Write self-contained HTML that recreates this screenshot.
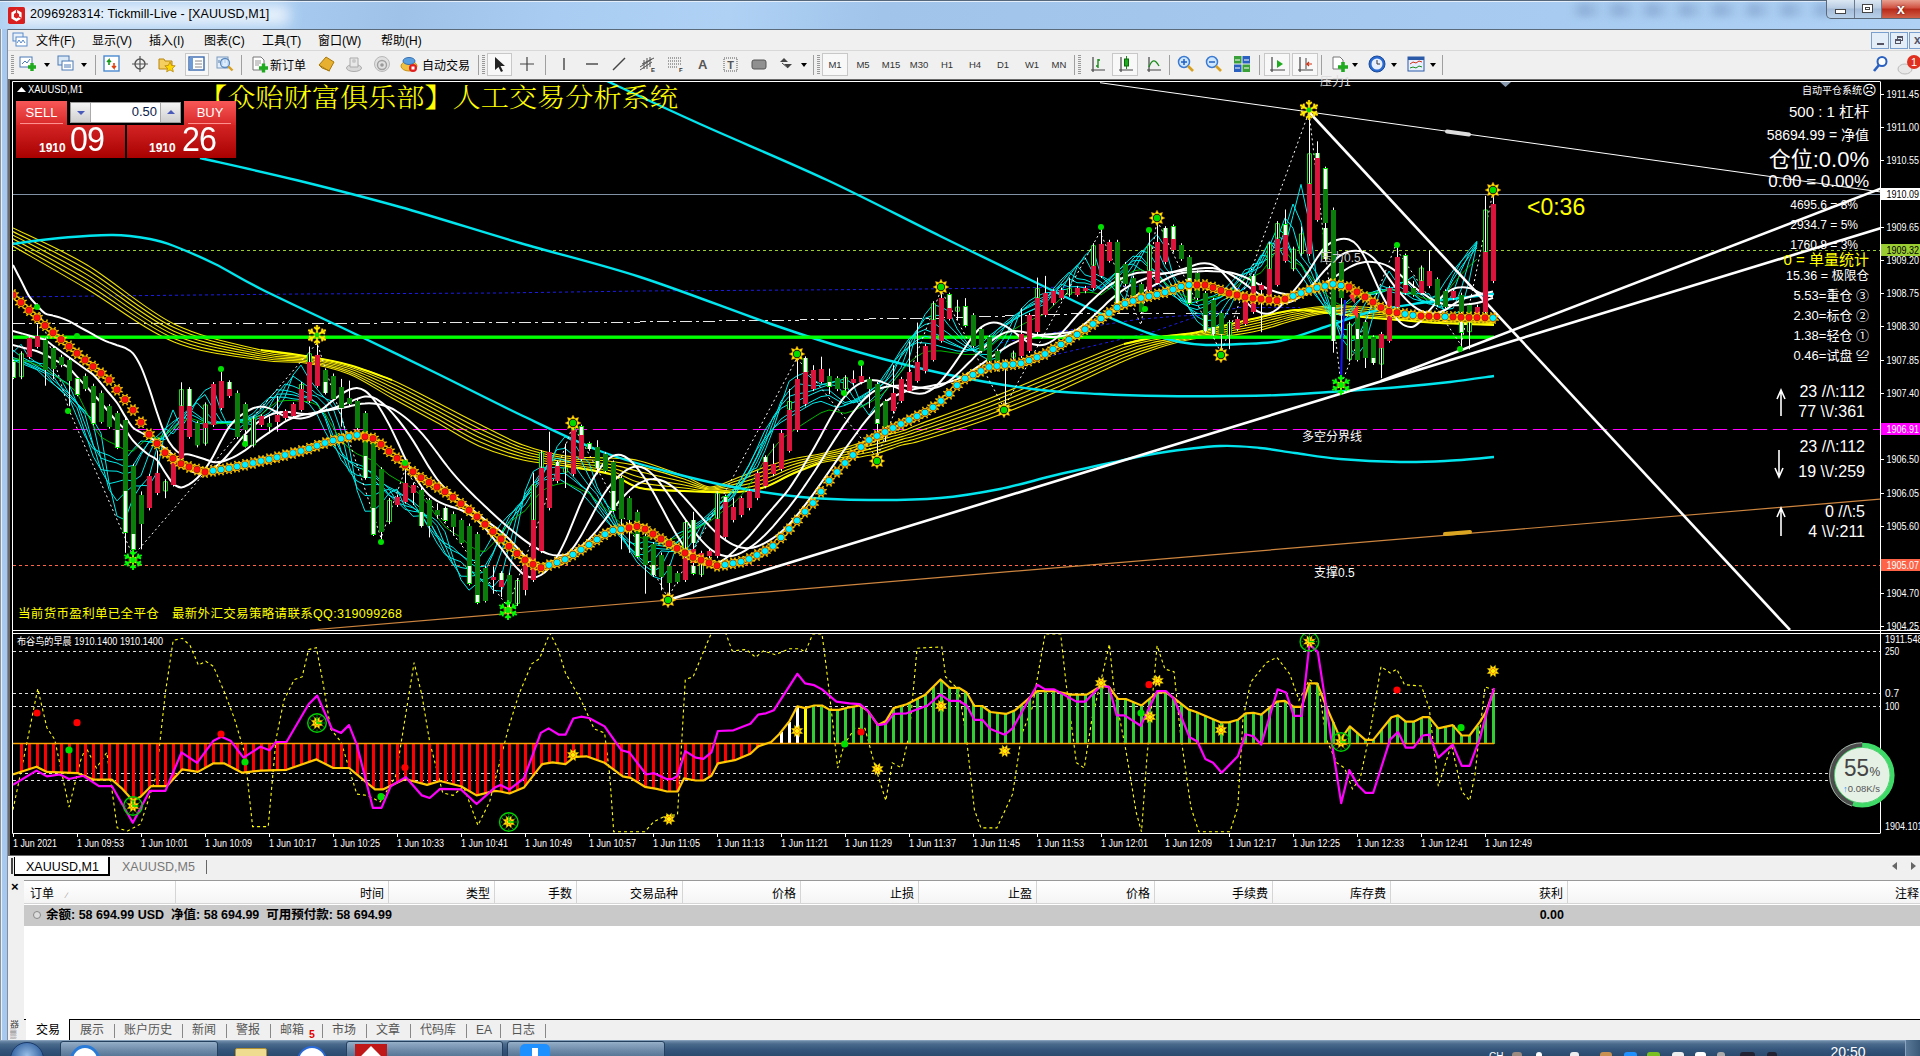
<!DOCTYPE html><html><head><meta charset="utf-8"><title>XAUUSD,M1</title><style>
*{box-sizing:border-box}
html,body{margin:0;padding:0}
body{width:1920px;height:1056px;overflow:hidden;position:relative;background:#f0f0f0;font-family:"Liberation Sans","Noto Sans CJK SC",sans-serif;font-size:12px;color:#000}
.abs{position:absolute}
#title{left:0;top:0;width:1920px;height:29px;background:linear-gradient(180deg,#56687c 0,#56687c 1px,#e4eefa 1px,#e4eefa 2px,rgba(255,255,255,0) 2px),linear-gradient(100deg,#b4d3f3 0%,#a8ccf1 14%,#9ec2e8 21%,#a9cdf2 29%,#aed1f4 38%,#a0c4ea 46%,#a3c7ec 60%,#a6caf0 75%,#aed1f4 100%)}
#title .t{left:30px;top:7px;font-size:12.5px;color:#000;white-space:nowrap;letter-spacing:0.1px}
#lb{left:0;top:29px;width:8px;height:1011px;background:linear-gradient(90deg,#5a6878 0,#e8f0f8 1.5px,#a9c9ee 2.5px,#a6c8ef 6.5px,#7f8fa0 7.5px)}
#menu{left:8px;top:29px;width:1912px;height:21px;background:#f0f0f0;border-top:1px solid #5c6b7c}
#menu span{position:absolute;top:1px;font-size:12px;white-space:nowrap}
#tb{left:8px;top:50px;width:1912px;height:29px;background:#f0f0f0;border-top:1px solid #d8d8d8}
.tf{position:absolute;top:8px;font-size:9.5px;color:#333;width:28px;text-align:center}
.sep{position:absolute;top:4px;width:1px;height:20px;background:#a0a0a0}
.grip{position:absolute;top:4px;width:3px;height:20px;background:repeating-linear-gradient(180deg,#999 0,#999 1px,#f0f0f0 1px,#f0f0f0 2px)}
.ic{position:absolute;top:4px;width:18px;height:18px}
#tabs{left:8px;top:856px;width:1912px;height:22px;background:#f0f0f0;border-top:1px solid #fff}
#term{left:8px;top:878px;width:1912px;height:162px;background:#f0f0f0}
#taskbar{left:0;top:1040px;width:1920px;height:16px;background:linear-gradient(180deg,#9db4cc 0,#6d8aa8 1px,#4a6a8c 4px,#34557a 10px,#2a4a6e 16px)}
.hd{position:absolute;top:0;height:23px;border-right:1px solid #d5d5d5;font-size:12px;text-align:right;padding:3px 4px 0 0;white-space:nowrap}
.bt{position:absolute;top:2px;line-height:17px;font-size:12px;color:#555;white-space:nowrap}
.bs{position:absolute;top:4px;width:1px;height:14px;background:#888}
</style></head><body><div id="title" class="abs"><div class="abs" style="left:14px;top:5px;width:275px;height:20px;background:rgba(255,255,255,.75);filter:blur(7px)"></div><svg class="abs" style="left:8px;top:7px" width="17" height="17" viewBox="0 0 20 20"><rect width="20" height="20" rx="2" fill="#d81e1e"/><path d="M10 3l6 3.500v7L10 17l-6-3.500v-7z" fill="#fff"/><path d="M10 6.500l3 1.800v3.500L10 13.500l-3-1.700V8.300z" fill="#d81e1e"/><path d="M10 3v4M16 13.500l-3.500-2" stroke="#d81e1e" stroke-width="1.500"/></svg><div class="abs t">2096928314: Tickmill-Live - [XAUUSD,M1]</div><div class="abs" style="left:1570px;top:3px;width:270px;height:14px;background:repeating-linear-gradient(90deg,rgba(120,150,190,.0) 0,rgba(110,140,185,.45) 14px,rgba(120,150,190,0) 34px);filter:blur(3px)"></div><div class="abs" style="left:1826px;top:0;width:94px;height:19px;border:1px solid #5a6878;border-top:0;border-radius:0 0 0 5px;background:linear-gradient(#dce8f4,#b8cce2 45%,#a4bcd8 50%,#b8d0e8)"></div><div class="abs" style="left:1882px;top:0;width:38px;height:18px;background:linear-gradient(#e8a090,#d05040 45%,#b82818 50%,#d06048)"></div><div class="abs" style="left:1854px;top:0;width:1px;height:18px;background:#6a7a8c"></div><div class="abs" style="left:1881px;top:0;width:1px;height:18px;background:#6a7a8c"></div><div class="abs" style="left:1835px;top:9px;width:11px;height:5px;border:1px solid #444;background:#fff"></div><div class="abs" style="left:1862px;top:4px;width:11px;height:9px;border:1px solid #444;background:#fff"><div class="abs" style="left:2px;top:2px;width:5px;height:3px;border:1px solid #444"></div></div><div class="abs" style="left:1897px;top:1px;font-size:14px;font-weight:bold;color:#fff;text-shadow:0 0 2px #400">x</div></div><div id="lb" class="abs"></div><div id="menu" class="abs"><svg class="abs" style="left:4px;top:2px" width="16" height="16" viewBox="0 0 16 16"><rect x="1" y="1" width="10" height="8" fill="#e8f0fa" stroke="#5a8ac8"/><rect x="4" y="5" width="11" height="9" fill="#fff" stroke="#5a8ac8"/><path d="M5 11l2-3 2 3 2-3 2 3" stroke="#5a8ac8" fill="none"/></svg><span style="left:28px">文件(F)</span><span style="left:84px">显示(V)</span><span style="left:141px">插入(I)</span><span style="left:196px">图表(C)</span><span style="left:254px">工具(T)</span><span style="left:310px">窗口(W)</span><span style="left:373px">帮助(H)</span><div class="abs" style="left:1863px;top:2px;width:18px;height:17px;border:1px solid #7aa0d0;background:#e4eef8"><div class="abs" style="left:5px;top:10px;width:7px;height:2px;background:#556"></div></div><div class="abs" style="left:1882px;top:2px;width:18px;height:17px;border:1px solid #7aa0d0;background:#e4eef8"><div class="abs" style="left:6px;top:3px;width:6px;height:5px;border:1px solid #556;border-top-width:2px"></div><div class="abs" style="left:4px;top:6px;width:6px;height:5px;border:1px solid #556;border-top-width:2px;background:#e4eef8"></div></div><div class="abs" style="left:1901px;top:2px;width:18px;height:17px;border:1px solid #7aa0d0;background:#e4eef8"><div class="abs" style="left:4px;top:0px;font-size:12px;font-weight:bold;color:#556">x</div></div></div><div id="tb" class="abs"><div class="grip" style="left:3px"></div><svg class="ic" style="left:11px" viewBox="0 0 18 18"><rect x="1" y="2" width="12" height="10" fill="#fff" stroke="#4a7ab5"/><path d="M3 9l3-3 2 2 3-4" stroke="#4a7ab5" fill="none"/><path d="M9 12h8M13 8v8" stroke="#1faa1f" stroke-width="3.4"/></svg><div class="abs" style="left:36px;top:12px;border:3px solid transparent;border-top:4px solid #000"></div><svg class="ic" style="left:49px" viewBox="0 0 18 18"><rect x="1" y="1" width="11" height="9" fill="#dbe8f5" stroke="#4a7ab5"/><rect x="5" y="6" width="11" height="9" fill="#fff" stroke="#4a7ab5"/><path d="M7 10h7M7 12h7" stroke="#4a7ab5"/></svg><div class="abs" style="left:73px;top:12px;border:3px solid transparent;border-top:4px solid #000"></div><div class="sep" style="left:87px"></div><svg class="ic" style="left:95px" viewBox="0 0 18 18"><rect x="1" y="1" width="15" height="15" fill="#fff" stroke="#4a8ad0" stroke-width="1.4"/><path d="M6 10V5l-2 2M6 5l2 2" stroke="#1a9a1a" stroke-width="1.6" fill="none"/><path d="M11 8v5l-2-2M11 13l2-2" stroke="#e04010" stroke-width="1.6" fill="none"/></svg><svg class="ic" style="left:123px" viewBox="0 0 18 18"><circle cx="9" cy="9" r="5" fill="none" stroke="#555" stroke-width="1.4"/><path d="M9 1v16M1 9h16" stroke="#555" stroke-width="1.2"/></svg><svg class="ic" style="left:150px" viewBox="0 0 18 18"><path d="M1 4h5l1 2h7v8H1z" fill="#f5d060" stroke="#b8860b"/><path d="M12 7l1.6 3.4 3.6.4-2.7 2.4.8 3.6-3.3-1.9-3.3 1.9.8-3.6L6.800 10.800l3.600-.4z" fill="#ffd700" stroke="#b8860b" stroke-width=".8"/></svg><div class="abs" style="left:177px;top:2px;width:24px;height:23px;border:1px solid #c8c8c8;background:#f8f8f8"></div><svg class="ic" style="left:180px" viewBox="0 0 18 18"><rect x="1" y="2" width="15" height="13" fill="#fff" stroke="#3a6ab0" stroke-width="1.4"/><rect x="2" y="3" width="3" height="11" fill="#6a9ad8"/><path d="M7 6h7M7 9h7M7 12h7" stroke="#888"/></svg><svg class="ic" style="left:208px" viewBox="0 0 18 18"><rect x="1" y="2" width="11" height="11" fill="#e4eef8" stroke="#7a9ac0"/><path d="M3 8V5M6 10V4M9 8V5" stroke="#5a7aa0"/><circle cx="9" cy="8" r="4.5" fill="#d8ecff" fill-opacity=".7" stroke="#5a8ac0" stroke-width="1.3"/><path d="M12.500 11.500l4 4" stroke="#d8a020" stroke-width="2.4"/></svg><div class="sep" style="left:233px"></div><svg class="ic" style="left:243px" viewBox="0 0 18 18"><path d="M2 2h8l3 3v10H2z" fill="#fff" stroke="#777"/><path d="M4 6h6M4 8h6M4 10h4" stroke="#999"/><path d="M8 13h9M12.500 8.500v9" stroke="#1faa1f" stroke-width="3.4"/></svg><span class="abs" style="left:262px;top:5px;font-size:12px">新订单</span><svg class="ic" style="left:309px" viewBox="0 0 18 18"><path d="M2 10l7-8 8 5-5 9z" fill="#e8b030" stroke="#a87808"/><path d="M2 10l3 3 8 3" fill="none" stroke="#a87808"/></svg><svg class="ic" style="left:337px" viewBox="0 0 18 18"><ellipse cx="9" cy="13" rx="7.500" ry="3.500" fill="#d8d8d8" stroke="#aaa"/><path d="M5 3h8v9H5z" fill="#e8e8e8" stroke="#aaa"/><circle cx="9" cy="6" r="2" fill="#c8c8c8"/></svg><svg class="ic" style="left:365px" viewBox="0 0 18 18"><circle cx="9" cy="9" r="7.500" fill="#e0e0e0" stroke="#b8b8b8"/><circle cx="9" cy="10" r="4.500" fill="none" stroke="#a0a0a0" stroke-width="1.4"/><circle cx="9" cy="10" r="1.800" fill="#999"/></svg><svg class="ic" style="left:392px" viewBox="0 0 18 18"><ellipse cx="9" cy="11" rx="8" ry="5" fill="#f0c040" stroke="#c89010"/><ellipse cx="9" cy="6" rx="6" ry="3.500" fill="#5aa0e0" stroke="#3a70b0"/><circle cx="13" cy="13" r="4" fill="#e02020"/><rect x="11.500" y="11.500" width="3" height="3" fill="#fff"/></svg><span class="abs" style="left:414px;top:5px;font-size:12px">自动交易</span><div class="sep" style="left:470px"></div><div class="grip" style="left:474px"></div><div class="abs" style="left:479px;top:2px;width:25px;height:23px;border:1px solid #c8c8c8;background:#f8f8f8"></div><svg class="ic" style="left:482px" viewBox="0 0 18 18"><path d="M5 2v13l3.500-3 2.500 5 2-1-2.500-5H15z" fill="#222"/></svg><svg class="ic" style="left:510px" viewBox="0 0 18 18"><path d="M9 2v14M2 9h14" stroke="#444" stroke-width="1.2"/></svg><div class="sep" style="left:537px"></div><svg class="ic" style="left:547px" viewBox="0 0 18 18"><path d="M9 3v12" stroke="#444" stroke-width="1.4"/></svg><svg class="ic" style="left:575px" viewBox="0 0 18 18"><path d="M3 9h12" stroke="#444" stroke-width="1.4"/></svg><svg class="ic" style="left:602px" viewBox="0 0 18 18"><path d="M3 15L15 3" stroke="#444" stroke-width="1.4"/></svg><svg class="ic" style="left:630px" viewBox="0 0 18 18"><path d="M2 12l12-8M2 15l12-8M4 9l12-6M6 5v9M9 3v11M12 2v10" stroke="#555" stroke-width="1"/><text x="13" y="17" font-size="6" font-weight="bold" fill="#333">E</text></svg><svg class="ic" style="left:658px" viewBox="0 0 18 18"><path d="M2 3h13M2 6h13M2 9h13M2 12h9" stroke="#555" stroke-width="1" stroke-dasharray="1 1"/><text x="13" y="17" font-size="6" font-weight="bold" fill="#333">F</text></svg><span class="abs" style="left:690px;top:6px;font-size:13px;font-weight:bold;color:#555">A</span><svg class="ic" style="left:714px" viewBox="0 0 18 18"><rect x="2" y="3" width="13" height="13" fill="none" stroke="#555" stroke-dasharray="1 1"/><text x="8.500" y="14" font-size="11" font-weight="bold" fill="#555" text-anchor="middle">T</text></svg><svg class="ic" style="left:742px" viewBox="0 0 18 18"><rect x="2" y="5" width="14" height="9" rx="2" fill="#909090" stroke="#555"/></svg><svg class="ic" style="left:769px" viewBox="0 0 18 18"><path d="M3 7l4-4 4 4-4 0zM7 9l4 4 4-4z" fill="#444"/><path d="M5 8l6 5" stroke="#444"/></svg><div class="abs" style="left:793px;top:12px;border:3px solid transparent;border-top:4px solid #000"></div><div class="sep" style="left:805px"></div><div class="grip" style="left:809px"></div><div class="abs" style="left:814px;top:2px;width:26px;height:23px;border:1px solid #c8c8c8;background:#f8f8f8"></div><span class="tf" style="left:813px">M1</span><span class="tf" style="left:841px">M5</span><span class="tf" style="left:869px">M15</span><span class="tf" style="left:897px">M30</span><span class="tf" style="left:925px">H1</span><span class="tf" style="left:953px">H4</span><span class="tf" style="left:981px">D1</span><span class="tf" style="left:1010px">W1</span><span class="tf" style="left:1037px">MN</span><div class="sep" style="left:1066px"></div><div class="grip" style="left:1070px"></div><svg class="ic" style="left:1080px" viewBox="0 0 18 18"><path d="M3 15h14M5 2v15" stroke="#444" stroke-width="1.2"/><path d="M10 4v9M10 11h-2M10 5h2" stroke="#1a8a1a" stroke-width="1.4"/></svg><div class="abs" style="left:1104px;top:2px;width:26px;height:23px;border:1px solid #c8c8c8;background:#f8f8f8"></div><svg class="ic" style="left:1108px" viewBox="0 0 18 18"><path d="M3 15h14M5 2v15" stroke="#444" stroke-width="1.2"/><path d="M10.500 1v13" stroke="#1a8a1a"/><rect x="8.500" y="4" width="4" height="7" fill="#1faa1f" stroke="#0a6a0a"/></svg><svg class="ic" style="left:1136px" viewBox="0 0 18 18"><path d="M3 15h14M5 2v15" stroke="#444" stroke-width="1.2"/><path d="M5 12c3-8 6-8 10-1" stroke="#1a8a1a" stroke-width="1.3" fill="none"/></svg><div class="sep" style="left:1161px"></div><svg class="ic" style="left:1169px" viewBox="0 0 18 18"><circle cx="7" cy="7" r="5.500" fill="#cfe6ff" stroke="#3a7ad0" stroke-width="1.5"/><path d="M4 7h6M7 4v6" stroke="#2060c0" stroke-width="1.5"/><path d="M11 11l5 5" stroke="#d8a020" stroke-width="2.600"/></svg><svg class="ic" style="left:1197px" viewBox="0 0 18 18"><circle cx="7" cy="7" r="5.500" fill="#cfe6ff" stroke="#3a7ad0" stroke-width="1.5"/><path d="M4 7h6" stroke="#2060c0" stroke-width="1.5"/><path d="M11 11l5 5" stroke="#d8a020" stroke-width="2.600"/></svg><svg class="ic" style="left:1225px" viewBox="0 0 18 18"><rect x="1" y="1" width="7.500" height="7.500" fill="#3aa03a"/><rect x="9.500" y="1" width="7.500" height="7.500" fill="#2a60c0"/><rect x="1" y="9.500" width="7.500" height="7.500" fill="#2a60c0"/><rect x="9.500" y="9.500" width="7.500" height="7.500" fill="#3aa03a"/><path d="M2 5h5M11 5h5M2 13h5M11 13h5" stroke="#fff"/></svg><div class="sep" style="left:1251px"></div><div class="abs" style="left:1256px;top:2px;width:26px;height:23px;border:1px solid #c8c8c8;background:#f8f8f8"></div><svg class="ic" style="left:1260px" viewBox="0 0 18 18"><path d="M2 15h15M4 2v15" stroke="#444" stroke-width="1.2"/><path d="M9 5l6 4-6 4z" fill="#1faa1f"/></svg><div class="abs" style="left:1284px;top:2px;width:26px;height:23px;border:1px solid #c8c8c8;background:#f8f8f8"></div><svg class="ic" style="left:1288px" viewBox="0 0 18 18"><path d="M2 15h15M4 2v15" stroke="#444" stroke-width="1.2"/><path d="M10 3v11" stroke="#444"/><path d="M16 9h-5l2-2M11 9l2 2" stroke="#d03010" stroke-width="1.2" fill="none"/></svg><div class="sep" style="left:1313px"></div><svg class="ic" style="left:1323px" viewBox="0 0 18 18"><path d="M2 2h7l3 3v9H2z" fill="#fff" stroke="#777"/><path d="M7 12h10M12 7v10" stroke="#1faa1f" stroke-width="3.600"/></svg><div class="abs" style="left:1344px;top:12px;border:3px solid transparent;border-top:4px solid #000"></div><svg class="ic" style="left:1360px" viewBox="0 0 18 18"><circle cx="9" cy="9" r="8" fill="#2a6ad0" stroke="#1a4a9a"/><circle cx="9" cy="9" r="5.500" fill="#e8f0ff"/><path d="M9 5v4h3" stroke="#333" fill="none"/></svg><div class="abs" style="left:1383px;top:12px;border:3px solid transparent;border-top:4px solid #000"></div><svg class="ic" style="left:1399px" viewBox="0 0 18 18"><rect x="1" y="2" width="16" height="14" fill="#e8f0ff" stroke="#2a5aa8"/><rect x="1" y="2" width="16" height="3" fill="#2a5aa8"/><path d="M3 9l3-2 3 1 3-2 3 1" stroke="#d03010" fill="none"/><path d="M3 13l3-1 3 1 3-2 3 1" stroke="#1a8a1a" fill="none"/></svg><div class="abs" style="left:1422px;top:12px;border:3px solid transparent;border-top:4px solid #000"></div><div class="sep" style="left:1434px"></div><svg class="ic" style="left:1863px" viewBox="0 0 18 18"><circle cx="11" cy="6.500" r="4.500" fill="#fff" stroke="#2a60c0" stroke-width="2"/><path d="M8 10l-5 6" stroke="#2a60c0" stroke-width="2.600"/></svg><svg class="abs" style="left:1888px;top:2px;width:24px;height:24px" viewBox="0 0 24 24"><ellipse cx="9" cy="16" rx="7" ry="5" fill="#e8e8e8" stroke="#bbb"/><circle cx="18" cy="9" r="7" fill="#e03020"/><text x="18" y="13" font-size="11" fill="#fff" text-anchor="middle" font-family='"Liberation Sans",sans-serif'>1</text></svg></div><svg width="1920" height="1056" viewBox="0 0 1920 1056" style="position:absolute;left:0;top:0" font-family='"Liberation Sans","Noto Sans CJK SC",sans-serif'><defs><clipPath id="cm"><rect x="13" y="82" width="1867" height="548"/></clipPath><clipPath id="cs"><rect x="13" y="634" width="1867" height="199"/></clipPath></defs><rect x="8" y="79" width="1912" height="778" fill="#6a6a6a"/><rect x="10" y="80" width="1910" height="775" fill="#000"/><g clip-path="url(#cm)"><line x1="13" y1="194.5" x2="1881" y2="194.5" stroke="#8091a5" stroke-width="1"/>
<line x1="13" y1="250.5" x2="1881" y2="250.5" stroke="#9acd32" stroke-width="1" stroke-dasharray="3 3"/>
<polyline points="13,297 100,296 300,294 500,293 640,291 800,290 920,289 1000,288 1159,286 1200,287 1250,289" fill="none" stroke="#1c1ce8" stroke-width="1" stroke-dasharray="3 3"/>
<polyline points="1000,343 1060,331.5 1137,319.5 1179,316 1230,314" fill="none" stroke="#1c1ce8" stroke-width="1" stroke-dasharray="3 3"/>
<polyline points="1000,368 1060,353.6 1154,331.5 1201,315 1239,307.6 1300,307.6" fill="none" stroke="#1c1ce8" stroke-width="1" stroke-dasharray="3 3"/>
<polyline points="13,324 300,323.5 460,322.5 640,322 800,320 940,318 1070,314 1180,313 1240,313" fill="none" stroke="#e8e8e8" stroke-width="1" stroke-dasharray="12 4 3 4" shape-rendering="crispEdges"/>
<line x1="13" y1="429.5" x2="1881" y2="429.5" stroke="#ff00ff" stroke-width="1" stroke-dasharray="14 6"/>
<line x1="13" y1="565.5" x2="1881" y2="565.5" stroke="#ff6347" stroke-width="1" stroke-dasharray="3 3"/>
<line x1="310" y1="630" x2="1881" y2="499" stroke="#cd853f" stroke-width="1.2"/>
<line x1="1445" y1="534" x2="1470" y2="532" stroke="#daa520" stroke-width="4" stroke-linecap="round"/>
<line x1="1100" y1="82.7" x2="1881" y2="192" stroke="#fff" stroke-width="1"/>
<line x1="1447" y1="131.5" x2="1469" y2="134.5" stroke="#ddd" stroke-width="4" stroke-linecap="round"/>
<path d="M13 228C25.3 234.2 60.2 249 87 265C113.8 281 145 309.8 174 324C203 338.2 239.2 344.7 261 350C282.8 355.3 290.3 353.5 305 356C319.7 358.5 334.5 361 349 365C363.5 369 377.5 373.8 392 380C406.5 386.2 421.5 394.7 436 402C450.5 409.3 464.5 416.8 479 424C493.5 431.2 508.5 439.7 523 445C537.5 450.3 551.5 453.8 566 456C580.5 458.2 597.7 457.2 610 458C622.3 458.8 627.7 458 640 461C652.3 464 672.3 471.7 684 476C695.7 480.3 701.2 486.7 710 487C718.8 487.3 727.8 481.3 737 478C746.2 474.7 755.8 470.2 765 467C774.2 463.8 782.8 461.2 792 459C801.2 456.8 810.8 456 820 454C829.2 452 837.8 449.7 847 447C856.2 444.3 865.8 440.7 875 438C884.2 435.3 894.5 433.3 902 431C909.5 428.7 905.7 429.3 920 424C934.3 418.7 965.3 407.8 988 399C1010.7 390.2 1033.3 380.2 1056 371C1078.7 361.8 1107 349.7 1124 344C1141 338.3 1146.5 338.8 1158 337C1169.5 335.2 1181.5 335 1193 333C1204.5 331 1215.7 327.7 1227 325C1238.3 322.3 1249.7 319.5 1261 317C1272.3 314.5 1283.7 311.8 1295 310C1306.3 308.2 1317.7 306.5 1329 306C1340.3 305.5 1351.2 306.2 1363 307C1374.8 307.8 1387.2 309.8 1400 311C1412.8 312.2 1424.3 312.7 1440 314C1455.7 315.3 1485 318.2 1494 319" fill="none" stroke="#f2e400" stroke-width="1.1"/>
<path d="M13 231.6C25.3 238 60.2 253.8 87 269.8C113.8 285.8 145 313.9 174 327.6C203 341.3 239.2 347 261 352C282.8 357 290.3 354.9 305 357.4C319.7 359.9 334.5 362.4 349 366.8C363.5 371.2 377.5 377.1 392 383.6C406.5 390.1 421.5 398.5 436 406C450.5 413.5 464.5 421.4 479 428.4C493.5 435.4 508.5 443.1 523 448C537.5 452.9 551.5 455.8 566 458C580.5 460.2 597.7 459.8 610 461.2C622.3 462.6 627.7 463.4 640 466.4C652.3 469.4 672.3 475.4 684 479C695.7 482.6 701.2 487.7 710 488C718.8 488.3 727.8 483.6 737 480.8C746.2 478 755.8 474.1 765 471C774.2 467.9 782.8 464.5 792 462C801.2 459.5 810.8 457.9 820 455.8C829.2 453.7 837.8 451.8 847 449.4C856.2 447 865.8 443.8 875 441.2C884.2 438.6 894.5 436.1 902 433.8C909.5 431.5 905.7 432.5 920 427.4C934.3 422.3 965.3 411.7 988 403C1010.7 394.3 1033.3 384.5 1056 375.2C1078.7 365.9 1107 353.4 1124 347.4C1141 341.4 1146.5 341.4 1158 339.2C1169.5 337 1181.5 336.2 1193 334.2C1204.5 332.2 1215.7 329.6 1227 327.2C1238.3 324.8 1249.7 322.1 1261 319.6C1272.3 317.1 1283.7 314 1295 312C1306.3 310 1317.7 307.9 1329 307.4C1340.3 306.9 1351.2 308.1 1363 309C1374.8 309.9 1387.2 311.7 1400 312.8C1412.8 313.9 1424.3 314.6 1440 315.8C1455.7 317 1485 319.5 1494 320.2" fill="none" stroke="#f2e400" stroke-width="1.1"/>
<path d="M13 235.2C25.3 241.8 60.2 258.6 87 274.6C113.8 290.6 145 318 174 331.2C203 344.4 239.2 349.4 261 354C282.8 358.6 290.3 356.4 305 358.8C319.7 361.2 334.5 363.9 349 368.6C363.5 373.3 377.5 380.3 392 387.2C406.5 394.1 421.5 402.4 436 410C450.5 417.6 464.5 426 479 432.8C493.5 439.6 508.5 446.5 523 451C537.5 455.5 551.5 457.8 566 460C580.5 462.2 597.7 462.4 610 464.4C622.3 466.4 627.7 468.9 640 471.8C652.3 474.7 672.3 479.1 684 482C695.7 484.9 701.2 488.7 710 489C718.8 489.3 727.8 485.9 737 483.6C746.2 481.3 755.8 478.1 765 475C774.2 471.9 782.8 467.9 792 465C801.2 462.1 810.8 459.8 820 457.6C829.2 455.4 837.8 454 847 451.8C856.2 449.6 865.8 446.9 875 444.4C884.2 441.9 894.5 438.9 902 436.6C909.5 434.3 905.7 435.7 920 430.8C934.3 425.9 965.3 415.6 988 407C1010.7 398.4 1033.3 388.8 1056 379.4C1078.7 370 1107 357.1 1124 350.8C1141 344.5 1146.5 344 1158 341.4C1169.5 338.8 1181.5 337.4 1193 335.4C1204.5 333.4 1215.7 331.6 1227 329.4C1238.3 327.2 1249.7 324.8 1261 322.2C1272.3 319.6 1283.7 316.2 1295 314C1306.3 311.8 1317.7 309.3 1329 308.8C1340.3 308.3 1351.2 310 1363 311C1374.8 312 1387.2 313.5 1400 314.6C1412.8 315.7 1424.3 316.5 1440 317.6C1455.7 318.7 1485 320.8 1494 321.4" fill="none" stroke="#f2e400" stroke-width="1.1"/>
<path d="M13 238.8C25.3 245.6 60.2 263.4 87 279.4C113.8 295.4 145 322 174 334.8C203 347.6 239.2 351.8 261 356C282.8 360.2 290.3 357.8 305 360.2C319.7 362.6 334.5 365.3 349 370.4C363.5 375.5 377.5 383.5 392 390.8C406.5 398.1 421.5 406.3 436 414C450.5 421.7 464.5 430.5 479 437.2C493.5 443.9 508.5 449.9 523 454C537.5 458.1 551.5 459.7 566 462C580.5 464.3 597.7 465.1 610 467.6C622.3 470.1 627.7 474.3 640 477.2C652.3 480.1 672.3 482.9 684 485C695.7 487.1 701.2 489.8 710 490C718.8 490.2 727.8 488.2 737 486.4C746.2 484.6 755.8 482.1 765 479C774.2 475.9 782.8 471.3 792 468C801.2 464.7 810.8 461.7 820 459.4C829.2 457.1 837.8 456.2 847 454.2C856.2 452.2 865.8 450.1 875 447.6C884.2 445.1 894.5 441.6 902 439.4C909.5 437.2 905.7 438.9 920 434.2C934.3 429.5 965.3 419.4 988 411C1010.7 402.6 1033.3 393.1 1056 383.6C1078.7 374.1 1107 360.9 1124 354.2C1141 347.5 1146.5 346.5 1158 343.6C1169.5 340.7 1181.5 338.6 1193 336.6C1204.5 334.6 1215.7 333.6 1227 331.6C1238.3 329.6 1249.7 327.4 1261 324.8C1272.3 322.2 1283.7 318.4 1295 316C1306.3 313.6 1317.7 310.7 1329 310.2C1340.3 309.7 1351.2 312 1363 313C1374.8 314 1387.2 315.3 1400 316.4C1412.8 317.5 1424.3 318.4 1440 319.4C1455.7 320.4 1485 322.1 1494 322.6" fill="none" stroke="#f2e400" stroke-width="1.1"/>
<path d="M13 242.4C25.3 249.4 60.2 268.2 87 284.2C113.8 300.2 145 326.1 174 338.4C203 350.7 239.2 354.1 261 358C282.8 361.9 290.3 359.2 305 361.6C319.7 364 334.5 366.7 349 372.2C363.5 377.7 377.5 386.8 392 394.4C406.5 402 421.5 410.1 436 418C450.5 425.9 464.5 435.1 479 441.6C493.5 448.1 508.5 453.3 523 457C537.5 460.7 551.5 461.7 566 464C580.5 466.3 597.7 467.7 610 470.8C622.3 473.9 627.7 479.7 640 482.6C652.3 485.5 672.3 486.6 684 488C695.7 489.4 701.2 490.8 710 491C718.8 491.2 727.8 490.5 737 489.2C746.2 487.9 755.8 486 765 483C774.2 480 782.8 474.6 792 471C801.2 467.4 810.8 463.6 820 461.2C829.2 458.8 837.8 458.3 847 456.6C856.2 454.9 865.8 453.2 875 450.8C884.2 448.4 894.5 444.4 902 442.2C909.5 440 905.7 442.1 920 437.6C934.3 433.1 965.3 423.3 988 415C1010.7 406.7 1033.3 397.4 1056 387.8C1078.7 378.2 1107 364.6 1124 357.6C1141 350.6 1146.5 349.1 1158 345.8C1169.5 342.5 1181.5 339.8 1193 337.8C1204.5 335.8 1215.7 335.5 1227 333.8C1238.3 332.1 1249.7 330 1261 327.4C1272.3 324.8 1283.7 320.6 1295 318C1306.3 315.4 1317.7 312.1 1329 311.6C1340.3 311.1 1351.2 313.9 1363 315C1374.8 316.1 1387.2 317.2 1400 318.2C1412.8 319.2 1424.3 320.3 1440 321.2C1455.7 322.1 1485 323.4 1494 323.8" fill="none" stroke="#f2e400" stroke-width="1.1"/>
<path d="M13 246C25.3 253.2 60.2 273 87 289C113.8 305 145 330.2 174 342C203 353.8 239.2 356.5 261 360C282.8 363.5 290.3 360.7 305 363C319.7 365.3 334.5 368.2 349 374C363.5 379.8 377.5 390 392 398C406.5 406 421.5 414 436 422C450.5 430 464.5 439.7 479 446C493.5 452.3 508.5 456.7 523 460C537.5 463.3 551.5 463.7 566 466C580.5 468.3 597.7 470.3 610 474C622.3 477.7 627.7 485.2 640 488C652.3 490.8 672.3 490.3 684 491C695.7 491.7 701.2 491.8 710 492C718.8 492.2 727.8 492.8 737 492C746.2 491.2 755.8 490 765 487C774.2 484 782.8 478 792 474C801.2 470 810.8 465.5 820 463C829.2 460.5 837.8 460.5 847 459C856.2 457.5 865.8 456.3 875 454C884.2 451.7 894.5 447.2 902 445C909.5 442.8 905.7 445.3 920 441C934.3 436.7 965.3 427.2 988 419C1010.7 410.8 1033.3 401.7 1056 392C1078.7 382.3 1107 368.3 1124 361C1141 353.7 1146.5 351.7 1158 348C1169.5 344.3 1181.5 341 1193 339C1204.5 337 1215.7 337.5 1227 336C1238.3 334.5 1249.7 332.7 1261 330C1272.3 327.3 1283.7 322.8 1295 320C1306.3 317.2 1317.7 313.5 1329 313C1340.3 312.5 1351.2 315.8 1363 317C1374.8 318.2 1387.2 319 1400 320C1412.8 321 1424.3 322.2 1440 323C1455.7 323.8 1485 324.7 1494 325" fill="none" stroke="#f2e400" stroke-width="1.1"/>
<path d="M566 466C573.3 467.3 597.7 470.3 610 474C622.3 477.7 627.7 485.2 640 488C652.3 490.8 672.3 490.3 684 491C695.7 491.7 701.2 491.8 710 492C718.8 492.2 727.8 492.8 737 492C746.2 491.2 755.8 490 765 487C774.2 484 782.8 478 792 474C801.2 470 815.3 464.8 820 463" fill="none" stroke="#ffff00" stroke-width="2.2"/>
<path d="M1124 344C1129.7 342.8 1146.5 338.8 1158 337C1169.5 335.2 1181.5 335 1193 333C1204.5 331 1215.7 327.7 1227 325C1238.3 322.3 1249.7 319.5 1261 317C1272.3 314.5 1283.7 310.7 1295 310C1306.3 309.3 1317.7 311.8 1329 313C1340.3 314.2 1351.2 315.8 1363 317C1374.8 318.2 1387.2 319 1400 320C1412.8 321 1424.3 322.2 1440 323C1455.7 323.8 1485 324.7 1494 325" fill="none" stroke="#ffff00" stroke-width="2"/>
<path d="M261 350C268.3 351 290.3 353.5 305 356C319.7 358.5 334.5 361 349 365C363.5 369 384.8 377.5 392 380" fill="none" stroke="#ffff00" stroke-width="2"/>
<path d="M607 81C622.5 88.2 663.3 107.5 700 124C736.7 140.5 787 161.3 827 180C867 198.7 904.3 218.5 940 236C975.7 253.5 1018.3 274 1041 285C1063.7 296 1062.8 295.8 1076 302C1089.2 308.2 1107 316.5 1120 322C1133 327.5 1144 331.7 1154 335C1164 338.3 1171.3 340.3 1180 342C1188.7 343.7 1196 344.7 1206 345C1216 345.3 1227.7 344.7 1240 344C1252.3 343.3 1265.8 343.8 1280 341C1294.2 338.2 1310 331.8 1325 327C1340 322.2 1354.2 316 1370 312C1385.8 308 1405 305.3 1420 303C1435 300.7 1447.7 299.5 1460 298C1472.3 296.5 1488.3 294.7 1494 294" fill="none" stroke="#00e5ee" stroke-width="2.4"/>
<path d="M200 158C216 161.7 262.7 171.8 296 180C329.3 188.2 362.7 196.5 400 207C437.3 217.5 480 231.3 520 243C560 254.7 598.2 263.5 640 277C681.8 290.5 734.7 311.5 771 324C807.3 336.5 829 343.7 858 352C887 360.3 916 367.8 945 374C974 380.2 1006.2 385.7 1032 389C1057.8 392.3 1078.2 392.8 1100 394C1121.8 395.2 1141.3 395.7 1163 396C1184.7 396.3 1210.5 396.2 1230 396C1249.5 395.8 1263.5 395.7 1280 395C1296.5 394.3 1309 393.3 1329 392C1349 390.7 1379.8 388.7 1400 387C1420.2 385.3 1434.3 383.8 1450 382C1465.7 380.2 1486.7 377 1494 376" fill="none" stroke="#00e5ee" stroke-width="2.4"/>
<path d="M12 244C20 243 43.2 239.5 60 238C76.8 236.5 98 234.8 113 235C128 235.2 139.8 237.2 150 239C160.2 240.8 163.2 241.8 174 246C184.8 250.2 200.5 256.8 215 264C229.5 271.2 238.7 277.8 261 289C283.3 300.2 319.8 317 349 331C378.2 345 407 358.8 436 373C465 387.2 495.7 403 523 416C550.3 429 576.3 441.8 600 451C623.7 460.2 642.8 465 665 471C687.2 477 710.3 482.7 733 487C755.7 491.3 778.3 494.8 801 497C823.7 499.2 845.8 499.8 869 500C892.2 500.2 918.2 499.8 940 498C961.8 496.2 980.7 492.8 1000 489C1019.3 485.2 1037.7 479.3 1056 475C1074.3 470.7 1092.8 466.7 1110 463C1127.2 459.3 1140.7 455.8 1159 453C1177.3 450.2 1203.2 446.8 1220 446C1236.8 445.2 1247.5 446.8 1260 448C1272.5 449.2 1281.7 451.2 1295 453C1308.3 454.8 1322.5 457.5 1340 459C1357.5 460.5 1382.5 461.7 1400 462C1417.5 462.3 1429.3 461.8 1445 461C1460.7 460.2 1485.8 457.7 1494 457" fill="none" stroke="#00e5ee" stroke-width="2.4"/>
<rect x="13" y="335.5" width="1481" height="3.4" fill="#00ff00"/>
<polyline points="13,352.4 21,344.3 29,357.3 37,363 45,364.1 53,372.3 61,379.4 69,384.3 77,403.7 85,412.6 93,419.6 101,433.3 109,482.8 117,516.1 125,519.9 133,498 141,485.3 149,485.8 157,472.4 165,430.7 173,409.9 181,427.6 189,416 197,400 205,390.3 213,386.3 221,411.6 229,428.5 237,430.1 245,423.2 253,424.9 261,419.8 269,415.5 277,410 285,397 293,375.1 301,365.1 309,378.8 317,389.1 325,398.5 333,401.5 341,414.9 349,446.3 357,490.2 365,511.2 373,511.1 381,503.8 389,493.3 397,489 405,507.2 413,516.3 421,515.8 429,515.1 437,521.1 445,531.8 453,557.6 461,579.9 469,590.2 477,583.4 485,578.3 493,590.3 501,591.1 509,575.3 517,530 525,491.1 533,471.6 541,467 549,468.5 557,446.7 565,436.7 573,441.4 581,454.5 589,462.7 597,486.4 605,502.5 613,511.5 621,533.8 629,549.3 637,562.1 645,569.4 653,576.4 661,579.1 669,568.5 677,544.4 685,548.6 693,549.8 701,534.2 709,515.4 717,511.1 725,504.6 733,498 741,485.3 749,471.3 757,467.7 765,450.6 773,430.1 781,404.5 789,381.4 797,375.9 805,372.6 813,379.5 821,384.3 829,383.7 837,381.3 845,378.7 853,383.9 861,403.6 869,415.1 877,403.8 885,391.3 893,381.7 901,371.8 909,358.8 917,331 925,314.5 933,304.6 941,306.9 949,311.4 957,328.6 965,339.8 973,350.5 981,355.8 989,360.2 997,357.7 1005,345.8 1013,330.5 1021,309.2 1029,301.1 1037,296.2 1045,292.9 1053,292.1 1061,290 1069,288.9 1077,267.1 1085,255.3 1093,248.6 1101,275.9 1109,280.2 1117,288.3 1125,300 1133,272.6 1141,257.2 1149,242.7 1157,234.6 1165,246.7 1173,275 1181,286.5 1189,308.5 1197,321.2 1205,327.5 1213,328.2 1221,323.3 1229,309 1237,292.5 1245,288.5 1253,278.8 1261,258.7 1269,241.8 1277,250.3 1285,247 1293,215.5 1301,184.4 1309,221.7 1317,281.2 1325,289.7 1333,315.6 1341,337.6 1349,347.7 1357,355.3 1365,344.6 1373,316.3 1381,286.7 1389,271.1 1397,282.9 1405,282 1413,276.4 1421,290.7 1429,298.7 1437,295 1445,313.6 1453,314.4 1461,310.5 1469,281.3 1477,242.9" fill="none" stroke="#00ecec" stroke-width="1"/>
<polyline points="13,350.1 21,356.8 29,360.8 37,362.3 45,368.4 53,374.4 61,379.3 69,393.9 77,403.1 85,411 93,423 101,459.4 109,489.4 117,500.9 125,492.6 133,485.9 141,486 149,477 157,447.7 165,428.2 173,433.9 181,424.1 189,410.7 197,400.7 205,394.5 213,408.6 221,420.9 229,424.5 237,421.8 245,423.4 253,420.5 261,417.4 269,413.1 277,403.4 285,386.7 293,376.1 301,381.6 309,387.5 317,394.3 325,397.7 333,407.9 341,431.2 349,465.5 357,487.7 365,495.5 373,495.8 381,491.5 389,489.2 397,501.3 405,509.4 413,511.3 421,512.3 429,517.3 437,525.7 445,545 453,564 461,576.2 469,576.3 477,575.3 485,584.3 493,586.8 501,577.7 509,546.7 517,515.2 525,494.2 533,483.6 541,479.1 549,461 557,449.6 565,448.4 573,454.8 581,460.2 589,476.8 597,490.8 605,500.6 613,519.1 621,534.3 629,547.9 637,557.4 645,566.1 653,571.3 661,566.8 669,551.3 677,551.8 685,551.6 693,540.6 701,525.9 709,519.5 717,512.4 725,505.4 733,494.5 741,482.1 749,476.1 757,461.9 765,444.4 773,422.6 781,401.2 789,390.9 797,383.7 805,384.6 813,386.1 821,385.1 829,383 837,380.7 845,383.5 853,396.8 861,406.7 869,402 877,394.3 885,386.9 893,378.5 901,367.6 909,346.1 917,330.1 925,318.3 933,315.3 941,315.5 949,325.6 957,334 965,343.1 973,349.1 981,354.3 989,354.6 997,347.7 1005,336.8 1013,320.5 1021,311.3 1029,304.6 1037,299.6 1045,296.8 1053,293.8 1061,291.8 1069,276.3 1077,265.4 1085,257.5 1093,272.8 1101,276.7 1109,283.2 1117,292.7 1125,276.9 1133,265.2 1141,252.9 1149,244.1 1157,249 1165,267.1 1173,277.4 1181,295.1 1189,308 1197,316.6 1205,320.7 1213,320 1221,311.6 1229,299.7 1237,294.6 1245,286.1 1253,270.3 1261,255.1 1269,256.4 1277,252.1 1285,229.4 1293,204 1301,222.3 1309,261.8 1317,273.9 1325,296.5 1333,317.5 1341,330.9 1349,341.6 1357,339 1365,322 1373,300.4 1381,285.4 1389,288.5 1397,286.1 1405,281 1413,289 1421,294.9 1429,293.7 1437,306.5 1445,309.4 1453,308.5 1461,289.7 1469,261.3 1477,242.3" fill="none" stroke="#00ecec" stroke-width="1"/>
<polyline points="13,357.5 21,360.3 29,361.5 37,366.3 45,371.3 53,375.8 61,387.6 69,396.1 77,403.7 85,414.6 93,444 101,470.3 109,483.7 117,481.8 125,479.5 133,481.2 141,475.6 149,454 157,437.8 165,439.7 173,430.9 181,419.1 189,409.5 197,402.7 205,411.2 213,419.8 221,422.8 229,421.2 237,422.5 245,420.6 253,418.2 261,414.8 269,407.1 277,393.6 285,384 293,386.1 301,389.4 309,394 317,396.6 325,404.6 333,422.9 341,450.6 349,471.1 357,481 365,484.9 373,484.4 381,484.4 389,494.7 397,502.4 405,505.6 413,507.8 421,512.7 429,520.1 437,536 445,552.5 453,564.5 461,567.5 469,569 477,577.3 485,580.9 493,575.6 501,552.8 509,527.7 517,508.8 525,497.2 533,490.4 541,474 549,462.2 557,458.2 565,460.5 573,463.1 581,474.9 589,485.8 597,494.5 605,509.9 613,523.6 621,536.4 629,546.5 637,555.7 645,562.2 653,561.1 661,550.9 669,551.4 677,551.3 685,543.1 693,531.5 701,525.3 709,518.5 717,511.7 725,502 733,490.8 741,484.1 749,471.5 757,456 765,436.7 773,417.1 781,405.4 789,396.4 797,393.9 805,392.7 813,390.3 821,387.5 829,384.6 837,385.7 845,395.1 853,403 861,400.4 869,395 877,389.3 885,382.4 893,373.3 901,355.7 909,341.3 917,329.7 925,324.5 933,322.4 941,328.3 949,333.9 957,340.7 965,345.8 973,350.5 981,351.7 989,347.2 997,339.2 1005,326.4 1013,318 1021,311.3 1029,305.9 1037,302.2 1045,298.6 1053,295.9 1061,283.3 1069,273.3 1077,265.5 1085,274.9 1093,277.3 1101,282.1 1109,289.5 1117,278.4 1125,269.3 1133,259 1141,250.9 1149,252.9 1157,265.5 1165,273.6 1173,287.8 1181,299.3 1189,308 1197,313.2 1205,314.5 1213,309.6 1221,301.2 1229,297 1237,290 1245,277.2 1253,264.1 1261,262.8 1269,258 1277,239.5 1285,217.9 1293,228.2 1301,256.3 1309,266.8 1317,285.5 1325,304 1333,317.4 1341,328.8 1349,330.1 1357,319.5 1365,304 1373,291.9 1381,292.6 1389,289.7 1397,285 1405,290 1413,294.1 1421,293.4 1429,303.1 1437,306.1 1445,306.3 1453,292.7 1461,270.7 1469,254.1 1477,241.7" fill="none" stroke="#00ecec" stroke-width="1"/>
<polyline points="13,360.1 21,361.1 29,365 37,369.3 45,373.3 53,383.2 61,390.9 69,398 77,407.8 85,432.7 93,456.1 101,469.6 109,470.9 117,471.2 125,474.2 133,471.2 141,454.8 149,441.6 157,442.4 165,434.8 173,424.6 181,415.8 189,409.1 197,414.7 205,420.8 213,423 221,421.7 229,422.7 237,421.1 245,419.1 253,416.2 261,409.7 269,398.4 277,389.8 285,390.3 293,392.1 301,395.3 309,397.1 317,403.3 325,418.2 333,441.4 341,459.6 349,469.8 357,475.2 365,476.7 373,478.3 381,487.7 389,495.3 397,499.3 405,502.3 413,507.3 421,514.3 429,528.2 437,543 445,554.5 453,558.9 461,561.8 469,569.8 477,574.3 485,571.3 493,554 501,533.6 509,517.3 517,506.3 525,499.1 533,484.3 541,472.7 549,467.4 557,467.4 565,468.1 573,476.5 581,485 589,492 597,504.9 605,516.8 613,528.5 621,538.1 629,547.2 637,554.1 645,554.8 653,547.9 661,548.9 669,549.3 677,543.2 685,533.9 693,528.4 701,522.4 709,516.2 717,507.5 725,497.4 733,490.8 741,479.3 749,465.4 757,448.1 765,430.1 773,418.2 781,408.4 789,404 797,401 805,397.4 813,393.7 821,390.2 829,390 837,396.6 845,402.6 853,400.6 861,396.3 869,391.4 877,385.5 885,377.6 893,362.7 901,349.8 909,338.8 917,332.8 925,329.5 933,332.7 941,336.4 949,341.3 957,345.3 965,349.2 973,350.4 981,347.1 989,340.7 997,330.1 1005,322.7 1013,316.4 1021,311 1029,307.1 1037,303.2 1045,300.2 1053,289.2 1061,280 1069,272.4 1077,278.6 1085,279.7 1093,283.1 1101,288.8 1109,280.1 1117,272.4 1125,263.6 1133,256.2 1141,256.7 1149,266 1157,272.4 1165,284 1173,294 1181,302 1189,307.3 1197,309.6 1205,306.6 1213,300.5 1221,297.3 1229,291.7 1237,281 1245,269.8 1253,267.6 1261,262.8 1269,247 1277,228.3 1285,234.4 1293,255.7 1301,264.2 1309,279.7 1317,295.6 1325,308.1 1333,319 1341,322 1349,315.2 1357,303.6 1365,294 1373,294.1 1381,291.5 1389,287.4 1397,290.9 1405,294.1 1413,293.5 1421,301.2 1429,304 1437,304.6 1445,294.1 1453,276.1 1461,261.8 1469,250.3 1477,241.1" fill="none" stroke="#00ecec" stroke-width="1"/>
<polyline points="13,359.8 21,360.7 29,364 37,367.8 45,371.3 53,380 61,386.9 69,393.5 77,402.4 85,424.1 93,445 101,458.1 109,461.1 117,463 125,466.9 133,465.6 141,452.8 149,442.2 157,442.7 165,436.4 173,427.6 181,419.8 189,413.5 197,417.4 205,422.1 213,423.7 221,422.5 229,423.2 237,421.7 245,420 253,417.4 261,411.8 269,402.1 277,394.2 285,393.9 293,394.8 301,397 309,398.3 317,403.3 325,415.7 333,435.4 341,451.5 349,461.5 357,467.3 365,469.9 373,472.3 381,481.2 389,488.6 397,493 405,496.6 413,501.7 421,508.5 429,521 437,534.5 445,545.5 453,550.7 461,554.5 469,562.4 477,567.3 485,566 493,552.5 501,535.7 509,521.8 517,511.9 525,504.9 533,491.6 541,480.8 549,475 557,473.8 565,473.3 573,479.4 581,486 589,491.7 597,502.4 605,512.8 613,523.2 621,532.1 629,540.6 637,547.5 645,549.2 653,544.4 661,545.8 669,546.7 677,542 685,534.4 693,529.8 701,524.5 709,519 717,511.3 725,502.3 733,495.9 741,485.5 749,472.9 757,457.2 765,440.7 773,429 781,419.1 789,413.6 797,409.5 805,405.1 813,400.7 821,396.6 829,395.4 837,400 845,404.5 853,402.5 861,398.5 869,394.1 877,388.7 885,381.6 893,368.5 901,356.8 909,346.4 917,340.2 925,336.2 933,337.8 941,340 949,343.5 957,346.4 965,349.5 973,350.4 981,347.7 989,342.2 997,333.2 1005,326.5 1013,320.6 1021,315.4 1029,311.4 1037,307.5 1045,304.2 1053,294.4 1061,285.9 1069,278.6 1077,282.7 1085,283 1093,285.2 1101,289.6 1109,282.2 1117,275.5 1125,267.6 1133,260.8 1141,260.4 1149,267.6 1157,272.7 1165,282.3 1173,290.9 1181,298.1 1189,303.2 1197,305.7 1205,303.9 1213,299.2 1221,296.8 1229,292.2 1237,283.2 1245,273.5 1253,271.1 1261,266.5 1269,252.7 1277,236.2 1285,240 1293,256.8 1301,263.7 1309,276.6 1317,290.4 1325,301.7 1333,311.9 1341,315.5 1349,310.9 1357,302 1365,294.2 1373,294.3 1381,292.1 1389,288.6 1397,291.3 1405,293.9 1413,293.4 1421,299.9 1429,302.4 1437,303.1 1445,294.6 1453,279.6 1461,267.1 1469,256.6 1477,247.9" fill="none" stroke="#00ecec" stroke-width="1"/>
<polyline points="13,360.3 21,363.2 29,366.5 37,369.8 45,377.4 53,383.7 61,389.8 69,398 77,417.2 85,436.1 93,448.6 101,452.5 109,455.4 117,459.8 125,459.7 133,449.6 141,441 149,441.6 157,436.3 165,428.8 173,421.9 181,416.3 189,419.2 197,422.9 205,424.2 213,423.1 221,423.6 229,422.3 237,420.7 245,418.4 253,413.5 261,404.9 269,397.8 277,397 285,397.3 293,398.8 301,399.6 309,403.7 317,414.3 325,431.4 333,445.8 341,455.1 349,461 357,464.2 365,467.1 373,475.4 381,482.6 389,487.2 397,491.1 405,496.3 413,502.9 421,514.4 429,526.9 437,537.4 445,543 453,547.4 461,555.2 469,560.4 477,560.3 485,549.5 493,535.6 501,523.7 509,514.9 517,508.5 525,496.6 533,486.6 541,480.8 549,478.9 557,477.8 565,482.4 573,487.6 581,492.3 589,501.4 597,510.4 605,519.6 613,527.8 621,535.7 629,542.3 637,544.5 645,541.1 653,542.7 661,543.9 669,540.3 677,534.1 685,530.2 693,525.6 701,520.7 709,513.8 717,505.8 725,499.8 733,490.3 741,478.8 749,464.5 757,449.4 765,438.1 773,428.3 781,422.3 789,417.5 797,412.6 805,407.8 813,403.3 821,401.3 829,404.4 837,407.6 845,405.4 853,401.6 861,397.4 869,392.3 877,385.7 885,373.9 893,363.1 901,353.3 909,347 917,342.6 925,343 933,344.2 941,346.6 949,348.7 957,350.9 965,351.5 973,349 981,344.2 989,336.1 997,330 1005,324.4 1013,319.5 1021,315.4 1029,311.5 1037,308.1 1045,299.1 1053,291.2 1061,284.1 1069,286.9 1077,286.5 1085,287.9 1093,291.3 1101,284.7 1109,278.6 1117,271.4 1125,265 1133,264.1 1141,269.7 1149,273.8 1157,281.9 1165,289.3 1173,295.7 1181,300.4 1189,303 1197,301.8 1205,298.1 1213,296.2 1221,292.3 1229,284.6 1237,276.1 1245,273.6 1253,269.3 1261,257.1 1269,242.3 1277,244.7 1285,258.4 1293,264.1 1301,275.2 1309,287.2 1317,297.3 1325,306.7 1333,310.5 1341,307.3 1349,300.2 1357,293.8 1365,293.9 1373,292.1 1381,289.1 1389,291.3 1397,293.5 1405,293.2 1413,298.8 1421,301.1 1429,301.9 1437,294.8 1445,281.9 1453,270.8 1461,261.3 1469,253.2 1477,246.2" fill="none" stroke="#00ecec" stroke-width="1"/>
<polyline points="13,358.8 21,359.5 29,362 37,364.9 45,367.7 53,374.3 61,379.8 69,385.3 77,392.6 85,409 93,425.5 101,437.1 109,441.7 117,445.3 125,450.1 133,451.2 141,443.9 149,437.4 157,438.4 165,434.4 173,428.4 181,422.8 189,418 197,420.3 205,423.2 213,424.2 221,423.3 229,423.7 237,422.6 245,421.3 253,419.3 261,415.1 269,407.9 277,401.7 285,400.6 293,400.4 301,401.3 309,401.7 317,404.8 325,413.4 333,427.6 341,439.9 349,448.3 357,453.9 365,457.3 373,460.5 381,468.2 389,474.9 397,479.7 405,483.8 413,488.9 421,495.2 429,505.6 437,516.9 445,526.8 453,532.6 461,537.4 469,545 477,550.5 485,551.6 493,543.7 501,533 509,523.5 517,516.3 525,510.8 533,500.7 541,492 549,486.6 557,484.4 565,482.8 573,486 581,489.8 589,493.4 597,500.8 605,508.3 613,516.2 621,523.3 629,530.4 637,536.4 645,538.9 653,536.7 661,538.6 669,540.1 677,537.6 685,532.7 693,529.7 701,526 709,521.9 717,516.1 725,509.2 733,503.9 741,495.6 749,485.5 757,472.9 765,459.5 773,449 781,439.6 789,433.3 797,428.1 805,422.8 813,417.7 821,412.8 829,410 837,411.6 845,413.3 853,410.9 861,407.1 869,403 877,398.1 885,392 893,381.5 901,371.7 909,362.7 917,356.4 925,351.6 933,350.9 941,350.9 949,352.1 957,353.2 965,354.5 973,354.6 981,352.2 989,347.8 997,340.8 1005,335.1 1013,330 1021,325.2 1029,321.2 1037,317.3 1045,313.8 1053,305.8 1061,298.4 1069,291.8 1077,293.1 1085,292.1 1093,292.6 1101,294.9 1109,289 1117,283.5 1125,277 1133,271 1141,269.6 1149,273.5 1157,276.4 1165,282.8 1173,288.8 1181,294.1 1189,298.2 1197,300.6 1205,299.9 1213,297.1 1221,295.6 1229,292.5 1237,286.1 1245,278.9 1253,276.6 1261,272.7 1269,262.3 1277,249.4 1285,250.6 1293,261.2 1301,265.5 1309,274.5 1317,284.5 1325,293.1 1333,301.3 1341,305.1 1349,303.1 1357,297.7 1365,292.8 1373,293 1381,291.6 1389,289.1 1397,291 1405,292.8 1413,292.7 1421,297.3 1429,299.4 1437,300.3 1445,294.6 1453,284 1461,274.6 1469,266.4 1477,259.1" fill="none" stroke="#00c800" stroke-width="0.9"/>
<polyline points="37,303 69,410 133,556 317,343 381,538 405,470 508,607 573,425 668,598 797,358 877,458 941,290 1004,408 1100,232 1141,325 1157,220 1221,353 1309,112 1341,385 1395,247 1461,345 1493,192" fill="none" stroke="#fff" stroke-width="1" stroke-dasharray="2 3"/>
<path d="M13 345C14.3 345.3 18.3 346.4 21 347.1C23.7 347.8 26.3 348.5 29 349.1C31.7 349.8 34.3 350.3 37 351.2C39.7 352.1 42.3 353.4 45 354.7C47.7 356 50.3 357.5 53 359C55.7 360.4 58.3 361.7 61 363.2C63.7 364.8 66.3 365.8 69 368.1C71.7 370.3 74.3 373.8 77 376.6C79.7 379.4 82.3 382.3 85 385.1C87.7 388 90.3 390.8 93 393.7C95.7 396.6 98.3 399.5 101 402.6C103.7 405.7 106.3 409 109 412.2C111.7 415.4 114.3 418.9 117 421.8C119.7 424.7 122.3 426.4 125 429.5C127.7 432.7 130.3 437.4 133 440.6C135.7 443.7 138.3 446.1 141 448.5C143.7 450.9 146.3 453.1 149 455C151.7 456.9 154.3 457.1 157 460C159.7 462.9 162.3 468.3 165 472.2C167.7 476.1 170.3 480.9 173 483.4C175.7 486 178.3 487.3 181 487.4C183.7 487.6 186.3 485.9 189 484.4C191.7 482.8 194.3 480.7 197 478.2C199.7 475.7 202.3 472.7 205 469.1C207.7 465.5 210.3 461.2 213 456.5C215.7 451.8 218.3 445.9 221 441.1C223.7 436.2 226.3 431 229 427.2C231.7 423.4 234.3 420.8 237 418.3C239.7 415.9 242.3 414.3 245 412.6C247.7 411 250.3 409.4 253 408.3C255.7 407.3 258.3 406.5 261 406.4C263.7 406.4 266.3 407.1 269 408.1C271.7 409 274.3 411 277 412.3C279.7 413.7 282.3 415.2 285 416.1C287.7 417.1 290.3 417.5 293 417.8C295.7 418.2 298.3 418.6 301 418.4C303.7 418.2 306.3 417.8 309 416.8C311.7 415.9 314.3 414.4 317 412.8C319.7 411.1 322.3 409.2 325 407.1C327.7 405 330.3 402.5 333 400.3C335.7 398.2 338.3 396.1 341 394.3C343.7 392.5 346.3 390.8 349 389.7C351.7 388.7 354.3 387.9 357 388C359.7 388.2 362.3 389 365 390.8C367.7 392.6 370.3 395.4 373 398.6C375.7 401.9 378.3 405.9 381 410.2C383.7 414.5 386.3 419.3 389 424.4C391.7 429.5 394.3 435.2 397 440.8C399.7 446.4 402.3 452.5 405 458C407.7 463.5 410.3 468.9 413 473.6C415.7 478.2 418.3 482.5 421 486C423.7 489.6 426.3 492.5 429 494.9C431.7 497.4 434.3 499.2 437 500.8C439.7 502.4 442.3 503.5 445 504.6C447.7 505.7 450.3 506.4 453 507.3C455.7 508.2 458.3 508.9 461 510C463.7 511.1 466.3 512.3 469 514C471.7 515.7 474.3 517.6 477 520C479.7 522.4 482.3 525.2 485 528.2C487.7 531.2 490.3 534.5 493 537.8C495.7 541.1 498.3 544.6 501 548C503.7 551.5 506.3 555.3 509 558.6C511.7 562 514.3 565.3 517 568.1C519.7 570.8 522.3 573.5 525 575.1C527.7 576.7 530.3 577.6 533 577.6C535.7 577.6 538.3 576.6 541 575C543.7 573.5 546.3 571.2 549 568.1C551.7 565.1 554.3 561.3 557 556.8C559.7 552.3 562.3 547 565 541.2C567.7 535.4 570.3 528.5 573 522.1C575.7 515.7 578.3 508.7 581 502.7C583.7 496.7 586.3 490.9 589 485.9C591.7 480.8 594.3 476.4 597 472.4C599.7 468.4 602.3 464.8 605 462C607.7 459.3 610.3 457.1 613 455.9C615.7 454.7 618.3 454.4 621 454.9C623.7 455.5 626.3 457.2 629 459.4C631.7 461.6 634.3 464.6 637 467.9C639.7 471.1 642.3 474.8 645 478.8C647.7 482.8 650.3 487.2 653 491.8C655.7 496.4 658.3 501.3 661 506.2C663.7 511.1 666.3 516.3 669 521.2C671.7 526.1 674.3 531.1 677 535.4C679.7 539.8 682.3 544.1 685 547.5C687.7 550.9 690.3 553.5 693 555.8C695.7 558.2 698.3 560 701 561.4C703.7 562.7 706.3 563.5 709 563.8C711.7 564.1 714.3 563.9 717 563.1C719.7 562.3 722.3 560.7 725 558.8C727.7 557 730.3 554.3 733 551.9C735.7 549.5 738.3 547 741 544.4C743.7 541.8 746.3 539.3 749 536.5C751.7 533.6 754.3 530.5 757 527.2C759.7 524 762.3 520.4 765 517.1C767.7 513.9 770.3 510.9 773 507.8C775.7 504.7 778.3 501.9 781 498.7C783.7 495.6 786.3 492.5 789 488.8C791.7 485.1 794.3 480.9 797 476.7C799.7 472.5 802.3 467.8 805 463.3C807.7 458.9 810.3 454.4 813 449.8C815.7 445.1 818.3 440.3 821 435.4C823.7 430.6 826.3 425.4 829 420.7C831.7 416 834.3 411.4 837 407.3C839.7 403.2 842.3 399.3 845 396.1C847.7 392.8 850.3 390.2 853 388C855.7 385.8 858.3 384.1 861 382.8C863.7 381.5 866.3 380.5 869 380.1C871.7 379.8 874.3 380.1 877 380.6C879.7 381.1 882.3 382.1 885 383.1C887.7 384 890.3 385.2 893 386.3C895.7 387.3 898.3 388.4 901 389.3C903.7 390.3 906.3 391.1 909 391.8C911.7 392.6 914.3 393.4 917 393.6C919.7 393.8 922.3 393.8 925 393C927.7 392.1 930.3 390.6 933 388.6C935.7 386.6 938.3 383.9 941 381C943.7 378.1 946.3 374.7 949 371.2C951.7 367.7 954.3 363.9 957 359.9C959.7 356 962.3 351.7 965 347.7C967.7 343.7 970.3 339.4 973 336.1C975.7 332.7 978.3 329.5 981 327.4C983.7 325.3 986.3 324 989 323.2C991.7 322.4 994.3 322.4 997 322.8C999.7 323.3 1002.3 324.4 1005 325.8C1007.7 327.2 1010.3 329.2 1013 331.2C1015.7 333.1 1018.3 335.4 1021 337.4C1023.7 339.3 1026.3 341.4 1029 342.7C1031.7 344 1034.3 344.8 1037 345.1C1039.7 345.4 1042.3 345.3 1045 344.5C1047.7 343.7 1050.3 342.3 1053 340.5C1055.7 338.7 1058.3 336.2 1061 333.6C1063.7 331 1066.3 327.8 1069 324.8C1071.7 321.8 1074.3 318.5 1077 315.6C1079.7 312.7 1082.3 309.9 1085 307.2C1087.7 304.6 1090.3 302 1093 299.5C1095.7 297 1098.3 294.6 1101 292.3C1103.7 289.9 1106.3 287.5 1109 285.6C1111.7 283.7 1114.3 282.3 1117 280.8C1119.7 279.4 1122.3 278.1 1125 277C1127.7 275.8 1130.3 274.7 1133 274C1135.7 273.2 1138.3 272.8 1141 272.6C1143.7 272.3 1146.3 272.2 1149 272.3C1151.7 272.4 1154.3 273 1157 273.2C1159.7 273.4 1162.3 273.6 1165 273.4C1167.7 273.3 1170.3 272.6 1173 272C1175.7 271.4 1178.3 270.6 1181 269.8C1183.7 269 1186.3 268.1 1189 267.2C1191.7 266.2 1194.3 264.8 1197 264.2C1199.7 263.5 1202.3 263.2 1205 263.3C1207.7 263.4 1210.3 263.7 1213 264.9C1215.7 266.2 1218.3 268.4 1221 270.9C1223.7 273.4 1226.3 276.7 1229 279.9C1231.7 283.1 1234.3 286.7 1237 290.2C1239.7 293.6 1242.3 297.5 1245 300.6C1247.7 303.6 1250.3 306.3 1253 308.4C1255.7 310.5 1258.3 312.1 1261 312.9C1263.7 313.8 1266.3 314.1 1269 313.4C1271.7 312.8 1274.3 311.3 1277 309.2C1279.7 307.2 1282.3 304 1285 301.1C1287.7 298.2 1290.3 295 1293 291.8C1295.7 288.6 1298.3 285.3 1301 281.8C1303.7 278.2 1306.3 274.6 1309 270.7C1311.7 266.7 1314.3 261.9 1317 258C1319.7 254.1 1322.3 250 1325 247.3C1327.7 244.6 1330.3 242.9 1333 241.5C1335.7 240.1 1338.3 239.3 1341 238.9C1343.7 238.6 1346.3 238.5 1349 239.5C1351.7 240.5 1354.3 242 1357 245.1C1359.7 248.1 1362.3 252.7 1365 257.9C1367.7 263 1370.3 270 1373 275.9C1375.7 281.8 1378.3 288 1381 293.3C1383.7 298.6 1386.3 303.4 1389 307.7C1391.7 312 1394.3 316.1 1397 319.1C1399.7 322.1 1402.3 324.5 1405 325.7C1407.7 327 1410.3 327.5 1413 326.7C1415.7 325.9 1418.3 323.5 1421 320.8C1423.7 318.2 1426.3 314.2 1429 311C1431.7 307.8 1434.3 304.6 1437 301.7C1439.7 298.9 1442.3 296 1445 293.9C1447.7 291.7 1450.3 290 1453 288.9C1455.7 287.8 1458.3 287.4 1461 287.3C1463.7 287.1 1466.3 287.3 1469 287.9C1471.7 288.6 1474.3 290.2 1477 291.4C1479.7 292.6 1482.3 294.4 1485 295.2C1487.7 295.9 1491.7 295.9 1493 296.1" fill="none" stroke="#fff" stroke-width="2"/>
<path d="M13 331C14.3 331.4 18.3 332.5 21 333.2C23.7 334 26.3 334.8 29 335.5C31.7 336.2 34.3 337 37 337.8C39.7 338.5 42.3 338.7 45 340C47.7 341.3 50.3 343.8 53 345.8C55.7 347.7 58.3 349.6 61 351.5C63.7 353.4 66.3 355.4 69 357.3C71.7 359.2 74.3 361.1 77 363C79.7 365 82.3 366.9 85 368.8C87.7 370.7 90.3 372.1 93 374.6C95.7 377 98.3 380.2 101 383.3C103.7 386.4 106.3 389.8 109 393C111.7 396.3 114.3 398.9 117 402.8C119.7 406.6 122.3 411.9 125 416.1C127.7 420.2 130.3 424.8 133 427.6C135.7 430.3 138.3 431 141 432.5C143.7 434.1 146.3 435.2 149 436.9C151.7 438.5 154.3 440.6 157 442.5C159.7 444.4 162.3 446 165 448C167.7 450.1 170.3 452.4 173 454.9C175.7 457.4 178.3 460.4 181 463C183.7 465.5 186.3 468.3 189 470C191.7 471.7 194.3 472.8 197 473.2C199.7 473.7 202.3 473.3 205 472.5C207.7 471.7 210.3 470.3 213 468.6C215.7 466.8 218.3 464.6 221 462.1C223.7 459.7 226.3 456.6 229 453.6C231.7 450.5 234.3 447 237 443.8C239.7 440.6 242.3 437.3 245 434.4C247.7 431.5 250.3 428.8 253 426.4C255.7 424 258.3 421.8 261 420C263.7 418.1 266.3 416.5 269 415.3C271.7 414.1 274.3 413.2 277 412.7C279.7 412.1 282.3 411.8 285 411.8C287.7 411.7 290.3 412.1 293 412.4C295.7 412.8 298.3 413.5 301 413.8C303.7 414.1 306.3 414.4 309 414.3C311.7 414.1 314.3 413.5 317 412.9C319.7 412.2 322.3 411.3 325 410.5C327.7 409.7 330.3 409 333 408.2C335.7 407.3 338.3 406.5 341 405.5C343.7 404.5 346.3 403.3 349 402.2C351.7 401.1 354.3 399.8 357 398.9C359.7 397.9 362.3 396.8 365 396.5C367.7 396.3 370.3 396.5 373 397.4C375.7 398.4 378.3 400.1 381 402.1C383.7 404.1 386.3 406.7 389 409.4C391.7 412.2 394.3 415.2 397 418.5C399.7 421.7 402.3 425.2 405 428.9C407.7 432.6 410.3 436.4 413 440.6C415.7 444.7 418.3 449.3 421 453.7C423.7 458.1 426.3 462.9 429 467.1C431.7 471.3 434.3 475.5 437 479C439.7 482.5 442.3 485.4 445 488.1C447.7 490.8 450.3 492.9 453 495C455.7 497.1 458.3 498.9 461 500.9C463.7 502.8 466.3 504.7 469 506.8C471.7 508.8 474.3 511.1 477 513.3C479.7 515.4 482.3 517.7 485 519.7C487.7 521.8 490.3 523.6 493 525.5C495.7 527.5 498.3 529.2 501 531.5C503.7 533.7 506.3 536.2 509 538.9C511.7 541.6 514.3 544.6 517 547.5C519.7 550.3 522.3 553.5 525 556C527.7 558.6 530.3 561 533 562.6C535.7 564.2 538.3 565.3 541 565.7C543.7 566.1 546.3 565.7 549 565.1C551.7 564.5 554.3 563.3 557 561.9C559.7 560.4 562.3 558.8 565 556.5C567.7 554.2 570.3 551.3 573 547.9C575.7 544.4 578.3 540.2 581 535.7C583.7 531.2 586.3 526 589 521.1C591.7 516.1 594.3 510.7 597 506C599.7 501.2 602.3 496.5 605 492.5C607.7 488.5 610.3 485 613 481.9C615.7 478.9 618.3 476.4 621 474.2C623.7 472 626.3 470 629 468.7C631.7 467.4 634.3 466.5 637 466.5C639.7 466.5 642.3 467.3 645 468.7C647.7 470.1 650.3 472.3 653 474.9C655.7 477.5 658.3 480.9 661 484.3C663.7 487.7 666.3 491.6 669 495.4C671.7 499.3 674.3 503.4 677 507.3C679.7 511.3 682.3 515.2 685 519C687.7 522.7 690.3 526.3 693 529.8C695.7 533.3 698.3 536.9 701 539.9C703.7 542.9 706.3 545.7 709 548C711.7 550.2 714.3 552.1 717 553.4C719.7 554.7 722.3 555.5 725 555.9C727.7 556.3 730.3 556.3 733 555.8C735.7 555.3 738.3 554.2 741 552.9C743.7 551.7 746.3 550 749 548.2C751.7 546.4 754.3 544.5 757 542.3C759.7 540.1 762.3 537.6 765 535C767.7 532.4 770.3 529.5 773 526.6C775.7 523.6 778.3 520.4 781 517.1C783.7 513.9 786.3 510.7 789 507.3C791.7 503.9 794.3 500.4 797 496.8C799.7 493.1 802.3 489.3 805 485.4C807.7 481.5 810.3 477.5 813 473.5C815.7 469.4 818.3 465.3 821 461.1C823.7 456.9 826.3 452.5 829 448.3C831.7 444.1 834.3 439.9 837 435.9C839.7 431.8 842.3 427.8 845 423.9C847.7 420.1 850.3 416.3 853 412.7C855.7 409.2 858.3 405.7 861 402.7C863.7 399.7 866.3 397 869 394.9C871.7 392.7 874.3 391 877 389.7C879.7 388.4 882.3 387.7 885 387.1C887.7 386.4 890.3 386.2 893 385.9C895.7 385.7 898.3 385.6 901 385.6C903.7 385.7 906.3 385.9 909 386.2C911.7 386.5 914.3 386.9 917 387.2C919.7 387.6 922.3 388.1 925 388.3C927.7 388.4 930.3 388.6 933 388.2C935.7 387.8 938.3 387.1 941 385.9C943.7 384.7 946.3 383 949 381.1C951.7 379.1 954.3 376.7 957 374.3C959.7 371.9 962.3 369.2 965 366.5C967.7 363.9 970.3 361.2 973 358.6C975.7 355.9 978.3 353.2 981 350.6C983.7 348 986.3 345.4 989 343.1C991.7 340.8 994.3 338.5 997 336.8C999.7 335 1002.3 333.6 1005 332.6C1007.7 331.7 1010.3 331.2 1013 331C1015.7 330.8 1018.3 331.2 1021 331.6C1023.7 332 1026.3 332.7 1029 333.3C1031.7 333.9 1034.3 334.6 1037 335.1C1039.7 335.6 1042.3 336.2 1045 336.5C1047.7 336.8 1050.3 337 1053 337C1055.7 337 1058.3 336.9 1061 336.3C1063.7 335.8 1066.3 335 1069 333.8C1071.7 332.7 1074.3 331.2 1077 329.5C1079.7 327.8 1082.3 325.8 1085 323.6C1087.7 321.5 1090.3 319 1093 316.5C1095.7 314 1098.3 311.3 1101 308.7C1103.7 306.2 1106.3 303.5 1109 301.1C1111.7 298.7 1114.3 296.5 1117 294.4C1119.7 292.3 1122.3 290.3 1125 288.6C1127.7 286.8 1130.3 285.2 1133 283.9C1135.7 282.5 1138.3 281.6 1141 280.5C1143.7 279.4 1146.3 278.4 1149 277.5C1151.7 276.5 1154.3 275.7 1157 275C1159.7 274.3 1162.3 273.8 1165 273.3C1167.7 272.8 1170.3 272.5 1173 272.1C1175.7 271.7 1178.3 271.3 1181 270.9C1183.7 270.5 1186.3 270.1 1189 269.8C1191.7 269.4 1194.3 269.1 1197 268.8C1199.7 268.5 1202.3 268.1 1205 268C1207.7 267.9 1210.3 267.7 1213 268.1C1215.7 268.4 1218.3 269.2 1221 270.1C1223.7 270.9 1226.3 272.1 1229 273.5C1231.7 274.8 1234.3 276.6 1237 278.4C1239.7 280.1 1242.3 282.1 1245 284C1247.7 285.9 1250.3 287.9 1253 289.8C1255.7 291.7 1258.3 293.6 1261 295.2C1263.7 296.9 1266.3 298.5 1269 299.7C1271.7 301 1274.3 302.2 1277 302.7C1279.7 303.2 1282.3 303.2 1285 302.9C1287.7 302.6 1290.3 301.9 1293 300.8C1295.7 299.7 1298.3 298.3 1301 296.3C1303.7 294.4 1306.3 291.8 1309 289C1311.7 286.2 1314.3 282.7 1317 279.5C1319.7 276.4 1322.3 273 1325 270C1327.7 267.1 1330.3 264.2 1333 261.7C1335.7 259.2 1338.3 256.8 1341 255.1C1343.7 253.4 1346.3 252.2 1349 251.4C1351.7 250.7 1354.3 250.5 1357 250.7C1359.7 250.8 1362.3 251.3 1365 252.4C1367.7 253.6 1370.3 255.3 1373 257.8C1375.7 260.2 1378.3 263.6 1381 267.1C1383.7 270.6 1386.3 274.9 1389 278.6C1391.7 282.3 1394.3 286 1397 289.2C1399.7 292.5 1402.3 295.5 1405 298.3C1407.7 301.1 1410.3 303.8 1413 305.9C1415.7 308 1418.3 309.6 1421 310.8C1423.7 312 1426.3 312.7 1429 313.1C1431.7 313.5 1434.3 313.5 1437 313C1439.7 312.5 1442.3 311.4 1445 310C1447.7 308.6 1450.3 306.3 1453 304.6C1455.7 302.9 1458.3 301.1 1461 299.8C1463.7 298.5 1466.3 297.8 1469 297C1471.7 296.2 1474.3 295.6 1477 294.9C1479.7 294.3 1482.3 293.7 1485 293.1C1487.7 292.6 1491.7 291.8 1493 291.5" fill="none" stroke="#fff" stroke-width="2"/>
<path d="M13 265C14.3 267.6 18.3 275.4 21 280.5C23.7 285.7 26.3 291.9 29 296.1C31.7 300.2 34.3 302.6 37 305.5C39.7 308.4 42.3 311.6 45 313.3C47.7 315 50.3 314.8 53 315.6C55.7 316.3 58.3 316.9 61 317.9C63.7 318.8 66.3 319.9 69 321.2C71.7 322.5 74.3 324.1 77 325.6C79.7 327.1 82.3 328.5 85 330C87.7 331.5 90.3 332.9 93 334.4C95.7 335.9 98.3 337.5 101 338.8C103.7 340.1 106.3 341.3 109 342.4C111.7 343.4 114.3 344.2 117 345.2C119.7 346.1 122.3 346.6 125 347.9C127.7 349.3 130.3 350.2 133 353.4C135.7 356.6 138.3 361.2 141 366.9C143.7 372.7 146.3 380.3 149 387.9C151.7 395.5 154.3 404.7 157 412.5C159.7 420.2 162.3 428.4 165 434.3C167.7 440.1 170.3 444.2 173 447.4C175.7 450.7 178.3 452.7 181 453.9C183.7 455 186.3 453.9 189 454.4C191.7 454.9 194.3 456 197 456.8C199.7 457.6 202.3 458.4 205 459.2C207.7 460.1 210.3 461.5 213 461.9C215.7 462.3 218.3 462.2 221 461.7C223.7 461.3 226.3 460.2 229 459.1C231.7 458.1 234.3 456.8 237 455.3C239.7 453.9 242.3 452.2 245 450.4C247.7 448.5 250.3 446.3 253 444.3C255.7 442.2 258.3 440.1 261 438.1C263.7 436.2 266.3 434.4 269 432.6C271.7 430.7 274.3 428.9 277 427.1C279.7 425.3 282.3 423.3 285 421.7C287.7 420.1 290.3 418.8 293 417.7C295.7 416.6 298.3 415.8 301 415.2C303.7 414.5 306.3 414.2 309 413.7C311.7 413.2 314.3 412.8 317 412.3C319.7 411.8 322.3 411.3 325 410.8C327.7 410.3 330.3 409.8 333 409.4C335.7 408.9 338.3 408.6 341 408.1C343.7 407.6 346.3 407 349 406.4C351.7 405.8 354.3 404.9 357 404.4C359.7 403.9 362.3 403.5 365 403.4C367.7 403.2 370.3 403.2 373 403.4C375.7 403.7 378.3 404 381 404.7C383.7 405.3 386.3 406.2 389 407.3C391.7 408.4 394.3 409.8 397 411.5C399.7 413.1 402.3 415.1 405 417.2C407.7 419.3 410.3 421.6 413 424.2C415.7 426.8 418.3 429.6 421 432.6C423.7 435.5 426.3 438.8 429 442.1C431.7 445.5 434.3 449.1 437 452.6C439.7 456.2 442.3 459.9 445 463.4C447.7 466.8 450.3 470.3 453 473.4C455.7 476.6 458.3 479.6 461 482.4C463.7 485.3 466.3 488 469 490.7C471.7 493.4 474.3 496 477 498.6C479.7 501.1 482.3 503.6 485 506.2C487.7 508.7 490.3 511.3 493 513.8C495.7 516.3 498.3 518.7 501 521.1C503.7 523.4 506.3 525.8 509 528C511.7 530.2 514.3 532.4 517 534.5C519.7 536.6 522.3 538.7 525 540.6C527.7 542.6 530.3 544.4 533 546C535.7 547.7 538.3 549.4 541 550.7C543.7 552 546.3 553.3 549 554.1C551.7 554.9 554.3 555.4 557 555.5C559.7 555.6 562.3 555.4 565 554.8C567.7 554.1 570.3 553 573 551.6C575.7 550.2 578.3 548.4 581 546.3C583.7 544.2 586.3 541.8 589 539.1C591.7 536.4 594.3 533.3 597 530.1C599.7 526.8 602.3 523.1 605 519.6C607.7 516 610.3 512.3 613 508.9C615.7 505.5 618.3 502.2 621 499.2C623.7 496.2 626.3 493.3 629 490.9C631.7 488.5 634.3 486.4 637 484.7C639.7 483 642.3 481.6 645 480.6C647.7 479.7 650.3 479.1 653 479.1C655.7 479 658.3 479.5 661 480.3C663.7 481.1 666.3 482.4 669 484.1C671.7 485.8 674.3 487.9 677 490.3C679.7 492.7 682.3 495.6 685 498.5C687.7 501.4 690.3 504.5 693 507.6C695.7 510.6 698.3 513.7 701 516.7C703.7 519.7 706.3 522.7 709 525.5C711.7 528.3 714.3 531 717 533.4C719.7 535.8 722.3 537.9 725 539.8C727.7 541.6 730.3 543.4 733 544.7C735.7 546 738.3 546.9 741 547.5C743.7 548.1 746.3 548.3 749 548.1C751.7 548 754.3 547.4 757 546.5C759.7 545.7 762.3 544.4 765 542.9C767.7 541.5 770.3 539.9 773 538.1C775.7 536.3 778.3 534.3 781 532C783.7 529.8 786.3 527.2 789 524.4C791.7 521.6 794.3 518.4 797 515.2C799.7 512 802.3 508.6 805 505.1C807.7 501.6 810.3 498 813 494.4C815.7 490.7 818.3 486.9 821 483.1C823.7 479.3 826.3 475.4 829 471.6C831.7 467.8 834.3 463.9 837 460.1C839.7 456.4 842.3 452.7 845 449C847.7 445.3 850.3 441.7 853 438C855.7 434.4 858.3 430.6 861 427C863.7 423.5 866.3 420 869 417C871.7 413.9 874.3 411 877 408.5C879.7 406.1 882.3 404 885 402C887.7 400.1 890.3 398.4 893 397C895.7 395.5 898.3 394.3 901 393.2C903.7 392.2 906.3 391.3 909 390.6C911.7 389.8 914.3 389.2 917 388.6C919.7 388 922.3 387.5 925 387C927.7 386.5 930.3 386 933 385.4C935.7 384.9 938.3 384.5 941 383.9C943.7 383.4 946.3 382.8 949 382.1C951.7 381.3 954.3 380.5 957 379.4C959.7 378.2 962.3 376.8 965 375.3C967.7 373.7 970.3 371.9 973 370.1C975.7 368.3 978.3 366.4 981 364.5C983.7 362.6 986.3 360.6 989 358.7C991.7 356.8 994.3 354.9 997 353.1C999.7 351.2 1002.3 349.4 1005 347.8C1007.7 346.2 1010.3 344.7 1013 343.4C1015.7 342 1018.3 340.9 1021 339.9C1023.7 338.9 1026.3 338.1 1029 337.4C1031.7 336.7 1034.3 336 1037 335.5C1039.7 335.1 1042.3 334.8 1045 334.5C1047.7 334.2 1050.3 334.2 1053 334C1055.7 333.8 1058.3 333.6 1061 333.3C1063.7 333 1066.3 332.7 1069 332.3C1071.7 331.8 1074.3 331.3 1077 330.7C1079.7 330 1082.3 329.3 1085 328.4C1087.7 327.4 1090.3 326.3 1093 324.9C1095.7 323.5 1098.3 321.9 1101 320.1C1103.7 318.4 1106.3 316.3 1109 314.4C1111.7 312.4 1114.3 310.5 1117 308.6C1119.7 306.6 1122.3 304.7 1125 302.9C1127.7 301 1130.3 299.1 1133 297.4C1135.7 295.7 1138.3 294.3 1141 292.7C1143.7 291.2 1146.3 289.6 1149 288.1C1151.7 286.6 1154.3 285.2 1157 283.7C1159.7 282.3 1162.3 280.8 1165 279.5C1167.7 278.1 1170.3 276.8 1173 275.8C1175.7 274.7 1178.3 273.8 1181 273.2C1183.7 272.5 1186.3 272.3 1189 272C1191.7 271.7 1194.3 271.5 1197 271.4C1199.7 271.2 1202.3 271.1 1205 271.1C1207.7 271 1210.3 271.1 1213 271.2C1215.7 271.2 1218.3 271.2 1221 271.4C1223.7 271.6 1226.3 271.8 1229 272.2C1231.7 272.7 1234.3 273.4 1237 274.2C1239.7 275 1242.3 276 1245 277.1C1247.7 278.3 1250.3 279.7 1253 281.1C1255.7 282.5 1258.3 284.1 1261 285.5C1263.7 286.8 1266.3 288.2 1269 289.4C1271.7 290.5 1274.3 291.4 1277 292.2C1279.7 293 1282.3 293.6 1285 294.1C1287.7 294.5 1290.3 294.8 1293 294.9C1295.7 294.9 1298.3 294.9 1301 294.5C1303.7 294.1 1306.3 293.6 1309 292.6C1311.7 291.6 1314.3 290 1317 288.5C1319.7 286.9 1322.3 285 1325 283.3C1327.7 281.6 1330.3 279.9 1333 278.1C1335.7 276.3 1338.3 274.4 1341 272.6C1343.7 270.8 1346.3 269 1349 267.5C1351.7 266 1354.3 264.8 1357 263.8C1359.7 262.9 1362.3 262.2 1365 261.9C1367.7 261.6 1370.3 261.6 1373 261.9C1375.7 262.1 1378.3 262.6 1381 263.4C1383.7 264.1 1386.3 265.1 1389 266.6C1391.7 268.1 1394.3 270 1397 272.1C1399.7 274.2 1402.3 276.8 1405 279.1C1407.7 281.4 1410.3 283.8 1413 286C1415.7 288.2 1418.3 290.2 1421 292.1C1423.7 294 1426.3 295.9 1429 297.5C1431.7 299.1 1434.3 300.6 1437 301.7C1439.7 302.9 1442.3 303.8 1445 304.4C1447.7 305 1450.3 305.1 1453 305.2C1455.7 305.3 1458.3 305.2 1461 305C1463.7 304.9 1466.3 304.6 1469 304.3C1471.7 303.9 1474.3 303.6 1477 303C1479.7 302.5 1482.3 301.7 1485 300.8C1487.7 300 1491.7 298.3 1493 297.8" fill="none" stroke="#fff" stroke-width="2"/>
<line x1="668" y1="600" x2="1881" y2="228" stroke="#fff" stroke-width="2.6"/>
<line x1="1381" y1="381" x2="1881" y2="188.5" stroke="#fff" stroke-width="2.6"/>
<line x1="1309" y1="112" x2="1790" y2="630" stroke="#fff" stroke-width="2.6"/>
<path d="M163.5 481.7h4V490.9h-4zM251.5 418.6h4V444.9h-4zM387.5 500.4h4V521.6h-4zM515.5 580.5h4V603.4h-4zM683.5 522.6h4V548.8h-4zM699.5 563.5h4V574.4h-4zM715.5 493.6h4V518.2h-4zM787.5 401.5h4V409.1h-4zM843.5 377.7h4V388.6h-4zM1011.5 353.1h4V357.2h-4zM1227.5 322.5h4V335.1h-4zM1267.5 244.1h4V268.7h-4zM1275.5 223.6h4V238h-4zM1291.5 249.2h4V268.7h-4zM1299.5 233.9h4V253.3h-4zM1307.5 153.8h4V183.5h-4zM1419.5 268h4V280.6h-4zM1483.5 210h4V251.6h-4zM19.5 353.8h4V376.7h-4zM179.5 389.6h4V405.7h-4zM195.5 432.2h4V444.9h-4zM203.5 404.9h4V443.2h-4zM299.5 384.5h4V390.3h-4zM307.5 353.8h4V371.6h-4zM531.5 485.1h4V519.9h-4zM539.5 452.7h4V467h-4zM563.5 468h4V472.1h-4zM571.5 425.4h4V429.5h-4zM931.5 303.7h4V319.7h-4zM955.5 307.1h4V311.2h-4zM1035.5 288.4h4V297.6h-4zM1067.5 288.4h4V294.2h-4zM1091.5 245.7h4V265.2h-4zM1139.5 303.7h4V311.2h-4zM1147.5 245.7h4V270.3h-4zM1347.5 324.2h4V359h-4zM1379.5 348.1h4V364.1h-4zM1467.5 322.5h4V331.7h-4z" fill="#000" stroke="#10e010" stroke-width="1"/>
<path d="M13.5 359.8V379.2M21.5 351.3V379.2M29.5 336V358.7M37.5 324.3V348.5M45.5 337.7V385.7M53.5 346.2V378.9M61.5 354.7V367.2M69.5 358.1V406.2M77.5 376.9V396.2M85.5 373.5V391.1M93.5 383.7V425.2M101.5 390.5V423.5M109.5 404.2V428.6M117.5 411V449.1M125.5 417.8V552.8M133.5 463.8V557.9M141.5 491.4V549.3M149.5 474V510.4M157.5 450.5V495.1M165.5 479.2V498.2M173.5 457V486.6M181.5 382.3V461M189.5 387.1V438.8M197.5 421.2V447.4M205.5 402.4V445.7M213.5 382V426.9M221.5 372.1V409.9M229.5 380.3V397.9M237.5 390.5V438.8M245.5 402.4V447.4M253.5 416.1V447.4M261.5 414.4V426.9M269.5 416.4V433.4M277.5 395.9V431.7M285.5 409.3V420.1M293.5 402.4V418.4M301.5 382V411.6M309.5 346.5V403M317.5 344.8V387.7M325.5 368.4V394.5M333.5 373.5V401.3M341.5 378.9V426.6M349.5 380.6V406.4M357.5 399V430.3M365.5 411V479.7M373.5 438.2V536M381.5 467.2V539.1M389.5 497.9V524.1M397.5 494.5V507M405.5 465.8V503.6M413.5 482.6V505M421.5 487.7V527.5M429.5 497.9V537.4M437.5 503.3V518.7M445.5 506.4V522.4M453.5 511.5V535.7M461.5 518.4V544.5M469.5 523.5V585.4M477.5 532V604.2M485.5 566.1V602.5M493.5 566.4V593.7M501.5 571.2V597.1M509.5 572.9V609M517.5 578V605.9M525.5 557.6V595.4M533.5 472.6V582M541.5 450.2V553.1M549.5 431.7V510.4M557.5 460.4V483.2M565.5 443.7V488M573.5 422.9V476.3M581.5 424.6V461M589.5 441.7V450.8M597.5 440.2V474.3M605.5 451.9V472.9M613.5 460.4V512.1M621.5 475.7V549.3M629.5 496.2V552.8M637.5 509.8V558.2M645.5 533.7V593.7M653.5 542.2V576.9M661.5 552.5V590.3M669.5 564.4V597.1M677.5 571.2V583.7M685.5 520.1V582M693.5 511.8V575.2M701.5 550.8V576.9M709.5 549.1V558.2M717.5 491.1V558.2M725.5 494.5V539.4M733.5 498.2V522.4M741.5 496.2V517.3M749.5 489.4V510.4M757.5 470.6V500.2M765.5 455.3V488.3M773.5 443.7V476.3M781.5 430V471.2M789.5 389.1V452.5M797.5 358.4V432M805.5 356.4V406.4M813.5 365.2V391.1M821.5 356.7V383.6M829.5 368.6V394.2M837.5 376.2V391.1M845.5 375.2V391.1M853.5 370.4V385.3M861.5 365.2V384.3M869.5 376.9V407.9M877.5 382V457.3M885.5 399V442M893.5 365.2V413.3M901.5 376.9V403M909.5 341.4V392.8M917.5 322.6V382.6M925.5 343.8V373.4M933.5 301.2V361.5M941.5 291.3V342.7M949.5 292.7V320.5M957.5 299.8V320.2M965.5 298.1V327.4M973.5 313.1V347.8M981.5 326.8V352.9M989.5 335.3V363.2M997.5 348.9V371.4M1005.5 359.2V410.6M1013.5 350.6V359.7M1021.5 308.3V358M1029.5 313.1V352.9M1037.5 277.6V334.2M1045.5 275.9V317.1M1053.5 289.3V305.2M1061.5 287.6V300.1M1069.5 277.6V296.7M1077.5 285.9V296.7M1085.5 285.9V293.3M1093.5 243.2V289.9M1101.5 228.2V277.9M1109.5 239.8V262.6M1117.5 239.8V305.2M1125.5 262V286.4M1133.5 275.6V298.4M1141.5 282.4V313.7M1149.5 231.6V291.6M1157.5 219.7V284.7M1165.5 226.2V264.3M1173.5 224.5V252.4M1181.5 243.2V260.9M1189.5 255.2V305.2M1197.5 270.5V300.1M1205.5 291V332.5M1213.5 297.8V335.9M1221.5 311.4V352.6M1229.5 320V349.2M1237.5 316.5V330.8M1245.5 292.7V325.7M1253.5 274V313.8M1261.5 282.5V332.2M1269.5 241.6V300.1M1277.5 221.1V286.5M1285.5 209.5V262.6M1293.5 246.7V271.2M1301.5 226.6V255.8M1309.5 114.1V255.8M1317.5 141.3V221.7M1325.5 166.6V260.9M1333.5 207.5V352.7M1341.5 260.3V379.9M1349.5 321.7V361.5M1357.5 311.5V361.5M1365.5 320V368M1373.5 335.3V364.9M1381.5 331.9V378.2M1389.5 285.9V342.7M1397.5 243.6V308.7M1405.5 253.5V295M1413.5 281.1V296.7M1421.5 265.5V295M1429.5 250.4V288.2M1437.5 277.4V306.9M1445.5 289.3V308.7M1453.5 289.3V300.1M1461.5 292.7V349.3M1469.5 302.9V349.3M1477.5 304.7V317.2M1485.5 195.9V313.8M1493.5 192.5V283.1" stroke="#fff" stroke-width="1" fill="none"/>
<path d="M11 361.3h5V377.7h-5zM75 378.4h5V394.7h-5zM91 402.2h5V423.7h-5zM115 429.5h5V447.6h-5zM123 490.9h5V532.8h-5zM131 533.5h5V549.8h-5zM187 388.6h5V406.7h-5zM227 381.8h5V389.6h-5zM243 434.6h5V445.9h-5zM323 381.8h5V393h-5zM363 455.1h5V478.2h-5zM371 507.9h5V534.5h-5zM419 511.3h5V526h-5zM443 507.9h5V520.9h-5zM467 565.9h5V583.9h-5zM475 594.9h5V602.7h-5zM499 572.7h5V580.5h-5zM555 461.9h5V468h-5zM579 426.1h5V435.6h-5zM587 443.2h5V449.3h-5zM595 460.2h5V468h-5zM611 490.9h5V510.6h-5zM635 533.5h5V556.7h-5zM651 564.2h5V575.4h-5zM691 519.9h5V543h-5zM691 565.9h5V573.7h-5zM723 496h5V503.8h-5zM763 456.8h5V464.6h-5zM803 357.9h5V372.6h-5zM827 381.1h5V386.9h-5zM875 418.6h5V423.7h-5zM947 294.2h5V308.8h-5zM963 306.1h5V325.9h-5zM1003 360.7h5V368.5h-5zM1115 272h5V303.7h-5zM1163 227.7h5V238.9h-5zM1171 226h5V239.6h-5zM1187 277.1h5V303.7h-5zM1203 314.6h5V331h-5zM1211 326.6h5V334.4h-5zM1251 275.5h5V286.7h-5zM1283 224.4h5V235.6h-5zM1315 152.8h5V159.6h-5zM1323 168.1h5V189.6h-5zM1323 227.8h5V259.4h-5zM1331 306.2h5V341.2h-5zM1355 328.3h5V339.5h-5zM1371 357.3h5V363.4h-5zM1403 255h5V285h-5zM1459 321.5h5V332.7h-5z" fill="#00e000" shape-rendering="crispEdges"/>
<path d="M43 339.7h5V370.4h-5zM51 348.2h5V368.6h-5zM59 356.7h5V365.2h-5zM67 360.1h5V380.6h-5zM83 375.5h5V389.1h-5zM91 385.7h5V402.7h-5zM99 392.5h5V421.5h-5zM107 406.2h5V426.6h-5zM115 413h5V430h-5zM123 419.8h5V491.4h-5zM131 465.8h5V534h-5zM139 494.8h5V523.8h-5zM195 423.2h5V445.4h-5zM235 392.5h5V436.8h-5zM243 404.4h5V430h-5zM267 423.2h5V426.6h-5zM323 370.4h5V382.3h-5zM331 375.5h5V399.3h-5zM339 387.4h5V407.9h-5zM347 397.6h5V404.4h-5zM355 401h5V428.3h-5zM363 413h5V455.6h-5zM371 440.2h5V508.4h-5zM379 469.2h5V532.3h-5zM419 489.7h5V511.8h-5zM427 499.9h5V525.5h-5zM435 510.1h5V515.3h-5zM451 513.5h5V527.2h-5zM459 520.4h5V542.5h-5zM467 525.5h5V566.4h-5zM475 534h5V595.4h-5zM483 568.1h5V600.5h-5zM507 574.9h5V602.2h-5zM595 447.1h5V460.7h-5zM603 453.9h5V470.9h-5zM611 462.4h5V491.4h-5zM619 477.7h5V518.7h-5zM627 498.2h5V520.4h-5zM635 511.8h5V534h-5zM643 535.7h5V564.7h-5zM651 544.2h5V564.7h-5zM659 554.5h5V576.6h-5zM667 566.4h5V583.4h-5zM675 573.2h5V581.7h-5zM827 375.5h5V382.3h-5zM835 378.2h5V389.1h-5zM867 378.9h5V389.1h-5zM875 384h5V419.8h-5zM883 401h5V426.6h-5zM971 315.1h5V345.8h-5zM979 328.8h5V350.9h-5zM987 337.3h5V361.2h-5zM995 350.9h5V361.2h-5zM1115 241.8h5V272.5h-5zM1123 264h5V284.4h-5zM1131 277.6h5V296.4h-5zM1139 284.4h5V311.7h-5zM1179 245.2h5V258.9h-5zM1187 257.2h5V277.6h-5zM1195 272.5h5V298.1h-5zM1203 293h5V315.1h-5zM1211 299.8h5V327.1h-5zM1219 313.4h5V333.9h-5zM1323 189.1h5V223.1h-5zM1331 209.5h5V306.7h-5zM1339 262.3h5V298.1h-5zM1355 313.5h5V359.5h-5zM1363 322h5V357.8h-5zM1371 337.3h5V357.8h-5zM1411 287.9h5V294.7h-5zM1435 279.4h5V304.9h-5zM1443 291.3h5V306.7h-5zM1459 294.7h5V311.8h-5zM1467 304.9h5V315.2h-5z" fill="#0a7d0a" shape-rendering="crispEdges"/>
<path d="M12 361.8h3V377.2h-3zM76 378.9h3V394.2h-3zM92 402.7h3V423.2h-3zM116 430h3V447.1h-3zM124 491.4h3V532.3h-3zM132 534h3V549.3h-3zM188 389.1h3V406.2h-3zM228 382.3h3V389.1h-3zM244 435.1h3V445.4h-3zM324 382.3h3V392.5h-3zM364 455.6h3V477.7h-3zM372 508.4h3V534h-3zM420 511.8h3V525.5h-3zM444 508.4h3V520.4h-3zM468 566.4h3V583.4h-3zM476 595.4h3V602.2h-3zM500 573.2h3V580h-3zM556 462.4h3V467.5h-3zM580 426.6h3V435.1h-3zM588 443.7h3V448.8h-3zM596 460.7h3V467.5h-3zM612 491.4h3V510.1h-3zM636 534h3V556.2h-3zM652 564.7h3V574.9h-3zM692 520.4h3V542.5h-3zM692 566.4h3V573.2h-3zM724 496.5h3V503.3h-3zM764 457.3h3V464.1h-3zM804 358.4h3V372.1h-3zM828 381.6h3V386.4h-3zM876 419.1h3V423.2h-3zM948 294.7h3V308.3h-3zM964 306.6h3V325.4h-3zM1004 361.2h3V368h-3zM1116 272.5h3V303.2h-3zM1164 228.2h3V238.4h-3zM1172 226.5h3V239.1h-3zM1188 277.6h3V303.2h-3zM1204 315.1h3V330.5h-3zM1212 327.1h3V333.9h-3zM1252 276h3V286.2h-3zM1284 224.9h3V235.1h-3zM1316 153.3h3V159.1h-3zM1324 168.6h3V189.1h-3zM1324 228.3h3V258.9h-3zM1332 306.7h3V340.7h-3zM1356 328.8h3V339h-3zM1372 357.8h3V362.9h-3zM1404 255.5h3V284.5h-3zM1460 322h3V332.2h-3z" fill="#ffffff" shape-rendering="crispEdges"/>
<path d="M27 338h5V356.7h-5zM35 336.3h5V346.5h-5zM147 476h5V508.4h-5zM155 472.6h5V493.1h-5zM171 459h5V484.6h-5zM179 406.2h5V459h-5zM187 406.2h5V436.8h-5zM203 423.2h5V428.3h-5zM211 384h5V424.9h-5zM219 380.6h5V407.9h-5zM227 389.1h5V395.9h-5zM259 416.4h5V424.9h-5zM275 414.7h5V421.5h-5zM283 411.3h5V418.1h-5zM291 404.4h5V416.4h-5zM299 389.1h5V409.6h-5zM307 361.8h5V401h-5zM315 355h5V385.7h-5zM395 496.5h5V505h-5zM403 482.9h5V501.6h-5zM411 484.6h5V493.1h-5zM491 576.6h5V580h-5zM499 580h5V586.9h-5zM523 559.6h5V590.3h-5zM531 520.4h5V580h-5zM539 467.5h5V551.1h-5zM547 452.2h5V508.4h-5zM555 465.8h5V481.2h-5zM571 430h5V474.3h-5zM579 435.1h5V459h-5zM683 557.9h5V580h-5zM691 549.3h5V563h-5zM699 552.8h5V557.9h-5zM707 551.1h5V556.2h-5zM715 518.7h5V556.2h-5zM723 501.6h5V537.4h-5zM731 506.7h5V520.4h-5zM739 498.2h5V515.3h-5zM747 491.4h5V508.4h-5zM755 472.6h5V498.2h-5zM763 462.4h5V486.3h-5zM771 464.1h5V474.3h-5zM779 433.4h5V469.2h-5zM787 409.6h5V450.5h-5zM795 378.9h5V430h-5zM803 372.1h5V404.4h-5zM811 370.4h5V389.1h-5zM819 369.3h5V381.6h-5zM851 378.9h5V383.3h-5zM859 376.1h5V382.3h-5zM891 392.5h5V411.3h-5zM899 378.9h5V401h-5zM907 372.1h5V390.8h-5zM915 361.8h5V380.6h-5zM923 345.8h5V371.4h-5zM931 320.2h5V359.5h-5zM939 298.1h5V340.7h-5zM947 308.3h5V318.5h-5zM1019 333.9h5V356h-5zM1027 315.1h5V350.9h-5zM1035 298.1h5V332.2h-5zM1043 293h5V315.1h-5zM1051 291.3h5V303.2h-5zM1059 289.6h5V298.1h-5zM1075 287.9h5V294.7h-5zM1083 287.9h5V291.3h-5zM1091 265.7h5V287.9h-5zM1099 243.5h5V275.9h-5zM1107 241.8h5V260.6h-5zM1147 270.8h5V289.6h-5zM1155 241.8h5V282.7h-5zM1163 238.4h5V262.3h-5zM1171 239.1h5V250.4h-5zM1235 318.5h5V328.8h-5zM1243 294.7h5V323.7h-5zM1251 286.2h5V311.8h-5zM1259 284.5h5V289.6h-5zM1267 269.2h5V298.1h-5zM1275 238.5h5V284.5h-5zM1283 235.1h5V260.6h-5zM1307 184h5V253.8h-5zM1315 158.4h5V219.7h-5zM1379 333.9h5V347.6h-5zM1387 287.9h5V340.7h-5zM1395 257.2h5V306.7h-5zM1403 284.5h5V293h-5zM1419 281.1h5V293h-5zM1427 270.9h5V286.2h-5zM1451 291.3h5V298.1h-5zM1475 306.7h5V315.2h-5zM1483 252.1h5V311.8h-5zM1491 204.4h5V281.1h-5z" fill="#dc143c" shape-rendering="crispEdges"/>
<polyline points="1345,300 1342,340 1341,384" fill="none" stroke="#1414ff" stroke-width="2"/>
<path d="M1349 296l6 -8v16z M1352 312l6 -7v14z" fill="#ff3030"/>
<path d="M13 295h0M21 302.6h0M29 310.2h0M37 317.8h0M45 325.4h0M53 332.8h0M61 339.6h0M69 346.4h0M77 353.2h0M85 359.9h0M93 366.6h0M101 373.3h0M109 380h0M117 389.8h0M125 399.6h0M133 410.1h0M141 422.3h0M149 434.2h0M157 443.5h0M165 452.8h0M173 458.5h0M181 463.7h0M189 466.9h0M197 469.5h0M205 472h0M213 470.8h0M221 469.5h0M229 468.3h0M237 466.6h0M245 464.8h0M253 462.9h0M261 461.1h0M269 459.2h0M277 457.2h0M285 455.1h0M293 453.1h0M301 451h0M309 448.6h0M317 445.8h0M325 443.1h0M333 440.5h0M341 438.7h0M349 436.8h0M357 435h0M365 436.8h0M373 438.6h0M381 444.3h0M389 451.4h0M397 458.2h0M405 465h0M413 471.8h0M421 477.7h0M429 482.4h0M437 487h0M445 491.7h0M453 497.2h0M461 503.7h0M469 510.2h0M477 516.8h0M485 524.2h0M493 531.6h0M501 539h0M509 546.3h0M517 553.5h0M525 560.1h0M533 564.3h0M541 567.7h0M549 565.1h0M557 562.6h0M565 559.2h0M573 554.5h0M581 549.8h0M589 544.7h0M597 539.5h0M605 534.3h0M613 530.5h0M621 529.2h0M629 527.8h0M637 526.5h0M645 529.1h0M653 534h0M661 538.9h0M669 543.7h0M677 548.3h0M685 553h0M693 557.3h0M701 560.1h0M709 562.9h0M717 565.7h0M725 564.7h0M733 563.2h0M741 561.7h0M749 559h0M757 555h0M765 551h0M773 545.9h0M781 537.5h0M789 529.1h0M797 520.5h0M805 511.8h0M813 503.1h0M821 491.8h0M829 480.8h0M837 471.9h0M845 463h0M853 455h0M861 447h0M869 440h0M877 436h0M885 432h0M893 428h0M901 424h0M909 420.1h0M917 416.3h0M925 412.4h0M933 407.2h0M941 401.1h0M949 393.8h0M957 385.3h0M965 378.6h0M973 374.7h0M981 370.9h0M989 367h0M997 366.1h0M1005 365.1h0M1013 364.2h0M1021 363.2h0M1029 360.5h0M1037 357.3h0M1045 354h0M1053 349.3h0M1061 344.5h0M1069 339.7h0M1077 334.5h0M1085 329.2h0M1093 324h0M1101 318.5h0M1109 312.9h0M1117 307.4h0M1125 303.8h0M1133 300.9h0M1141 298h0M1149 296.2h0M1157 294.4h0M1165 292.3h0M1173 289.4h0M1181 286.5h0M1189 285h0M1197 285h0M1205 285h0M1213 287.5h0M1221 290.5h0M1229 293.2h0M1237 295h0M1245 296.9h0M1253 298.3h0M1261 299.1h0M1269 299.9h0M1277 300.7h0M1285 299.1h0M1293 296.1h0M1301 293.1h0M1309 290.1h0M1317 287.8h0M1325 285.9h0M1333 284h0M1341 285.5h0M1349 287h0M1357 292h0M1365 296.9h0M1373 302.1h0M1381 307.6h0M1389 311.5h0M1397 312.7h0M1405 314h0M1413 315.2h0M1421 316.1h0M1429 316.3h0M1437 316.5h0M1445 316.7h0M1453 316.9h0M1461 317.2h0M1469 317.4h0M1477 317.6h0M1485 317.8h0M1493 318h0" fill="none" stroke="#ffa500" stroke-width="9" stroke-linecap="round"/>
<path d="M16.9 296.6L18.7 297.3M14.6 298.9L15.4 300.7M11.4 298.9L10.7 300.7M9.1 296.6L7.3 297.4M9.1 293.4L7.3 292.7M11.4 291.1L10.6 289.3M14.6 291.1L15.3 289.3M16.9 293.4L18.7 292.6M24.9 304.2L26.7 304.9M22.6 306.5L23.4 308.3M19.4 306.5L18.7 308.3M17.1 304.2L15.3 305M17.1 301L15.3 300.3M19.4 298.7L18.6 296.9M22.6 298.7L23.3 296.8M24.9 300.9L26.7 300.2M32.9 311.8L34.7 312.5M30.6 314L31.4 315.9M27.4 314.1L26.7 315.9M25.1 311.8L23.3 312.6M25.1 308.6L23.3 307.9M27.4 306.3L26.6 304.5M30.6 306.3L31.3 304.4M32.9 308.5L34.7 307.8M40.9 319.3L42.7 320.1M38.6 321.6L39.4 323.5M35.4 321.7L34.7 323.5M33.1 319.4L31.3 320.2M33.1 316.2L31.3 315.4M35.4 313.9L34.6 312.1M38.6 313.9L39.3 312M40.9 316.1L42.7 315.3M48.9 326.9L50.7 327.7M46.6 329.2L47.4 331.1M43.4 329.3L42.7 331.1M41.1 327L39.3 327.8M41.1 323.8L39.3 323M43.4 321.5L42.6 319.7M46.6 321.5L47.3 319.6M48.9 323.7L50.7 322.9M56.9 334.4L58.7 335.2M54.6 336.7L55.4 338.6M51.4 336.7L50.7 338.6M49.1 334.5L47.3 335.3M49.1 331.3L47.3 330.5M51.4 329L50.6 327.1M54.6 329L55.3 327.1M56.9 331.2L58.7 330.4M64.9 341.2L66.7 341.9M62.6 343.5L63.4 345.3M59.4 343.5L58.7 345.4M57.1 341.3L55.3 342M57.1 338L55.3 337.3M59.4 335.7L58.6 333.9M62.6 335.7L63.3 333.9M64.9 338L66.7 337.2M72.9 348L74.7 348.7M70.6 350.3L71.4 352.1M67.4 350.3L66.7 352.1M65.1 348L63.3 348.8M65.1 344.8L63.3 344.1M67.4 342.5L66.6 340.7M70.6 342.5L71.3 340.6M72.9 344.7L74.7 344M80.9 354.7L82.7 355.5M78.6 357L79.4 358.9M75.4 357L74.7 358.9M73.1 354.8L71.3 355.6M73.1 351.6L71.3 350.8M75.4 349.3L74.6 347.4M78.6 349.3L79.3 347.4M80.9 351.5L82.7 350.7M88.9 361.4L90.7 362.2M86.6 363.7L87.4 365.6M83.4 363.8L82.7 365.6M81.1 361.5L79.3 362.3M81.1 358.3L79.3 357.5M83.4 356L82.6 354.2M86.6 356L87.3 354.1M88.9 358.2L90.7 357.4M96.9 368.2L98.7 368.9M94.6 370.4L95.4 372.3M91.4 370.5L90.7 372.3M89.1 368.2L87.3 369M89.1 365L87.3 364.3M91.4 362.7L90.6 360.9M94.6 362.7L95.3 360.8M96.9 364.9L98.7 364.2M104.9 374.9L106.7 375.6M102.6 377.2L103.4 379M99.4 377.2L98.7 379M97.1 374.9L95.3 375.7M97.1 371.7L95.3 371M99.4 369.4L98.6 367.6M102.6 369.4L103.3 367.5M104.9 371.6L106.7 370.9M112.9 381.6L114.7 382.3M110.6 383.9L111.4 385.7M107.4 383.9L106.7 385.7M105.1 381.6L103.3 382.4M105.1 378.4L103.3 377.7M107.4 376.1L106.6 374.3M110.6 376.1L111.3 374.3M112.9 378.4L114.7 377.6M120.9 391.4L122.7 392.1M118.6 393.7L119.4 395.5M115.4 393.7L114.7 395.6M113.1 391.5L111.3 392.2M113.1 388.2L111.3 387.5M115.4 386L114.6 384.1M118.6 385.9L119.3 384.1M120.9 388.2L122.7 387.4M128.9 401.2L130.7 402M126.6 403.5L127.4 405.3M123.4 403.5L122.7 405.4M121.1 401.3L119.3 402.1M121.1 398.1L119.3 397.3M123.4 395.8L122.6 393.9M126.6 395.7L127.3 393.9M128.9 398L130.7 397.2M136.9 411.6L138.7 412.4M134.6 413.9L135.4 415.8M131.4 414L130.7 415.8M129.1 411.7L127.3 412.5M129.1 408.5L127.3 407.7M131.4 406.2L130.6 404.4M134.6 406.2L135.3 404.3M136.9 408.4L138.7 407.6M144.9 423.9L146.7 424.6M142.6 426.2L143.4 428M139.4 426.2L138.7 428M137.1 423.9L135.3 424.7M137.1 420.7L135.3 420M139.4 418.4L138.6 416.6M142.6 418.4L143.3 416.5M144.9 420.7L146.7 419.9M152.9 435.7L154.7 436.5M150.6 438L151.4 439.9M147.4 438.1L146.7 439.9M145.1 435.8L143.3 436.6M145.1 432.6L143.3 431.8M147.4 430.3L146.6 428.5M150.6 430.3L151.3 428.4M152.9 432.5L154.7 431.7M160.9 445.1L162.7 445.8M158.6 447.4L159.4 449.2M155.4 447.4L154.7 449.2M153.1 445.1L151.3 445.9M153.1 441.9L151.3 441.2M155.4 439.6L154.6 437.8M158.6 439.6L159.3 437.8M160.9 441.9L162.7 441.1M168.9 454.4L170.7 455.2M166.6 456.7L167.4 458.5M163.4 456.7L162.7 458.6M161.1 454.5L159.3 455.3M161.1 451.3L159.3 450.5M163.4 449L162.6 447.1M166.6 448.9L167.3 447.1M168.9 451.2L170.7 450.4M176.9 460.1L178.7 460.9M174.6 462.4L175.4 464.2M171.4 462.4L170.7 464.3M169.1 460.2L167.3 461M169.1 457L167.3 456.2M171.4 454.7L170.6 452.8M174.6 454.6L175.3 452.8M176.9 456.9L178.7 456.1M184.9 465.3L186.7 466M182.6 467.6L183.4 469.4M179.4 467.6L178.7 469.5M177.1 465.3L175.3 466.1M177.1 462.1L175.3 461.4M179.4 459.8L178.6 458M182.6 459.8L183.3 458M184.9 462.1L186.7 461.3M192.9 468.5L194.7 469.2M190.6 470.8L191.4 472.6M187.4 470.8L186.7 472.7M185.1 468.6L183.3 469.3M185.1 465.3L183.3 464.6M187.4 463L186.6 461.2M190.6 463L191.3 461.2M192.9 465.3L194.7 464.5M200.9 471L202.7 471.8M198.6 473.3L199.4 475.2M195.4 473.3L194.7 475.2M193.1 471.1L191.3 471.9M193.1 467.9L191.3 467.1M195.4 465.6L194.6 463.7M198.6 465.6L199.3 463.7M200.9 467.8L202.7 467M208.9 473.6L210.7 474.3M206.6 475.9L207.4 477.7M203.4 475.9L202.7 477.7M201.1 473.6L199.3 474.4M201.1 470.4L199.3 469.7M203.4 468.1L202.6 466.3M206.6 468.1L207.3 466.3M208.9 470.4L210.7 469.6M216.9 472.3L218.7 473.1M214.6 474.6L215.4 476.5M211.4 474.7L210.7 476.5M209.1 472.4L207.3 473.2M209.1 469.2L207.3 468.4M211.4 466.9L210.6 465.1M214.6 466.9L215.3 465M216.9 469.1L218.7 468.3M224.9 471.1L226.7 471.9M222.6 473.4L223.4 475.2M219.4 473.4L218.7 475.3M217.1 471.2L215.3 472M217.1 468L215.3 467.2M219.4 465.7L218.6 463.8M222.6 465.6L223.3 463.8M224.9 467.9L226.7 467.1M232.9 469.9L234.7 470.6M230.6 472.2L231.4 474M227.4 472.2L226.7 474.1M225.1 469.9L223.3 470.7M225.1 466.7L223.3 466M227.4 464.4L226.6 462.6M230.6 464.4L231.3 462.6M232.9 466.7L234.7 465.9M240.9 468.2L242.7 468.9M238.6 470.5L239.4 472.3M235.4 470.5L234.7 472.4M233.1 468.3L231.3 469M233.1 465L231.3 464.3M235.4 462.7L234.6 460.9M238.6 462.7L239.3 460.9M240.9 465L242.7 464.2M248.9 466.3L250.7 467.1M246.6 468.6L247.4 470.5M243.4 468.7L242.7 470.5M241.1 466.4L239.3 467.2M241.1 463.2L239.3 462.4M243.4 460.9L242.6 459.1M246.6 460.9L247.3 459M248.9 463.1L250.7 462.3M256.9 464.5L258.7 465.2M254.6 466.8L255.4 468.6M251.4 466.8L250.7 468.7M249.1 464.6L247.3 465.3M249.1 461.3L247.3 460.6M251.4 459.1L250.6 457.2M254.6 459L255.3 457.2M256.9 461.3L258.7 460.5M264.9 462.7L266.7 463.4M262.6 464.9L263.4 466.8M259.4 465L258.7 466.8M257.1 462.7L255.3 463.5M257.1 459.5L255.3 458.8M259.4 457.2L258.6 455.4M262.6 457.2L263.3 455.3M264.9 459.4L266.7 458.7M272.9 460.8L274.7 461.6M270.6 463.1L271.4 464.9M267.4 463.1L266.7 465M265.1 460.9L263.3 461.7M265.1 457.7L263.3 456.9M267.4 455.4L266.6 453.5M270.6 455.3L271.3 453.5M272.9 457.6L274.7 456.8M280.9 458.8L282.7 459.5M278.6 461.1L279.4 462.9M275.4 461.1L274.7 462.9M273.1 458.8L271.3 459.6M273.1 455.6L271.3 454.9M275.4 453.3L274.6 451.5M278.6 453.3L279.3 451.5M280.9 455.6L282.7 454.8M288.9 456.7L290.7 457.5M286.6 459L287.4 460.8M283.4 459L282.7 460.9M281.1 456.8L279.3 457.6M281.1 453.6L279.3 452.8M283.4 451.3L282.6 449.4M286.6 451.2L287.3 449.4M288.9 453.5L290.7 452.7M296.9 454.7L298.7 455.4M294.6 457L295.4 458.8M291.4 457L290.7 458.8M289.1 454.7L287.3 455.5M289.1 451.5L287.3 450.8M291.4 449.2L290.6 447.4M294.6 449.2L295.3 447.3M296.9 451.4L298.7 450.7M304.9 452.6L306.7 453.4M302.6 454.9L303.4 456.7M299.4 454.9L298.7 456.8M297.1 452.7L295.3 453.5M297.1 449.5L295.3 448.7M299.4 447.2L298.6 445.3M302.6 447.1L303.3 445.3M304.9 449.4L306.7 448.6M312.9 450.2L314.7 450.9M310.6 452.5L311.4 454.3M307.4 452.5L306.7 454.4M305.1 450.3L303.3 451M305.1 447L303.3 446.3M307.4 444.7L306.6 442.9M310.6 444.7L311.3 442.9M312.9 447L314.7 446.2M320.9 447.4L322.7 448.2M318.6 449.7L319.4 451.6M315.4 449.7L314.7 451.6M313.1 447.5L311.3 448.3M313.1 444.3L311.3 443.5M315.4 442L314.6 440.1M318.6 442L319.3 440.1M320.9 444.2L322.7 443.4M328.9 444.7L330.7 445.4M326.6 446.9L327.4 448.8M323.4 447L322.7 448.8M321.1 444.7L319.3 445.5M321.1 441.5L319.3 440.8M323.4 439.2L322.6 437.4M326.6 439.2L327.3 437.3M328.9 441.4L330.7 440.7M336.9 442.1L338.7 442.9M334.6 444.4L335.4 446.2M331.4 444.4L330.7 446.3M329.1 442.2L327.3 443M329.1 439L327.3 438.2M331.4 436.7L330.6 434.8M334.6 436.6L335.3 434.8M336.9 438.9L338.7 438.1M344.9 440.3L346.7 441M342.6 442.6L343.4 444.4M339.4 442.6L338.7 444.4M337.1 440.3L335.3 441.1M337.1 437.1L335.3 436.4M339.4 434.8L338.6 433M342.6 434.8L343.3 432.9M344.9 437.1L346.7 436.3M352.9 438.4L354.7 439.2M350.6 440.7L351.4 442.6M347.4 440.7L346.7 442.6M345.1 438.5L343.3 439.3M345.1 435.3L343.3 434.5M347.4 433L346.6 431.1M350.6 433L351.3 431.1M352.9 435.2L354.7 434.4M360.9 436.6L362.7 437.3M358.6 438.9L359.4 440.7M355.4 438.9L354.7 440.7M353.1 436.6L351.3 437.4M353.1 433.4L351.3 432.7M355.4 431.1L354.6 429.3M358.6 431.1L359.3 429.3M360.9 433.4L362.7 432.6M368.9 438.4L370.7 439.1M366.6 440.6L367.4 442.5M363.4 440.7L362.7 442.5M361.1 438.4L359.3 439.2M361.1 435.2L359.3 434.5M363.4 432.9L362.6 431.1M366.6 432.9L367.3 431M368.9 435.1L370.7 434.4M376.9 440.1L378.7 440.9M374.6 442.4L375.4 444.3M371.4 442.4L370.7 444.3M369.1 440.2L367.3 441M369.1 437L367.3 436.2M371.4 434.7L370.6 432.8M374.6 434.7L375.3 432.8M376.9 436.9L378.7 436.1M384.9 445.9L386.7 446.6M382.6 448.2L383.4 450M379.4 448.2L378.7 450M377.1 445.9L375.3 446.7M377.1 442.7L375.3 442M379.4 440.4L378.6 438.6M382.6 440.4L383.3 438.5M384.9 442.7L386.7 441.9M392.9 452.9L394.7 453.7M390.6 455.2L391.4 457.1M387.4 455.2L386.7 457.1M385.1 453L383.3 453.8M385.1 449.8L383.3 449M387.4 447.5L386.6 445.6M390.6 447.5L391.3 445.6M392.9 449.7L394.7 448.9M400.9 459.8L402.7 460.6M398.6 462.1L399.4 463.9M395.4 462.1L394.7 464M393.1 459.9L391.3 460.7M393.1 456.7L391.3 455.9M395.4 454.4L394.6 452.5M398.6 454.3L399.3 452.5M400.9 456.6L402.7 455.8M408.9 466.6L410.7 467.3M406.6 468.9L407.4 470.7M403.4 468.9L402.7 470.7M401.1 466.6L399.3 467.4M401.1 463.4L399.3 462.7M403.4 461.1L402.6 459.3M406.6 461.1L407.3 459.3M408.9 463.4L410.7 462.6M416.9 473.3L418.7 474.1M414.6 475.6L415.4 477.5M411.4 475.7L410.7 477.5M409.1 473.4L407.3 474.2M409.1 470.2L407.3 469.4M411.4 467.9L410.6 466.1M414.6 467.9L415.3 466M416.9 470.1L418.7 469.3M424.9 479.3L426.7 480.1M422.6 481.6L423.4 483.4M419.4 481.6L418.7 483.5M417.1 479.4L415.3 480.2M417.1 476.2L415.3 475.4M419.4 473.9L418.6 472M422.6 473.8L423.3 472M424.9 476.1L426.7 475.3M432.9 484L434.7 484.7M430.6 486.3L431.4 488.1M427.4 486.3L426.7 488.1M425.1 484L423.3 484.8M425.1 480.8L423.3 480.1M427.4 478.5L426.6 476.7M430.6 478.5L431.3 476.6M432.9 480.7L434.7 480M440.9 488.6L442.7 489.4M438.6 490.9L439.4 492.7M435.4 490.9L434.7 492.8M433.1 488.7L431.3 489.5M433.1 485.5L431.3 484.7M435.4 483.2L434.6 481.3M438.6 483.1L439.3 481.3M440.9 485.4L442.7 484.6M448.9 493.3L450.7 494M446.6 495.5L447.4 497.4M443.4 495.6L442.7 497.4M441.1 493.3L439.3 494.1M441.1 490.1L439.3 489.4M443.4 487.8L442.6 486M446.6 487.8L447.3 485.9M448.9 490L450.7 489.3M456.9 498.8L458.7 499.6M454.6 501.1L455.4 502.9M451.4 501.1L450.7 503M449.1 498.9L447.3 499.7M449.1 495.7L447.3 494.9M451.4 493.4L450.6 491.5M454.6 493.3L455.3 491.5M456.9 495.6L458.7 494.8M464.9 505.3L466.7 506M462.6 507.6L463.4 509.4M459.4 507.6L458.7 509.4M457.1 505.3L455.3 506.1M457.1 502.1L455.3 501.4M459.4 499.8L458.6 498M462.6 499.8L463.3 497.9M464.9 502.1L466.7 501.3M472.9 511.7L474.7 512.5M470.6 514L471.4 515.9M467.4 514L466.7 515.9M465.1 511.8L463.3 512.6M465.1 508.6L463.3 507.8M467.4 506.3L466.6 504.4M470.6 506.3L471.3 504.4M472.9 508.5L474.7 507.7M480.9 518.4L482.7 519.2M478.6 520.7L479.4 522.6M475.4 520.7L474.7 522.6M473.1 518.5L471.3 519.3M473.1 515.3L471.3 514.5M475.4 513L474.6 511.1M478.6 513L479.3 511.1M480.9 515.2L482.7 514.4M488.9 525.8L490.7 526.6M486.6 528.1L487.4 529.9M483.4 528.1L482.7 530M481.1 525.9L479.3 526.7M481.1 522.7L479.3 521.9M483.4 520.4L482.6 518.5M486.6 520.3L487.3 518.5M488.9 522.6L490.7 521.8M496.9 533.2L498.7 533.9M494.6 535.5L495.4 537.3M491.4 535.5L490.7 537.4M489.1 533.3L487.3 534M489.1 530L487.3 529.3M491.4 527.7L490.6 525.9M494.6 527.7L495.3 525.9M496.9 530L498.7 529.2M504.9 540.6L506.7 541.3M502.6 542.9L503.4 544.7M499.4 542.9L498.7 544.7M497.1 540.6L495.3 541.4M497.1 537.4L495.3 536.7M499.4 535.1L498.6 533.3M502.6 535.1L503.3 533.3M504.9 537.4L506.7 536.6M512.9 547.8L514.7 548.6M510.6 550.1L511.4 552M507.4 550.2L506.7 552M505.1 547.9L503.3 548.7M505.1 544.7L503.3 544M507.4 542.4L506.6 540.6M510.6 542.4L511.3 540.5M512.9 544.6L514.7 543.9M520.9 555.1L522.7 555.9M518.6 557.4L519.4 559.3M515.4 557.4L514.7 559.3M513.1 555.2L511.3 556M513.1 552L511.3 551.2M515.4 549.7L514.6 547.8M518.6 549.7L519.3 547.8M520.9 551.9L522.7 551.1M528.9 561.6L530.7 562.4M526.6 563.9L527.4 565.8M523.4 564L522.7 565.8M521.1 561.7L519.3 562.5M521.1 558.5L519.3 557.7M523.4 556.2L522.6 554.4M526.6 556.2L527.3 554.3M528.9 558.4L530.7 557.6M536.9 565.9L538.7 566.6M534.6 568.2L535.4 570M531.4 568.2L530.7 570M529.1 565.9L527.3 566.7M529.1 562.7L527.3 562M531.4 560.4L530.6 558.6M534.6 560.4L535.3 558.5M536.9 562.7L538.7 561.9M544.9 569.3L546.7 570M542.6 571.5L543.4 573.4M539.4 571.6L538.7 573.4M537.1 569.3L535.3 570.1M537.1 566.1L535.3 565.4M539.4 563.8L538.6 562M542.6 563.8L543.3 561.9M544.9 566L546.7 565.3M552.9 566.7L554.7 567.5M550.6 569L551.4 570.8M547.4 569L546.7 570.9M545.1 566.8L543.3 567.6M545.1 563.6L543.3 562.8M547.4 561.3L546.6 559.4M550.6 561.2L551.3 559.4M552.9 563.5L554.7 562.7M560.9 564.2L562.7 564.9M558.6 566.5L559.4 568.3M555.4 566.5L554.7 568.3M553.1 564.2L551.3 565M553.1 561L551.3 560.3M555.4 558.7L554.6 556.9M558.6 558.7L559.3 556.8M560.9 560.9L562.7 560.2M568.9 560.8L570.7 561.5M566.6 563.1L567.4 564.9M563.4 563.1L562.7 565M561.1 560.9L559.3 561.6M561.1 557.7L559.3 556.9M563.4 555.4L562.6 553.5M566.6 555.3L567.3 553.5M568.9 557.6L570.7 556.8M576.9 556.1L578.7 556.8M574.6 558.4L575.4 560.2M571.4 558.4L570.7 560.2M569.1 556.1L567.3 556.9M569.1 552.9L567.3 552.2M571.4 550.6L570.6 548.8M574.6 550.6L575.3 548.8M576.9 552.9L578.7 552.1M584.9 551.3L586.7 552.1M582.6 553.6L583.4 555.5M579.4 553.7L578.7 555.5M577.1 551.4L575.3 552.2M577.1 548.2L575.3 547.5M579.4 545.9L578.6 544.1M582.6 545.9L583.3 544M584.9 548.1L586.7 547.4M592.9 546.3L594.7 547.1M590.6 548.6L591.4 550.4M587.4 548.6L586.7 550.5M585.1 546.4L583.3 547.2M585.1 543.2L583.3 542.4M587.4 540.9L586.6 539M590.6 540.8L591.3 539M592.9 543.1L594.7 542.3M600.9 541.1L602.7 541.8M598.6 543.4L599.4 545.2M595.4 543.4L594.7 545.2M593.1 541.1L591.3 541.9M593.1 537.9L591.3 537.2M595.4 535.6L594.6 533.8M598.6 535.6L599.3 533.8M600.9 537.9L602.7 537.1M608.9 535.8L610.7 536.6M606.6 538.1L607.4 540M603.4 538.2L602.7 540M601.1 535.9L599.3 536.7M601.1 532.7L599.3 531.9M603.4 530.4L602.6 528.6M606.6 530.4L607.3 528.5M608.9 532.6L610.7 531.8M616.9 532.1L618.7 532.8M614.6 534.4L615.4 536.2M611.4 534.4L610.7 536.2M609.1 532.1L607.3 532.9M609.1 528.9L607.3 528.2M611.4 526.6L610.6 524.8M614.6 526.6L615.3 524.8M616.9 528.9L618.7 528.1M624.9 530.7L626.7 531.5M622.6 533L623.4 534.9M619.4 533.1L618.7 534.9M617.1 530.8L615.3 531.6M617.1 527.6L615.3 526.8M619.4 525.3L618.6 523.5M622.6 525.3L623.3 523.4M624.9 527.5L626.7 526.7M632.9 529.4L634.7 530.2M630.6 531.7L631.4 533.5M627.4 531.7L626.7 533.6M625.1 529.5L623.3 530.3M625.1 526.3L623.3 525.5M627.4 524L626.6 522.1M630.6 523.9L631.3 522.1M632.9 526.2L634.7 525.4M640.9 528.1L642.7 528.8M638.6 530.4L639.4 532.2M635.4 530.4L634.7 532.2M633.1 528.1L631.3 528.9M633.1 524.9L631.3 524.2M635.4 522.6L634.6 520.8M638.6 522.6L639.3 520.8M640.9 524.9L642.7 524.1M648.9 530.7L650.7 531.4M646.6 532.9L647.4 534.8M643.4 533L642.7 534.8M641.1 530.7L639.3 531.5M641.1 527.5L639.3 526.8M643.4 525.2L642.6 523.4M646.6 525.2L647.3 523.3M648.9 527.4L650.7 526.7M656.9 535.6L658.7 536.3M654.6 537.9L655.4 539.7M651.4 537.9L650.7 539.7M649.1 535.6L647.3 536.4M649.1 532.4L647.3 531.7M651.4 530.1L650.6 528.3M654.6 530.1L655.3 528.3M656.9 532.4L658.7 531.6M664.9 540.5L666.7 541.2M662.6 542.8L663.4 544.6M659.4 542.8L658.7 544.7M657.1 540.6L655.3 541.3M657.1 537.3L655.3 536.6M659.4 535.1L658.6 533.2M662.6 535L663.3 533.2M664.9 537.3L666.7 536.5M672.9 545.3L674.7 546.1M670.6 547.6L671.4 549.4M667.4 547.6L666.7 549.5M665.1 545.4L663.3 546.2M665.1 542.2L663.3 541.4M667.4 539.9L666.6 538M670.6 539.8L671.3 538M672.9 542.1L674.7 541.3M680.9 549.9L682.7 550.7M678.6 552.2L679.4 554.1M675.4 552.2L674.7 554.1M673.1 550L671.3 550.8M673.1 546.8L671.3 546M675.4 544.5L674.6 542.6M678.6 544.5L679.3 542.6M680.9 546.7L682.7 545.9M688.9 554.5L690.7 555.3M686.6 556.8L687.4 558.7M683.4 556.9L682.7 558.7M681.1 554.6L679.3 555.4M681.1 551.4L679.3 550.6M683.4 549.1L682.6 547.3M686.6 549.1L687.3 547.2M688.9 551.3L690.7 550.5M696.9 558.9L698.7 559.7M694.6 561.2L695.4 563.1M691.4 561.2L690.7 563.1M689.1 559L687.3 559.8M689.1 555.8L687.3 555M691.4 553.5L690.6 551.6M694.6 553.5L695.3 551.6M696.9 555.7L698.7 554.9M704.9 561.7L706.7 562.4M702.6 564L703.4 565.8M699.4 564L698.7 565.9M697.1 561.8L695.3 562.5M697.1 558.5L695.3 557.8M699.4 556.2L698.6 554.4M702.6 556.2L703.3 554.4M704.9 558.5L706.7 557.7M712.9 564.5L714.7 565.2M710.6 566.8L711.4 568.6M707.4 566.8L706.7 568.6M705.1 564.5L703.3 565.3M705.1 561.3L703.3 560.6M707.4 559L706.6 557.2M710.6 559L711.3 557.1M712.9 561.2L714.7 560.5M720.9 567.2L722.7 568M718.6 569.5L719.4 571.4M715.4 569.5L714.7 571.4M713.1 567.3L711.3 568.1M713.1 564.1L711.3 563.3M715.4 561.8L714.6 559.9M718.6 561.8L719.3 559.9M720.9 564L722.7 563.2M728.9 566.3L730.7 567M726.6 568.6L727.4 570.4M723.4 568.6L722.7 570.5M721.1 566.3L719.3 567.1M721.1 563.1L719.3 562.4M723.4 560.8L722.6 559M726.6 560.8L727.3 559M728.9 563.1L730.7 562.3M736.9 564.8L738.7 565.5M734.6 567.1L735.4 568.9M731.4 567.1L730.7 569M729.1 564.9L727.3 565.6M729.1 561.6L727.3 560.9M731.4 559.4L730.6 557.5M734.6 559.3L735.3 557.5M736.9 561.6L738.7 560.8M744.9 563.3L746.7 564.1M742.6 565.6L743.4 567.4M739.4 565.6L738.7 567.5M737.1 563.4L735.3 564.2M737.1 560.2L735.3 559.4M739.4 557.9L738.6 556M742.6 557.8L743.3 556M744.9 560.1L746.7 559.3M752.9 560.6L754.7 561.3M750.6 562.9L751.4 564.7M747.4 562.9L746.7 564.7M745.1 560.6L743.3 561.4M745.1 557.4L743.3 556.7M747.4 555.1L746.6 553.3M750.6 555.1L751.3 553.3M752.9 557.4L754.7 556.6M760.9 556.6L762.7 557.3M758.6 558.9L759.4 560.7M755.4 558.9L754.7 560.7M753.1 556.6L751.3 557.4M753.1 553.4L751.3 552.7M755.4 551.1L754.6 549.3M758.6 551.1L759.3 549.3M760.9 553.4L762.7 552.6M768.9 552.6L770.7 553.3M766.6 554.9L767.4 556.7M763.4 554.9L762.7 556.7M761.1 552.6L759.3 553.4M761.1 549.4L759.3 548.7M763.4 547.1L762.6 545.3M766.6 547.1L767.3 545.3M768.9 549.4L770.7 548.6M776.9 547.5L778.7 548.2M774.6 549.8L775.4 551.6M771.4 549.8L770.7 551.7M769.1 547.5L767.3 548.3M769.1 544.3L767.3 543.6M771.4 542L770.6 540.2M774.6 542L775.3 540.2M776.9 544.3L778.7 543.5M784.9 539.1L786.7 539.8M782.6 541.4L783.4 543.2M779.4 541.4L778.7 543.3M777.1 539.2L775.3 539.9M777.1 536L775.3 535.2M779.4 533.7L778.6 531.8M782.6 533.6L783.3 531.8M784.9 535.9L786.7 535.1M792.9 530.7L794.7 531.5M790.6 533L791.4 534.8M787.4 533L786.7 534.9M785.1 530.8L783.3 531.6M785.1 527.6L783.3 526.8M787.4 525.3L786.6 523.4M790.6 525.2L791.3 523.4M792.9 527.5L794.7 526.7M800.9 522.1L802.7 522.9M798.6 524.4L799.4 526.3M795.4 524.4L794.7 526.3M793.1 522.2L791.3 523M793.1 519L791.3 518.2M795.4 516.7L794.6 514.8M798.6 516.7L799.3 514.8M800.9 518.9L802.7 518.1M808.9 513.4L810.7 514.1M806.6 515.7L807.4 517.5M803.4 515.7L802.7 517.6M801.1 513.5L799.3 514.2M801.1 510.2L799.3 509.5M803.4 508L802.6 506.1M806.6 507.9L807.3 506.1M808.9 510.2L810.7 509.4M816.9 504.7L818.7 505.4M814.6 507L815.4 508.8M811.4 507L810.7 508.8M809.1 504.7L807.3 505.5M809.1 501.5L807.3 500.8M811.4 499.2L810.6 497.4M814.6 499.2L815.3 497.3M816.9 501.4L818.7 500.7M824.9 493.3L826.7 494.1M822.6 495.6L823.4 497.5M819.4 495.7L818.7 497.5M817.1 493.4L815.3 494.2M817.1 490.2L815.3 489.4M819.4 487.9L818.6 486.1M822.6 487.9L823.3 486M824.9 490.1L826.7 489.3M832.9 482.4L834.7 483.1M830.6 484.6L831.4 486.5M827.4 484.7L826.7 486.5M825.1 482.4L823.3 483.2M825.1 479.2L823.3 478.5M827.4 476.9L826.6 475.1M830.6 476.9L831.3 475M832.9 479.1L834.7 478.4M840.9 473.5L842.7 474.2M838.6 475.8L839.4 477.6M835.4 475.8L834.7 477.6M833.1 473.5L831.3 474.3M833.1 470.3L831.3 469.6M835.4 468L834.6 466.2M838.6 468L839.3 466.1M840.9 470.2L842.7 469.5M848.9 464.6L850.7 465.3M846.6 466.9L847.4 468.7M843.4 466.9L842.7 468.7M841.1 464.6L839.3 465.4M841.1 461.4L839.3 460.7M843.4 459.1L842.6 457.3M846.6 459.1L847.3 457.3M848.9 461.4L850.7 460.6M856.9 456.6L858.7 457.3M854.6 458.9L855.4 460.7M851.4 458.9L850.7 460.7M849.1 456.6L847.3 457.4M849.1 453.4L847.3 452.7M851.4 451.1L850.6 449.3M854.6 451.1L855.3 449.3M856.9 453.4L858.7 452.6M864.9 448.6L866.7 449.3M862.6 450.9L863.4 452.7M859.4 450.9L858.7 452.7M857.1 448.6L855.3 449.4M857.1 445.4L855.3 444.7M859.4 443.1L858.6 441.3M862.6 443.1L863.3 441.3M864.9 445.4L866.7 444.6M872.9 441.6L874.7 442.3M870.6 443.9L871.4 445.7M867.4 443.9L866.7 445.7M865.1 441.6L863.3 442.4M865.1 438.4L863.3 437.7M867.4 436.1L866.6 434.3M870.6 436.1L871.3 434.3M872.9 438.4L874.7 437.6M880.9 437.6L882.7 438.3M878.6 439.9L879.4 441.7M875.4 439.9L874.7 441.7M873.1 437.6L871.3 438.4M873.1 434.4L871.3 433.7M875.4 432.1L874.6 430.3M878.6 432.1L879.3 430.3M880.9 434.4L882.7 433.6M888.9 433.6L890.7 434.3M886.6 435.9L887.4 437.7M883.4 435.9L882.7 437.7M881.1 433.6L879.3 434.4M881.1 430.4L879.3 429.7M883.4 428.1L882.6 426.3M886.6 428.1L887.3 426.3M888.9 430.4L890.7 429.6M896.9 429.6L898.7 430.3M894.6 431.9L895.4 433.7M891.4 431.9L890.7 433.7M889.1 429.6L887.3 430.4M889.1 426.4L887.3 425.7M891.4 424.1L890.6 422.3M894.6 424.1L895.3 422.3M896.9 426.4L898.7 425.6M904.9 425.6L906.7 426.3M902.6 427.9L903.4 429.7M899.4 427.9L898.7 429.7M897.1 425.6L895.3 426.4M897.1 422.4L895.3 421.7M899.4 420.1L898.6 418.3M902.6 420.1L903.3 418.3M904.9 422.4L906.7 421.6M912.9 421.7L914.7 422.5M910.6 424L911.4 425.9M907.4 424L906.7 425.9M905.1 421.8L903.3 422.6M905.1 418.6L903.3 417.8M907.4 416.3L906.6 414.4M910.6 416.3L911.3 414.4M912.9 418.5L914.7 417.7M920.9 417.9L922.7 418.6M918.6 420.2L919.4 422M915.4 420.2L914.7 422M913.1 417.9L911.3 418.7M913.1 414.7L911.3 414M915.4 412.4L914.6 410.6M918.6 412.4L919.3 410.5M920.9 414.7L922.7 413.9M928.9 414L930.7 414.8M926.6 416.3L927.4 418.2M923.4 416.3L922.7 418.2M921.1 414.1L919.3 414.9M921.1 410.9L919.3 410.1M923.4 408.6L922.6 406.7M926.6 408.6L927.3 406.7M928.9 410.8L930.7 410M936.9 408.7L938.7 409.5M934.6 411L935.4 412.9M931.4 411.1L930.7 412.9M929.1 408.8L927.3 409.6M929.1 405.6L927.3 404.9M931.4 403.3L930.6 401.5M934.6 403.3L935.3 401.4M936.9 405.5L938.7 404.8M944.9 402.6L946.7 403.4M942.6 404.9L943.4 406.8M939.4 405L938.7 406.8M937.1 402.7L935.3 403.5M937.1 399.5L935.3 398.7M939.4 397.2L938.6 395.4M942.6 397.2L943.3 395.3M944.9 399.4L946.7 398.6M952.9 395.3L954.7 396.1M950.6 397.6L951.4 399.5M947.4 397.7L946.7 399.5M945.1 395.4L943.3 396.2M945.1 392.2L943.3 391.4M947.4 389.9L946.6 388.1M950.6 389.9L951.3 388M952.9 392.1L954.7 391.3M960.9 386.9L962.7 387.6M958.6 389.2L959.4 391M955.4 389.2L954.7 391M953.1 386.9L951.3 387.7M953.1 383.7L951.3 383M955.4 381.4L954.6 379.6M958.6 381.4L959.3 379.5M960.9 383.7L962.7 382.9M968.9 380.1L970.7 380.9M966.6 382.4L967.4 384.3M963.4 382.4L962.7 384.3M961.1 380.2L959.3 381M961.1 377L959.3 376.2M963.4 374.7L962.6 372.8M966.6 374.7L967.3 372.8M968.9 376.9L970.7 376.1M976.9 376.3L978.7 377M974.6 378.6L975.4 380.4M971.4 378.6L970.7 380.5M969.1 376.3L967.3 377.1M969.1 373.1L967.3 372.4M971.4 370.8L970.6 369M974.6 370.8L975.3 369M976.9 373.1L978.7 372.3M984.9 372.4L986.7 373.2M982.6 374.7L983.4 376.6M979.4 374.7L978.7 376.6M977.1 372.5L975.3 373.3M977.1 369.3L975.3 368.5M979.4 367L978.6 365.1M982.6 367L983.3 365.1M984.9 369.2L986.7 368.4M992.9 368.6L994.7 369.3M990.6 370.9L991.4 372.7M987.4 370.9L986.7 372.7M985.1 368.6L983.3 369.4M985.1 365.4L983.3 364.7M987.4 363.1L986.6 361.3M990.6 363.1L991.3 361.3M992.9 365.4L994.7 364.6M1000.9 367.6L1002.7 368.4M998.6 369.9L999.4 371.8M995.4 370L994.7 371.8M993.1 367.7L991.3 368.5M993.1 364.5L991.3 363.7M995.4 362.2L994.6 360.4M998.6 362.2L999.3 360.3M1000.9 364.4L1002.7 363.6M1008.9 366.7L1010.7 367.4M1006.6 369L1007.4 370.8M1003.4 369L1002.7 370.9M1001.1 366.8L999.3 367.5M1001.1 363.5L999.3 362.8M1003.4 361.3L1002.6 359.4M1006.6 361.2L1007.3 359.4M1008.9 363.5L1010.7 362.7M1016.9 365.7L1018.7 366.5M1014.6 368L1015.4 369.9M1011.4 368.1L1010.7 369.9M1009.1 365.8L1007.3 366.6M1009.1 362.6L1007.3 361.9M1011.4 360.3L1010.6 358.5M1014.6 360.3L1015.3 358.4M1016.9 362.5L1018.7 361.8M1024.9 364.8L1026.7 365.6M1022.6 367.1L1023.4 368.9M1019.4 367.1L1018.7 369M1017.1 364.9L1015.3 365.7M1017.1 361.7L1015.3 360.9M1019.4 359.4L1018.6 357.5M1022.6 359.3L1023.3 357.5M1024.9 361.6L1026.7 360.8M1032.9 362.1L1034.7 362.9M1030.6 364.4L1031.4 366.3M1027.4 364.4L1026.7 366.3M1025.1 362.2L1023.3 363M1025.1 359L1023.3 358.2M1027.4 356.7L1026.6 354.8M1030.6 356.7L1031.3 354.8M1032.9 358.9L1034.7 358.1M1040.9 358.8L1042.7 359.6M1038.6 361.1L1039.4 363M1035.4 361.2L1034.7 363M1033.1 358.9L1031.3 359.7M1033.1 355.7L1031.3 355M1035.4 353.4L1034.6 351.6M1038.6 353.4L1039.3 351.5M1040.9 355.6L1042.7 354.9M1048.9 355.6L1050.7 356.3M1046.6 357.9L1047.4 359.7M1043.4 357.9L1042.7 359.7M1041.1 355.6L1039.3 356.4M1041.1 352.4L1039.3 351.7M1043.4 350.1L1042.6 348.3M1046.6 350.1L1047.3 348.3M1048.9 352.4L1050.7 351.6M1056.9 350.8L1058.7 351.6M1054.6 353.1L1055.4 355M1051.4 353.2L1050.7 355M1049.1 350.9L1047.3 351.7M1049.1 347.7L1047.3 347M1051.4 345.4L1050.6 343.6M1054.6 345.4L1055.3 343.5M1056.9 347.6L1058.7 346.9M1064.9 346.1L1066.7 346.9M1062.6 348.4L1063.4 350.3M1059.4 348.4L1058.7 350.3M1057.1 346.2L1055.3 347M1057.1 343L1055.3 342.2M1059.4 340.7L1058.6 338.8M1062.6 340.7L1063.3 338.8M1064.9 342.9L1066.7 342.1M1072.9 341.3L1074.7 342M1070.6 343.6L1071.4 345.4M1067.4 343.6L1066.7 345.4M1065.1 341.3L1063.3 342.1M1065.1 338.1L1063.3 337.4M1067.4 335.8L1066.6 334M1070.6 335.8L1071.3 333.9M1072.9 338.1L1074.7 337.3M1080.9 336L1082.7 336.8M1078.6 338.3L1079.4 340.2M1075.4 338.4L1074.7 340.2M1073.1 336.1L1071.3 336.9M1073.1 332.9L1071.3 332.1M1075.4 330.6L1074.6 328.8M1078.6 330.6L1079.3 328.7M1080.9 332.8L1082.7 332M1088.9 330.8L1090.7 331.6M1086.6 333.1L1087.4 334.9M1083.4 333.1L1082.7 335M1081.1 330.9L1079.3 331.7M1081.1 327.7L1079.3 326.9M1083.4 325.4L1082.6 323.5M1086.6 325.3L1087.3 323.5M1088.9 327.6L1090.7 326.8M1096.9 325.6L1098.7 326.3M1094.6 327.9L1095.4 329.7M1091.4 327.9L1090.7 329.7M1089.1 325.6L1087.3 326.4M1089.1 322.4L1087.3 321.7M1091.4 320.1L1090.6 318.3M1094.6 320.1L1095.3 318.3M1096.9 322.4L1098.7 321.6M1104.9 320L1106.7 320.8M1102.6 322.3L1103.4 324.2M1099.4 322.4L1098.7 324.2M1097.1 320.1L1095.3 320.9M1097.1 316.9L1095.3 316.1M1099.4 314.6L1098.6 312.8M1102.6 314.6L1103.3 312.7M1104.9 316.8L1106.7 316M1112.9 314.5L1114.7 315.2M1110.6 316.8L1111.4 318.6M1107.4 316.8L1106.7 318.7M1105.1 314.6L1103.3 315.3M1105.1 311.3L1103.3 310.6M1107.4 309.1L1106.6 307.2M1110.6 309L1111.3 307.2M1112.9 311.3L1114.7 310.5M1120.9 309L1122.7 309.7M1118.6 311.3L1119.4 313.1M1115.4 311.3L1114.7 313.1M1113.1 309L1111.3 309.8M1113.1 305.8L1111.3 305.1M1115.4 303.5L1114.6 301.7M1118.6 303.5L1119.3 301.6M1120.9 305.7L1122.7 305M1128.9 305.4L1130.7 306.1M1126.6 307.7L1127.4 309.5M1123.4 307.7L1122.7 309.6M1121.1 305.5L1119.3 306.2M1121.1 302.2L1119.3 301.5M1123.4 300L1122.6 298.1M1126.6 299.9L1127.3 298.1M1128.9 302.2L1130.7 301.4M1136.9 302.5L1138.7 303.2M1134.6 304.8L1135.4 306.6M1131.4 304.8L1130.7 306.7M1129.1 302.6L1127.3 303.3M1129.1 299.3L1127.3 298.6M1131.4 297L1130.6 295.2M1134.6 297L1135.3 295.2M1136.9 299.3L1138.7 298.5M1144.9 299.6L1146.7 300.3M1142.6 301.9L1143.4 303.7M1139.4 301.9L1138.7 303.7M1137.1 299.6L1135.3 300.4M1137.1 296.4L1135.3 295.7M1139.4 294.1L1138.6 292.3M1142.6 294.1L1143.3 292.3M1144.9 296.4L1146.7 295.6M1152.9 297.8L1154.7 298.5M1150.6 300L1151.4 301.9M1147.4 300.1L1146.7 301.9M1145.1 297.8L1143.3 298.6M1145.1 294.6L1143.3 293.9M1147.4 292.3L1146.6 290.5M1150.6 292.3L1151.3 290.4M1152.9 294.5L1154.7 293.8M1160.9 295.9L1162.7 296.7M1158.6 298.2L1159.4 300.1M1155.4 298.3L1154.7 300.1M1153.1 296L1151.3 296.8M1153.1 292.8L1151.3 292M1155.4 290.5L1154.6 288.7M1158.6 290.5L1159.3 288.6M1160.9 292.7L1162.7 291.9M1168.9 293.8L1170.7 294.6M1166.6 296.1L1167.4 298M1163.4 296.2L1162.7 298M1161.1 293.9L1159.3 294.7M1161.1 290.7L1159.3 290M1163.4 288.4L1162.6 286.6M1166.6 288.4L1167.3 286.5M1168.9 290.6L1170.7 289.9M1176.9 290.9L1178.7 291.7M1174.6 293.2L1175.4 295.1M1171.4 293.3L1170.7 295.1M1169.1 291L1167.3 291.8M1169.1 287.8L1167.3 287M1171.4 285.5L1170.6 283.7M1174.6 285.5L1175.3 283.6M1176.9 287.7L1178.7 286.9M1184.9 288L1186.7 288.8M1182.6 290.3L1183.4 292.2M1179.4 290.3L1178.7 292.2M1177.1 288.1L1175.3 288.9M1177.1 284.9L1175.3 284.1M1179.4 282.6L1178.6 280.7M1182.6 282.6L1183.3 280.7M1184.9 284.8L1186.7 284M1192.9 286.6L1194.7 287.3M1190.6 288.9L1191.4 290.7M1187.4 288.9L1186.7 290.7M1185.1 286.6L1183.3 287.4M1185.1 283.4L1183.3 282.7M1187.4 281.1L1186.6 279.3M1190.6 281.1L1191.3 279.3M1192.9 283.4L1194.7 282.6M1200.9 286.6L1202.7 287.3M1198.6 288.9L1199.4 290.7M1195.4 288.9L1194.7 290.7M1193.1 286.6L1191.3 287.4M1193.1 283.4L1191.3 282.7M1195.4 281.1L1194.6 279.3M1198.6 281.1L1199.3 279.3M1200.9 283.4L1202.7 282.6M1208.9 286.6L1210.7 287.3M1206.6 288.9L1207.4 290.7M1203.4 288.9L1202.7 290.7M1201.1 286.6L1199.3 287.4M1201.1 283.4L1199.3 282.7M1203.4 281.1L1202.6 279.3M1206.6 281.1L1207.3 279.3M1208.9 283.4L1210.7 282.6M1216.9 289.1L1218.7 289.9M1214.6 291.4L1215.4 293.3M1211.4 291.4L1210.7 293.3M1209.1 289.2L1207.3 290M1209.1 286L1207.3 285.2M1211.4 283.7L1210.6 281.8M1214.6 283.7L1215.3 281.8M1216.9 285.9L1218.7 285.1M1224.9 292L1226.7 292.8M1222.6 294.3L1223.4 296.2M1219.4 294.3L1218.7 296.2M1217.1 292.1L1215.3 292.9M1217.1 288.9L1215.3 288.1M1219.4 286.6L1218.6 284.7M1222.6 286.6L1223.3 284.7M1224.9 288.8L1226.7 288M1232.9 294.8L1234.7 295.5M1230.6 297.1L1231.4 298.9M1227.4 297.1L1226.7 299M1225.1 294.9L1223.3 295.6M1225.1 291.7L1223.3 290.9M1227.4 289.4L1226.6 287.5M1230.6 289.3L1231.3 287.5M1232.9 291.6L1234.7 290.8M1240.9 296.6L1242.7 297.4M1238.6 298.9L1239.4 300.8M1235.4 298.9L1234.7 300.8M1233.1 296.7L1231.3 297.5M1233.1 293.5L1231.3 292.7M1235.4 291.2L1234.6 289.3M1238.6 291.2L1239.3 289.3M1240.9 293.4L1242.7 292.6M1248.9 298.4L1250.7 299.2M1246.6 300.7L1247.4 302.6M1243.4 300.8L1242.7 302.6M1241.1 298.5L1239.3 299.3M1241.1 295.3L1239.3 294.5M1243.4 293L1242.6 291.2M1246.6 293L1247.3 291.1M1248.9 295.2L1250.7 294.4M1256.9 299.9L1258.7 300.6M1254.6 302.2L1255.4 304M1251.4 302.2L1250.7 304M1249.1 299.9L1247.3 300.7M1249.1 296.7L1247.3 296M1251.4 294.4L1250.6 292.6M1254.6 294.4L1255.3 292.6M1256.9 296.7L1258.7 295.9M1264.9 300.7L1266.7 301.4M1262.6 303L1263.4 304.8M1259.4 303L1258.7 304.8M1257.1 300.7L1255.3 301.5M1257.1 297.5L1255.3 296.8M1259.4 295.2L1258.6 293.4M1262.6 295.2L1263.3 293.4M1264.9 297.5L1266.7 296.7M1272.9 301.5L1274.7 302.2M1270.6 303.8L1271.4 305.6M1267.4 303.8L1266.7 305.6M1265.1 301.5L1263.3 302.3M1265.1 298.3L1263.3 297.6M1267.4 296L1266.6 294.2M1270.6 296L1271.3 294.2M1272.9 298.3L1274.7 297.5M1280.9 302.3L1282.7 303M1278.6 304.6L1279.4 306.4M1275.4 304.6L1274.7 306.4M1273.1 302.3L1271.3 303.1M1273.1 299.1L1271.3 298.4M1275.4 296.8L1274.6 295M1278.6 296.8L1279.3 295M1280.9 299.1L1282.7 298.3M1288.9 300.7L1290.7 301.4M1286.6 303L1287.4 304.8M1283.4 303L1282.7 304.9M1281.1 300.8L1279.3 301.5M1281.1 297.6L1279.3 296.8M1283.4 295.3L1282.6 293.4M1286.6 295.2L1287.3 293.4M1288.9 297.5L1290.7 296.7M1296.9 297.7L1298.7 298.4M1294.6 300L1295.4 301.8M1291.4 300L1290.7 301.9M1289.1 297.8L1287.3 298.5M1289.1 294.6L1287.3 293.8M1291.4 292.3L1290.6 290.4M1294.6 292.2L1295.3 290.4M1296.9 294.5L1298.7 293.7M1304.9 294.7L1306.7 295.4M1302.6 297L1303.4 298.8M1299.4 297L1298.7 298.9M1297.1 294.8L1295.3 295.5M1297.1 291.6L1295.3 290.8M1299.4 289.3L1298.6 287.4M1302.6 289.2L1303.3 287.4M1304.9 291.5L1306.7 290.7M1312.9 291.7L1314.7 292.4M1310.6 294L1311.4 295.8M1307.4 294L1306.7 295.9M1305.1 291.8L1303.3 292.5M1305.1 288.6L1303.3 287.8M1307.4 286.3L1306.6 284.4M1310.6 286.2L1311.3 284.4M1312.9 288.5L1314.7 287.7M1320.9 289.4L1322.7 290.1M1318.6 291.7L1319.4 293.5M1315.4 291.7L1314.7 293.6M1313.1 289.5L1311.3 290.2M1313.1 286.2L1311.3 285.5M1315.4 283.9L1314.6 282.1M1318.6 283.9L1319.3 282.1M1320.9 286.2L1322.7 285.4M1328.9 287.5L1330.7 288.2M1326.6 289.8L1327.4 291.6M1323.4 289.8L1322.7 291.7M1321.1 287.5L1319.3 288.3M1321.1 284.3L1319.3 283.6M1323.4 282L1322.6 280.2M1326.6 282L1327.3 280.2M1328.9 284.3L1330.7 283.5M1336.9 285.6L1338.7 286.3M1334.6 287.9L1335.4 289.7M1331.4 287.9L1330.7 289.7M1329.1 285.6L1327.3 286.4M1329.1 282.4L1327.3 281.7M1331.4 280.1L1330.6 278.3M1334.6 280.1L1335.3 278.3M1336.9 282.4L1338.7 281.6M1344.9 287.1L1346.7 287.8M1342.6 289.4L1343.4 291.2M1339.4 289.4L1338.7 291.2M1337.1 287.1L1335.3 287.9M1337.1 283.9L1335.3 283.2M1339.4 281.6L1338.6 279.8M1342.6 281.6L1343.3 279.8M1344.9 283.9L1346.7 283.1M1352.9 288.6L1354.7 289.3M1350.6 290.9L1351.4 292.7M1347.4 290.9L1346.7 292.7M1345.1 288.6L1343.3 289.4M1345.1 285.4L1343.3 284.7M1347.4 283.1L1346.6 281.3M1350.6 283.1L1351.3 281.3M1352.9 285.4L1354.7 284.6M1360.9 293.5L1362.7 294.3M1358.6 295.8L1359.4 297.7M1355.4 295.8L1354.7 297.7M1353.1 293.6L1351.3 294.4M1353.1 290.4L1351.3 289.6M1355.4 288.1L1354.6 286.2M1358.6 288.1L1359.3 286.2M1360.9 290.3L1362.7 289.5M1368.9 298.5L1370.7 299.2M1366.6 300.8L1367.4 302.6M1363.4 300.8L1362.7 302.7M1361.1 298.5L1359.3 299.3M1361.1 295.3L1359.3 294.6M1363.4 293L1362.6 291.2M1366.6 293L1367.3 291.2M1368.9 295.3L1370.7 294.5M1376.9 303.6L1378.7 304.4M1374.6 305.9L1375.4 307.8M1371.4 306L1370.7 307.8M1369.1 303.7L1367.3 304.5M1369.1 300.5L1367.3 299.7M1371.4 298.2L1370.6 296.4M1374.6 298.2L1375.3 296.3M1376.9 300.4L1378.7 299.6M1384.9 309.1L1386.7 309.9M1382.6 311.4L1383.4 313.3M1379.4 311.5L1378.7 313.3M1377.1 309.2L1375.3 310M1377.1 306L1375.3 305.2M1379.4 303.7L1378.6 301.9M1382.6 303.7L1383.3 301.8M1384.9 305.9L1386.7 305.1M1392.9 313L1394.7 313.8M1390.6 315.3L1391.4 317.2M1387.4 315.4L1386.7 317.2M1385.1 313.1L1383.3 313.9M1385.1 309.9L1383.3 309.1M1387.4 307.6L1386.6 305.8M1390.6 307.6L1391.3 305.7M1392.9 309.8L1394.7 309M1400.9 314.3L1402.7 315M1398.6 316.6L1399.4 318.4M1395.4 316.6L1394.7 318.5M1393.1 314.4L1391.3 315.1M1393.1 311.1L1391.3 310.4M1395.4 308.9L1394.6 307M1398.6 308.8L1399.3 307M1400.9 311.1L1402.7 310.3M1408.9 315.5L1410.7 316.3M1406.6 317.8L1407.4 319.7M1403.4 317.9L1402.7 319.7M1401.1 315.6L1399.3 316.4M1401.1 312.4L1399.3 311.6M1403.4 310.1L1402.6 308.3M1406.6 310.1L1407.3 308.2M1408.9 312.3L1410.7 311.5M1416.9 316.8L1418.7 317.5M1414.6 319.1L1415.4 320.9M1411.4 319.1L1410.7 321M1409.1 316.9L1407.3 317.6M1409.1 313.6L1407.3 312.9M1411.4 311.4L1410.6 309.5M1414.6 311.3L1415.3 309.5M1416.9 313.6L1418.7 312.8M1424.9 317.7L1426.7 318.4M1422.6 319.9L1423.4 321.8M1419.4 320L1418.7 321.8M1417.1 317.7L1415.3 318.5M1417.1 314.5L1415.3 313.8M1419.4 312.2L1418.6 310.4M1422.6 312.2L1423.3 310.3M1424.9 314.4L1426.7 313.7M1432.9 317.9L1434.7 318.6M1430.6 320.2L1431.4 322M1427.4 320.2L1426.7 322M1425.1 317.9L1423.3 318.7M1425.1 314.7L1423.3 314M1427.4 312.4L1426.6 310.6M1430.6 312.4L1431.3 310.5M1432.9 314.7L1434.7 313.9M1440.9 318.1L1442.7 318.8M1438.6 320.4L1439.4 322.2M1435.4 320.4L1434.7 322.3M1433.1 318.2L1431.3 318.9M1433.1 314.9L1431.3 314.2M1435.4 312.6L1434.6 310.8M1438.6 312.6L1439.3 310.8M1440.9 314.9L1442.7 314.1M1448.9 318.3L1450.7 319.1M1446.6 320.6L1447.4 322.4M1443.4 320.6L1442.7 322.5M1441.1 318.4L1439.3 319.2M1441.1 315.2L1439.3 314.4M1443.4 312.9L1442.6 311M1446.6 312.8L1447.3 311M1448.9 315.1L1450.7 314.3M1456.9 318.5L1458.7 319.3M1454.6 320.8L1455.4 322.7M1451.4 320.8L1450.7 322.7M1449.1 318.6L1447.3 319.4M1449.1 315.4L1447.3 314.6M1451.4 313.1L1450.6 311.2M1454.6 313.1L1455.3 311.2M1456.9 315.3L1458.7 314.5M1464.9 318.7L1466.7 319.5M1462.6 321L1463.4 322.9M1459.4 321.1L1458.7 322.9M1457.1 318.8L1455.3 319.6M1457.1 315.6L1455.3 314.8M1459.4 313.3L1458.6 311.5M1462.6 313.3L1463.3 311.4M1464.9 315.5L1466.7 314.7M1472.9 318.9L1474.7 319.7M1470.6 321.2L1471.4 323.1M1467.4 321.3L1466.7 323.1M1465.1 319L1463.3 319.8M1465.1 315.8L1463.3 315M1467.4 313.5L1466.6 311.7M1470.6 313.5L1471.3 311.6M1472.9 315.7L1474.7 314.9M1480.9 319.2L1482.7 319.9M1478.6 321.4L1479.4 323.3M1475.4 321.5L1474.7 323.3M1473.1 319.2L1471.3 320M1473.1 316L1471.3 315.3M1475.4 313.7L1474.6 311.9M1478.6 313.7L1479.3 311.8M1480.9 315.9L1482.7 315.2M1488.9 319.4L1490.7 320.1M1486.6 321.7L1487.4 323.5M1483.4 321.7L1482.7 323.5M1481.1 319.4L1479.3 320.2M1481.1 316.2L1479.3 315.5M1483.4 313.9L1482.6 312.1M1486.6 313.9L1487.3 312M1488.9 316.1L1490.7 315.4M1496.9 319.6L1498.7 320.3M1494.6 321.9L1495.4 323.7M1491.4 321.9L1490.7 323.7M1489.1 319.6L1487.3 320.4M1489.1 316.4L1487.3 315.7M1491.4 314.1L1490.6 312.3M1494.6 314.1L1495.3 312.3M1496.9 316.4L1498.7 315.6" stroke="#ffd700" stroke-width="1.4" fill="none"/>
<path d="M13 295h0M21 302.6h0M29 310.2h0M37 317.8h0M45 325.4h0M53 332.8h0M61 339.6h0M69 346.4h0M77 353.2h0M85 359.9h0M93 366.6h0M101 373.3h0M109 380h0M117 389.8h0M125 399.6h0M133 410.1h0M141 422.3h0M149 434.2h0M157 443.5h0M165 452.8h0M173 458.5h0M181 463.7h0M189 466.9h0M197 469.5h0M205 472h0M213 470.8h0M221 469.5h0M229 468.3h0M237 466.6h0M245 464.8h0M253 462.9h0M261 461.1h0M269 459.2h0M277 457.2h0M285 455.1h0M293 453.1h0M301 451h0M309 448.6h0M317 445.8h0M325 443.1h0M333 440.5h0M341 438.7h0M349 436.8h0M357 435h0M365 436.8h0M373 438.6h0M381 444.3h0M389 451.4h0M397 458.2h0M405 465h0M413 471.8h0M421 477.7h0M429 482.4h0M437 487h0M445 491.7h0M453 497.2h0M461 503.7h0M469 510.2h0M477 516.8h0M485 524.2h0M493 531.6h0M501 539h0M509 546.3h0M517 553.5h0M525 560.1h0M533 564.3h0M541 567.7h0M549 565.1h0M557 562.6h0M565 559.2h0M573 554.5h0M581 549.8h0M589 544.7h0M597 539.5h0M605 534.3h0M613 530.5h0M621 529.2h0M629 527.8h0M637 526.5h0M645 529.1h0M653 534h0M661 538.9h0M669 543.7h0M677 548.3h0M685 553h0M693 557.3h0M701 560.1h0M709 562.9h0M717 565.7h0M725 564.7h0M733 563.2h0M741 561.7h0M749 559h0M757 555h0M765 551h0M773 545.9h0M781 537.5h0M789 529.1h0M797 520.5h0M805 511.8h0M813 503.1h0M821 491.8h0M829 480.8h0M837 471.9h0M845 463h0M853 455h0M861 447h0M869 440h0M877 436h0M885 432h0M893 428h0M901 424h0M909 420.1h0M917 416.3h0M925 412.4h0M933 407.2h0M941 401.1h0M949 393.8h0M957 385.3h0M965 378.6h0M973 374.7h0M981 370.9h0M989 367h0M997 366.1h0M1005 365.1h0M1013 364.2h0M1021 363.2h0M1029 360.5h0M1037 357.3h0M1045 354h0M1053 349.3h0M1061 344.5h0M1069 339.7h0M1077 334.5h0M1085 329.2h0M1093 324h0M1101 318.5h0M1109 312.9h0M1117 307.4h0M1125 303.8h0M1133 300.9h0M1141 298h0M1149 296.2h0M1157 294.4h0M1165 292.3h0M1173 289.4h0M1181 286.5h0M1189 285h0M1197 285h0M1205 285h0M1213 287.5h0M1221 290.5h0M1229 293.2h0M1237 295h0M1245 296.9h0M1253 298.3h0M1261 299.1h0M1269 299.9h0M1277 300.7h0M1285 299.1h0M1293 296.1h0M1301 293.1h0M1309 290.1h0M1317 287.8h0M1325 285.9h0M1333 284h0M1341 285.5h0M1349 287h0M1357 292h0M1365 296.9h0M1373 302.1h0M1381 307.6h0M1389 311.5h0M1397 312.7h0M1405 314h0M1413 315.2h0M1421 316.1h0M1429 316.3h0M1437 316.5h0M1445 316.7h0M1453 316.9h0M1461 317.2h0M1469 317.4h0M1477 317.6h0M1485 317.8h0M1493 318h0" fill="none" stroke="#5a3000" stroke-width="6.8" stroke-linecap="round"/>
<path d="M13 295h0M21 302.6h0M29 310.2h0M37 317.8h0M45 325.4h0M53 332.8h0M61 339.6h0M69 346.4h0M77 353.2h0M85 359.9h0M93 366.6h0M101 373.3h0M109 380h0M117 389.8h0M125 399.6h0M133 410.1h0M141 422.3h0M149 434.2h0M157 443.5h0M165 452.8h0M173 458.5h0M181 463.7h0M189 466.9h0M197 469.5h0M205 472h0M365 436.8h0M373 438.6h0M381 444.3h0M389 451.4h0M397 458.2h0M405 465h0M413 471.8h0M421 477.7h0M429 482.4h0M437 487h0M445 491.7h0M453 497.2h0M461 503.7h0M469 510.2h0M477 516.8h0M485 524.2h0M493 531.6h0M501 539h0M509 546.3h0M517 553.5h0M525 560.1h0M533 564.3h0M541 567.7h0M629 527.8h0M637 526.5h0M645 529.1h0M653 534h0M661 538.9h0M669 543.7h0M677 548.3h0M685 553h0M693 557.3h0M701 560.1h0M709 562.9h0M717 565.7h0M1197 285h0M1205 285h0M1213 287.5h0M1221 290.5h0M1229 293.2h0M1237 295h0M1245 296.9h0M1253 298.3h0M1261 299.1h0M1269 299.9h0M1277 300.7h0M1285 299.1h0M1349 287h0M1357 292h0M1365 296.9h0M1373 302.1h0M1381 307.6h0M1389 311.5h0M1397 312.7h0M1421 316.1h0M1429 316.3h0M1437 316.5h0M1453 316.9h0M1461 317.2h0M1469 317.4h0M1477 317.6h0M1485 317.8h0" fill="none" stroke="#ff1010" stroke-width="6" stroke-linecap="round"/>
<path d="M213 470.8h0M221 469.5h0M229 468.3h0M237 466.6h0M245 464.8h0M253 462.9h0M261 461.1h0M269 459.2h0M277 457.2h0M285 455.1h0M293 453.1h0M301 451h0M309 448.6h0M317 445.8h0M325 443.1h0M333 440.5h0M341 438.7h0M349 436.8h0M357 435h0M549 565.1h0M557 562.6h0M565 559.2h0M573 554.5h0M581 549.8h0M589 544.7h0M597 539.5h0M605 534.3h0M613 530.5h0M621 529.2h0M725 564.7h0M733 563.2h0M741 561.7h0M749 559h0M757 555h0M765 551h0M773 545.9h0M781 537.5h0M789 529.1h0M797 520.5h0M805 511.8h0M813 503.1h0M821 491.8h0M829 480.8h0M837 471.9h0M845 463h0M853 455h0M861 447h0M869 440h0M877 436h0M885 432h0M893 428h0M901 424h0M909 420.1h0M917 416.3h0M925 412.4h0M933 407.2h0M941 401.1h0M949 393.8h0M957 385.3h0M965 378.6h0M973 374.7h0M981 370.9h0M989 367h0M997 366.1h0M1005 365.1h0M1013 364.2h0M1021 363.2h0M1029 360.5h0M1037 357.3h0M1045 354h0M1053 349.3h0M1061 344.5h0M1069 339.7h0M1077 334.5h0M1085 329.2h0M1093 324h0M1101 318.5h0M1109 312.9h0M1117 307.4h0M1125 303.8h0M1133 300.9h0M1141 298h0M1149 296.2h0M1157 294.4h0M1165 292.3h0M1173 289.4h0M1181 286.5h0M1189 285h0M1293 296.1h0M1301 293.1h0M1309 290.1h0M1317 287.8h0M1325 285.9h0M1333 284h0M1341 285.5h0M1405 314h0M1413 315.2h0M1445 316.7h0M1493 318h0" fill="none" stroke="#00f0ff" stroke-width="6" stroke-linecap="round"/>
<circle cx="37" cy="307" r="3" fill="#00e000"/>
<circle cx="77" cy="336" r="3" fill="#00e000"/>
<circle cx="68" cy="411" r="3" fill="#00e000"/>
<circle cx="221" cy="369" r="3" fill="#00e000"/>
<circle cx="245" cy="444" r="3" fill="#00e000"/>
<circle cx="381" cy="542" r="3" fill="#00e000"/>
<circle cx="405" cy="463" r="3" fill="#00e000"/>
<circle cx="861" cy="363" r="3" fill="#00e000"/>
<circle cx="844" cy="393" r="3" fill="#00e000"/>
<circle cx="1101" cy="227" r="3" fill="#00e000"/>
<circle cx="1149" cy="230" r="3" fill="#00e000"/>
<circle cx="1145" cy="309" r="3" fill="#00e000"/>
<circle cx="1397" cy="245" r="3" fill="#00e000"/>
<circle cx="1460" cy="349" r="3" fill="#00e000"/>
<path d="M133 560L133 550M133 554.5L130.2 552.2M133 554.5L135.8 552.2M133 560L141.7 555M137.8 557.2L138.4 553.7M137.8 557.2L141.1 558.5M133 560L141.7 565M137.8 562.8L141.1 561.5M137.8 562.8L138.4 566.3M133 560L133 570M133 565.5L135.8 567.8M133 565.5L130.2 567.8M133 560L124.3 565M128.2 562.8L127.6 566.3M128.2 562.8L124.9 561.5M133 560L124.3 555M128.2 557.2L124.9 558.5M128.2 557.2L127.6 553.7" stroke="#00ff00" stroke-width="1.9" fill="none"/><path d="M133 554.8L134 557.6L136.7 556.3L135.4 559L138.2 560L135.4 561L136.7 563.7L134 562.4L133 565.2L132 562.4L129.3 563.7L130.6 561L127.8 560L130.6 559L129.3 556.3L132 557.6z" fill="#ffd800"/><circle cx="133" cy="560" r="2.9" fill="#00f000"/>
<path d="M317 335L317 325M317 329.5L314.2 327.2M317 329.5L319.8 327.2M317 335L325.7 330M321.8 332.2L322.4 328.7M321.8 332.2L325.1 333.5M317 335L325.7 340M321.8 337.8L325.1 336.5M321.8 337.8L322.4 341.3M317 335L317 345M317 340.5L319.8 342.8M317 340.5L314.2 342.8M317 335L308.3 340M312.2 337.8L311.6 341.3M312.2 337.8L308.9 336.5M317 335L308.3 330M312.2 332.2L308.9 333.5M312.2 332.2L311.6 328.7" stroke="#ff9a00" stroke-width="2.6" fill="none" opacity=".55"/><path d="M317 335L317 325M317 329.5L314.2 327.2M317 329.5L319.8 327.2M317 335L325.7 330M321.8 332.2L322.4 328.7M321.8 332.2L325.1 333.5M317 335L325.7 340M321.8 337.8L325.1 336.5M321.8 337.8L322.4 341.3M317 335L317 345M317 340.5L319.8 342.8M317 340.5L314.2 342.8M317 335L308.3 340M312.2 337.8L311.6 341.3M312.2 337.8L308.9 336.5M317 335L308.3 330M312.2 332.2L308.9 333.5M312.2 332.2L311.6 328.7" stroke="#ffee00" stroke-width="1.5" fill="none"/><circle cx="317" cy="335" r="2.4" fill="#00d800"/>
<path d="M508 610L508 600M508 604.5L505.2 602.2M508 604.5L510.8 602.2M508 610L516.7 605M512.8 607.2L513.4 603.7M512.8 607.2L516.1 608.5M508 610L516.7 615M512.8 612.8L516.1 611.5M512.8 612.8L513.4 616.3M508 610L508 620M508 615.5L510.8 617.8M508 615.5L505.2 617.8M508 610L499.3 615M503.2 612.8L502.6 616.3M503.2 612.8L499.9 611.5M508 610L499.3 605M503.2 607.2L499.9 608.5M503.2 607.2L502.6 603.7" stroke="#00ff00" stroke-width="1.9" fill="none"/><path d="M508 604.8L509 607.6L511.7 606.3L510.4 609L513.2 610L510.4 611L511.7 613.7L509 612.4L508 615.2L507 612.4L504.3 613.7L505.6 611L502.8 610L505.6 609L504.3 606.3L507 607.6z" fill="#ffd800"/><circle cx="508" cy="610" r="2.9" fill="#00f000"/>
<path d="M573 415.2L574.8 418.6L578.5 417.5L577.4 421.2L580.8 423L577.4 424.8L578.5 428.5L574.8 427.4L573 430.8L571.2 427.4L567.5 428.5L568.6 424.8L565.2 423L568.6 421.2L567.5 417.5L571.2 418.6z" fill="#ffee00" stroke="#ff9a00" stroke-width=".5"/><circle cx="573" cy="423" r="4.2" fill="#2a1800"/><circle cx="573" cy="423" r="3.2" fill="#00d800"/>
<path d="M668 592.2L669.8 595.6L673.5 594.5L672.4 598.2L675.8 600L672.4 601.8L673.5 605.5L669.8 604.4L668 607.8L666.2 604.4L662.5 605.5L663.6 601.8L660.2 600L663.6 598.2L662.5 594.5L666.2 595.6z" fill="#ffee00" stroke="#ff9a00" stroke-width=".5"/><circle cx="668" cy="600" r="4.2" fill="#2a1800"/><circle cx="668" cy="600" r="3.2" fill="#00d800"/>
<path d="M797 346.2L798.8 349.6L802.5 348.5L801.4 352.2L804.8 354L801.4 355.8L802.5 359.5L798.8 358.4L797 361.8L795.2 358.4L791.5 359.5L792.6 355.8L789.2 354L792.6 352.2L791.5 348.5L795.2 349.6z" fill="#ffee00" stroke="#ff9a00" stroke-width=".5"/><circle cx="797" cy="354" r="4.2" fill="#2a1800"/><circle cx="797" cy="354" r="3.2" fill="#00d800"/>
<path d="M877 453.2L878.8 456.6L882.5 455.5L881.4 459.2L884.8 461L881.4 462.8L882.5 466.5L878.8 465.4L877 468.8L875.2 465.4L871.5 466.5L872.6 462.8L869.2 461L872.6 459.2L871.5 455.5L875.2 456.6z" fill="#ffee00" stroke="#ff9a00" stroke-width=".5"/><circle cx="877" cy="461" r="4.2" fill="#2a1800"/><circle cx="877" cy="461" r="3.2" fill="#00d800"/>
<path d="M941 279.2L942.8 282.6L946.5 281.5L945.4 285.2L948.8 287L945.4 288.8L946.5 292.5L942.8 291.4L941 294.8L939.2 291.4L935.5 292.5L936.6 288.8L933.2 287L936.6 285.2L935.5 281.5L939.2 282.6z" fill="#ffee00" stroke="#ff9a00" stroke-width=".5"/><circle cx="941" cy="287" r="4.2" fill="#2a1800"/><circle cx="941" cy="287" r="3.2" fill="#00d800"/>
<path d="M1004 402.2L1005.8 405.6L1009.5 404.5L1008.4 408.2L1011.8 410L1008.4 411.8L1009.5 415.5L1005.8 414.4L1004 417.8L1002.2 414.4L998.5 415.5L999.6 411.8L996.2 410L999.6 408.2L998.5 404.5L1002.2 405.6z" fill="#ffee00" stroke="#ff9a00" stroke-width=".5"/><circle cx="1004" cy="410" r="4.2" fill="#2a1800"/><circle cx="1004" cy="410" r="3.2" fill="#00d800"/>
<path d="M1157 210.2L1158.8 213.6L1162.5 212.5L1161.4 216.2L1164.8 218L1161.4 219.8L1162.5 223.5L1158.8 222.4L1157 225.8L1155.2 222.4L1151.5 223.5L1152.6 219.8L1149.2 218L1152.6 216.2L1151.5 212.5L1155.2 213.6z" fill="#ffee00" stroke="#ff9a00" stroke-width=".5"/><circle cx="1157" cy="218" r="4.2" fill="#2a1800"/><circle cx="1157" cy="218" r="3.2" fill="#00d800"/>
<path d="M1221 347.2L1222.8 350.6L1226.5 349.5L1225.4 353.2L1228.8 355L1225.4 356.8L1226.5 360.5L1222.8 359.4L1221 362.8L1219.2 359.4L1215.5 360.5L1216.6 356.8L1213.2 355L1216.6 353.2L1215.5 349.5L1219.2 350.6z" fill="#ffee00" stroke="#ff9a00" stroke-width=".5"/><circle cx="1221" cy="355" r="4.2" fill="#2a1800"/><circle cx="1221" cy="355" r="3.2" fill="#00d800"/>
<path d="M1309 110L1309 100M1309 104.5L1306.2 102.2M1309 104.5L1311.8 102.2M1309 110L1317.7 105M1313.8 107.2L1314.4 103.7M1313.8 107.2L1317.1 108.5M1309 110L1317.7 115M1313.8 112.8L1317.1 111.5M1313.8 112.8L1314.4 116.3M1309 110L1309 120M1309 115.5L1311.8 117.8M1309 115.5L1306.2 117.8M1309 110L1300.3 115M1304.2 112.8L1303.6 116.3M1304.2 112.8L1300.9 111.5M1309 110L1300.3 105M1304.2 107.2L1300.9 108.5M1304.2 107.2L1303.6 103.7" stroke="#ff9a00" stroke-width="2.6" fill="none" opacity=".55"/><path d="M1309 110L1309 100M1309 104.5L1306.2 102.2M1309 104.5L1311.8 102.2M1309 110L1317.7 105M1313.8 107.2L1314.4 103.7M1313.8 107.2L1317.1 108.5M1309 110L1317.7 115M1313.8 112.8L1317.1 111.5M1313.8 112.8L1314.4 116.3M1309 110L1309 120M1309 115.5L1311.8 117.8M1309 115.5L1306.2 117.8M1309 110L1300.3 115M1304.2 112.8L1303.6 116.3M1304.2 112.8L1300.9 111.5M1309 110L1300.3 105M1304.2 107.2L1300.9 108.5M1304.2 107.2L1303.6 103.7" stroke="#ffee00" stroke-width="1.5" fill="none"/><circle cx="1309" cy="110" r="2.4" fill="#00d800"/>
<path d="M1341 385L1341 375M1341 379.5L1338.2 377.2M1341 379.5L1343.8 377.2M1341 385L1349.7 380M1345.8 382.2L1346.4 378.7M1345.8 382.2L1349.1 383.5M1341 385L1349.7 390M1345.8 387.8L1349.1 386.5M1345.8 387.8L1346.4 391.3M1341 385L1341 395M1341 390.5L1343.8 392.8M1341 390.5L1338.2 392.8M1341 385L1332.3 390M1336.2 387.8L1335.6 391.3M1336.2 387.8L1332.9 386.5M1341 385L1332.3 380M1336.2 382.2L1332.9 383.5M1336.2 382.2L1335.6 378.7" stroke="#00ff00" stroke-width="1.9" fill="none"/><path d="M1341 379.8L1342 382.6L1344.7 381.3L1343.4 384L1346.2 385L1343.4 386L1344.7 388.7L1342 387.4L1341 390.2L1340 387.4L1337.3 388.7L1338.6 386L1335.8 385L1338.6 384L1337.3 381.3L1340 382.6z" fill="#ffd800"/><circle cx="1341" cy="385" r="2.9" fill="#00f000"/>
<path d="M1493 182.2L1494.8 185.6L1498.5 184.5L1497.4 188.2L1500.8 190L1497.4 191.8L1498.5 195.5L1494.8 194.4L1493 197.8L1491.2 194.4L1487.5 195.5L1488.6 191.8L1485.2 190L1488.6 188.2L1487.5 184.5L1491.2 185.6z" fill="#ffee00" stroke="#ff9a00" stroke-width=".5"/><circle cx="1493" cy="190" r="4.2" fill="#2a1800"/><circle cx="1493" cy="190" r="3.2" fill="#00d800"/></g><g clip-path="url(#cs)"><line x1="13" y1="651.5" x2="1881" y2="651.5" stroke="#e0e0e0" stroke-width="1" stroke-dasharray="3 3"/>
<line x1="13" y1="693.5" x2="1881" y2="693.5" stroke="#e0e0e0" stroke-width="1" stroke-dasharray="3 3"/>
<line x1="13" y1="706.5" x2="1881" y2="706.5" stroke="#e0e0e0" stroke-width="1" stroke-dasharray="3 3"/>
<line x1="13" y1="773.5" x2="1881" y2="773.5" stroke="#e0e0e0" stroke-width="1" stroke-dasharray="3 3"/>
<line x1="13" y1="780.5" x2="1881" y2="780.5" stroke="#e0e0e0" stroke-width="1" stroke-dasharray="3 3"/>
<polyline points="13,809.7 26,747.2 37.8,688.6 46.9,727.7 54.7,739.4 69,807.1 80.7,760.2 85.9,747.2 96.4,768 106.8,752.4 117.2,827.9 127.6,831 140.6,824 156.2,775.8 165.4,692.5 173.2,640.4 182.3,638.3 190.1,645.6 198.4,665.2 205.7,661.2 213.5,666.5 224,691.2 234.4,718.5 244.8,753.7 252.6,826.6 268.2,826.6 276,739.4 283.9,700.3 294.3,679.5 302.1,676.9 308.6,649.5 316.4,647.7 322.9,682.1 330.7,729 341.1,742 356.8,794.1 367.2,795.4 380.2,801.9 395.8,775.8 414.1,662.6 421.9,695.1 429.7,742 442.7,792.8 453.1,795.4 463.5,786.2 477.9,825.3 489.6,801.9 508.2,729 518.6,695.1 531.7,663.9 539.5,658.6 549.9,633.1 557.7,648.2 565.5,673 581.1,700.3 594.2,729 604.6,732.9 609.8,775.8 613.7,831.8 644.9,831.8 654.1,821.4 667.1,815.4 677.5,814.9 681.4,747.2 685.3,679.5 693.1,676.9 702.2,654.7 711.4,633.1 725.7,633.1 732.2,650.8 746.5,649.5 755.6,657.3 763.4,650.8 775.2,654.7 789.5,648.8 799.9,648.8 805.1,652.1 812.9,633.9 822,633.9 825.9,663.9 831.1,708.1 837.7,768 844.2,744.6 854.6,728.4 865,728.4 874.1,762.8 885.8,800.6 892.3,762.8 901.5,768 909.3,734.2 917.1,648.2 941.8,646.9 945.7,676.9 958.8,689.9 966.6,739.4 974.4,809.7 980.9,827.9 996.9,827.9 1012.6,794.1 1021.7,734.2 1032.1,708.1 1045.1,633.9 1060.7,633.9 1065.9,682.1 1076.4,762.8 1084.2,768 1092,718.5 1102.4,674.3 1109.4,644.3 1114.1,689.9 1125.8,749.8 1136.2,812.3 1141.5,831.8 1146.7,760.2 1157.1,645.6 1164.9,669.1 1174,671.7 1180.5,734.2 1190.9,807.1 1198.8,831.8 1230,831.8 1237.8,807.1 1243,718.5 1250.8,682.1 1266.5,662.6 1276.9,657.3 1289.9,674.3 1299,700.3 1309.4,679.5 1318.5,686 1326.4,739.4 1336.8,762.8 1344.6,768 1352.4,788.9 1360.2,778.4 1370.6,729 1381,666.5 1390.2,673 1396.7,669.1 1404.5,684.7 1421.4,686 1429.2,708.1 1438.3,786.2 1451.4,744.6 1461.8,791.5 1469.6,800.6 1474.8,775.8 1480,729 1485,687 1494,690" fill="none" stroke="#ffff00" stroke-width="1.1" stroke-dasharray="3 3"/>
<path d="M20 743.5h3V771.9h-3zM28 743.5h3V769.2h-3zM36 743.5h3V767h-3zM44 743.5h3V771h-3zM52 743.5h3V772.2h-3zM60 743.5h3V772.5h-3zM68 743.5h3V772.8h-3zM76 743.5h3V773.2h-3zM84 743.5h3V776.1h-3zM92 743.5h3V779.4h-3zM100 743.5h3V779.7h-3zM108 743.5h3V779.7h-3zM116 743.5h3V784.1h-3zM124 743.5h3V791.8h-3zM132 743.5h3V800.5h-3zM140 743.5h3V796.3h-3zM148 743.5h3V788.3h-3zM156 743.5h3V786.2h-3zM164 743.5h3V786.2h-3zM172 743.5h3V779.4h-3zM180 743.5h3V770.7h-3zM188 743.5h3V770.4h-3zM196 743.5h3V771.8h-3zM204 743.5h3V768h-3zM212 743.5h3V763.6h-3zM220 743.5h3V763.3h-3zM228 743.5h3V765.9h-3zM236 743.5h3V770h-3zM244 743.5h3V772.4h-3zM252 743.5h3V771.5h-3zM260 743.5h3V770.6h-3zM268 743.5h3V770.4h-3zM276 743.5h3V770.1h-3zM284 743.5h3V769.9h-3zM292 743.5h3V767.6h-3zM300 743.5h3V764.8h-3zM308 743.5h3V762h-3zM316 743.5h3V759.7h-3zM324 743.5h3V763.8h-3zM332 743.5h3V767.9h-3zM340 743.5h3V768h-3zM348 743.5h3V768.1h-3zM356 743.5h3V774.6h-3zM364 743.5h3V781.2h-3zM372 743.5h3V787.7h-3zM380 743.5h3V789.4h-3zM388 743.5h3V786.5h-3zM396 743.5h3V782.7h-3zM404 743.5h3V779h-3zM412 743.5h3V781.1h-3zM420 743.5h3V783.3h-3zM428 743.5h3V784.4h-3zM436 743.5h3V782h-3zM444 743.5h3V782.3h-3zM452 743.5h3V784.3h-3zM460 743.5h3V786.3h-3zM468 743.5h3V791h-3zM476 743.5h3V795.3h-3zM484 743.5h3V793.3h-3zM492 743.5h3V791.4h-3zM500 743.5h3V791.6h-3zM508 743.5h3V793.4h-3zM516 743.5h3V790.4h-3zM524 743.5h3V786.1h-3zM532 743.5h3V775.8h-3zM540 743.5h3V765.5h-3zM548 743.5h3V762.9h-3zM556 743.5h3V762.9h-3zM564 743.5h3V764h-3zM572 743.5h3V758.1h-3zM580 743.5h3V756.5h-3zM588 743.5h3V757.2h-3zM596 743.5h3V760.1h-3zM604 743.5h3V763.1h-3zM612 743.5h3V769.1h-3zM620 743.5h3V775h-3zM628 743.5h3V777.6h-3zM636 743.5h3V781.9h-3zM644 743.5h3V786.8h-3zM652 743.5h3V788.2h-3zM660 743.5h3V789.9h-3zM668 743.5h3V791.5h-3zM676 743.5h3V791.5h-3zM684 743.5h3V778.6h-3zM692 743.5h3V780h-3zM700 743.5h3V780.5h-3zM708 743.5h3V777.2h-3zM716 743.5h3V765h-3zM724 743.5h3V762h-3zM732 743.5h3V760.5h-3zM740 743.5h3V757.6h-3zM748 743.5h3V754.3h-3zM756 743.5h3V747.6h-3z" fill="#ff0000" shape-rendering="crispEdges"/>
<path d="M812 743.5h3V705.9h-3zM820 743.5h3V705.5h-3zM828 743.5h3V709.5h-3zM836 743.5h3V709.9h-3zM844 743.5h3V708.4h-3zM852 743.5h3V706.7h-3zM860 743.5h3V706.3h-3zM868 743.5h3V712.6h-3zM876 743.5h3V723.6h-3zM884 743.5h3V721.6h-3zM892 743.5h3V709.2h-3zM900 743.5h3V705.9h-3zM908 743.5h3V703.1h-3zM916 743.5h3V699.1h-3zM924 743.5h3V695h-3zM932 743.5h3V687h-3zM940 743.5h3V679.9h-3zM948 743.5h3V687.2h-3zM956 743.5h3V687.8h-3zM964 743.5h3V691.6h-3zM972 743.5h3V703.7h-3zM980 743.5h3V706h-3zM988 743.5h3V711h-3zM996 743.5h3V712.8h-3zM1004 743.5h3V713.7h-3zM1012 743.5h3V711.1h-3zM1020 743.5h3V705.2h-3zM1028 743.5h3V698.3h-3zM1036 743.5h3V691.4h-3zM1044 743.5h3V691.2h-3zM1052 743.5h3V691.2h-3zM1060 743.5h3V692.4h-3zM1068 743.5h3V694.1h-3zM1076 743.5h3V694.6h-3zM1084 743.5h3V694.6h-3zM1092 743.5h3V690.8h-3zM1100 743.5h3V686h-3zM1108 743.5h3V686.9h-3zM1116 743.5h3V697.6h-3zM1124 743.5h3V699h-3zM1132 743.5h3V702h-3zM1140 743.5h3V705.3h-3zM1148 743.5h3V699.2h-3zM1156 743.5h3V692.6h-3zM1164 743.5h3V692.5h-3zM1172 743.5h3V697.5h-3zM1180 743.5h3V703.7h-3zM1188 743.5h3V709.6h-3zM1196 743.5h3V712.4h-3zM1204 743.5h3V715.8h-3zM1212 743.5h3V719.1h-3zM1220 743.5h3V722.4h-3zM1228 743.5h3V722.4h-3zM1236 743.5h3V720.1h-3zM1244 743.5h3V713.9h-3zM1252 743.5h3V712.8h-3zM1260 743.5h3V714.6h-3zM1268 743.5h3V708.2h-3zM1276 743.5h3V701.6h-3zM1284 743.5h3V701h-3zM1292 743.5h3V706.3h-3zM1300 743.5h3V706.8h-3zM1308 743.5h3V684.7h-3zM1316 743.5h3V683.4h-3zM1324 743.5h3V703.3h-3zM1332 743.5h3V721.9h-3zM1340 743.5h3V738.9h-3zM1348 743.5h3V727.5h-3zM1356 743.5h3V732.6h-3zM1364 743.5h3V739.5h-3zM1372 743.5h3V739.9h-3zM1380 743.5h3V730.2h-3zM1388 743.5h3V720.3h-3zM1396 743.5h3V715.7h-3zM1404 743.5h3V721h-3zM1412 743.5h3V721.7h-3zM1420 743.5h3V718.1h-3zM1428 743.5h3V717.2h-3zM1436 743.5h3V726.8h-3zM1444 743.5h3V726.9h-3zM1452 743.5h3V725.4h-3zM1460 743.5h3V734.6h-3zM1468 743.5h3V735.5h-3zM1476 743.5h3V725.6h-3zM1484 743.5h3V713.6h-3zM1492 743.5h3V692.8h-3z" fill="#32cd32" shape-rendering="crispEdges"/>
<path d="M780 743.5h3V731.7h-3zM788 743.5h3V721.7h-3zM796 743.5h3V706.9h-3z" fill="#fff" shape-rendering="crispEdges"/>
<path d="M804 743.5h3V708.1h-3z" fill="#ffff00" shape-rendering="crispEdges"/>
<line x1="13" y1="743.5" x2="1494" y2="743.5" stroke="#ffa500" stroke-width="1.6"/>
<polyline points="13,774.5 36.5,766.7 46.9,771.9 78.1,773.2 93.8,779.7 112,779.7 122.4,788.9 132.8,800.6 140.6,796.7 151,786.2 166.7,786.2 182.3,769.3 197.9,771.9 213.5,763.3 224,763.3 242.2,772.7 260.4,770.6 286.5,769.8 316.4,759.4 333.3,768 349,768 375,789.4 382.8,789.4 404.9,779 427.1,784.9 440.1,781 460.9,786.2 476.6,795.4 494.8,790.9 500.4,791.5 509.5,793.5 523.9,787.6 542.1,764.1 552.5,762.3 565.5,764.1 574.6,756.8 586.4,756.3 604.6,762.8 622.8,776.4 630.6,777.9 644.9,786.8 656.7,788.9 667.1,791.5 677.5,791.5 684,778.4 695.7,780.5 703.5,780.5 711.4,775.8 717.9,763.3 734.8,760.2 750.4,753.7 758.2,746.4 771.2,742 779.1,734.2 789.5,721.1 797.3,706.3 805.1,708.1 814.2,705.5 822,705.5 829.8,709.9 839,709.9 849.4,707.3 859.8,705.5 867.6,710.7 878,725.1 885.8,721.1 893.6,708.1 906.7,704.2 924.9,695.1 940.5,679.5 949.6,687.8 958.8,687.8 966.6,692.5 974.4,706 982.2,706 990.4,712 1006,713.9 1015.2,710.2 1037.3,691.2 1055.5,691.2 1071.1,694.6 1086.8,694.6 1101.1,686 1108.9,686.8 1118,699 1125.8,699 1141.5,705.5 1157.1,692.5 1166.2,692.5 1174,698.2 1188.3,709.4 1196.1,712 1220.9,722.4 1228.7,722.4 1237.8,719.8 1245.6,713.3 1253.4,712.8 1261.2,714.6 1276.9,701.6 1284.7,700.8 1293.8,706.8 1301.6,706.8 1309.4,683.4 1317.2,683.4 1326.4,706.8 1340.7,739.4 1349.8,726.4 1365.4,739.9 1373.2,739.9 1391.5,717.2 1398,715.4 1405.8,721.7 1413.6,721.7 1422.7,717.2 1429.2,717.2 1438.3,728.4 1452.7,725.1 1461.8,735.5 1469.6,735.5 1480,721.7 1486,712 1494,690" fill="none" stroke="#ffc800" stroke-width="2.2" stroke-linejoin="round"/>
<polyline points="13,784.9 36.5,770.6 46.9,776.4 59.9,774.5 69,779 83.3,775.8 99,786.2 112,786.2 132.8,822.7 149.7,790.9 165.4,790.9 181.5,752.4 197.1,762.8 213.5,740.7 221.4,736.8 230.5,740.7 243.5,757.6 260.4,746.7 269.5,750.3 276,742 286.5,742 308.6,704.2 317.2,695.6 332,729 341.1,732.9 349,725.1 356.8,744.6 372.9,807.9 381.5,807.9 390.6,786.2 405.7,777.1 421.9,795.4 429.7,798 440.1,788.9 460.9,789.4 476.6,804 494.8,787.6 500.4,784.9 509.5,789.4 523.9,778.4 540.8,732.9 548.6,728.4 559,734.7 565.5,734.7 573.3,718.5 581.1,716.7 589,718 604.6,726.4 621.5,750.3 629.3,752.4 646.2,774.5 654.1,773.2 667.1,779.2 672.3,779.2 677.5,775.8 685.3,751.1 695.7,757.6 703.5,758.9 711.4,752.4 717.9,731 733.5,730.3 750.4,723.8 758.2,714.6 766,713.3 773.9,710.2 797.3,673.8 805.1,683.4 814.2,685.2 822,689.4 836.4,701.6 849.4,703.4 859.8,704.2 867.6,710.7 878,725.1 885.8,723.8 893.6,713.9 906.7,713.3 927.5,705.5 940.5,694.6 949.6,700.8 958.8,700.8 966.6,705.5 974.4,719.8 982.2,719.8 990.4,729 1004.7,734.7 1012.6,728.4 1037.3,684.7 1045.1,689.4 1054.2,689.4 1076.4,701.6 1085.5,701.6 1101.1,685.2 1108.9,686.8 1116.7,715.4 1124.5,715.4 1140.7,725.8 1157.1,691.2 1166.2,691.2 1174,699 1189.6,737.3 1197.4,741.5 1205.3,758.9 1213.1,762.8 1221.7,772.7 1237.8,756.3 1245.6,734.2 1253.4,736.2 1261.2,744.6 1277.7,689.4 1286,692.5 1293.8,715.9 1301.6,715.9 1309.4,644.3 1317.8,652.1 1341.2,803.2 1349.3,770.1 1357.6,784.9 1365.4,792.8 1373.2,792.8 1390.2,739.4 1398,732.1 1405.8,747.7 1413.6,747.7 1422.7,735.5 1429.2,734.7 1438.3,757.6 1452.7,744.6 1461.8,765.9 1469.6,765.9 1480,738.1 1486,715 1494,688" fill="none" stroke="#ff00ff" stroke-width="2.2" stroke-linejoin="round"/>
<circle cx="37" cy="713" r="3.6" fill="#ff0000"/>
<circle cx="77" cy="722.7" r="3.6" fill="#ff0000"/>
<circle cx="69" cy="750" r="3.6" fill="#00e000"/>
<circle cx="221" cy="734" r="3.6" fill="#ff0000"/>
<circle cx="245" cy="762" r="3.6" fill="#00e000"/>
<circle cx="133" cy="806" r="9.3" fill="none" stroke="#00d000" stroke-width="1.4"/><path d="M139.6 806L140.8 806M138.7 809.3L139.8 809.9M136.3 811.7L136.9 812.8M133 812.6L133 813.8M129.7 811.7L129.1 812.8M127.3 809.3L126.2 809.9M126.4 806L125.2 806M127.3 802.7L126.2 802.1M129.7 800.3L129.1 799.2M133 799.4L133 798.2M136.3 800.3L136.9 799.2M138.7 802.7L139.8 802.1" stroke="#00c000" stroke-width="1" fill="none"/>
<path d="M135.4 800.3L135.4 803.6L138.7 803.6L136.4 806L138.7 808.4L135.4 808.4L135.4 811.7L133 809.4L130.6 811.7L130.6 808.4L127.3 808.4L129.6 806L127.3 803.6L130.6 803.6L130.6 800.3L133 802.6z" fill="#fff000" stroke="#ffc800" stroke-width=".4"/><path d="M135.6 806h.1M134.8 807.8h.1M133 808.6h.1M131.2 807.8h.1M130.4 806h.1M131.2 804.2h.1M133 803.4h.1M134.8 804.2h.1" stroke="#ff3000" stroke-width="1.1" stroke-linecap="round" fill="none"/>
<path d="M133 800V806H138.5" stroke="#00d000" stroke-width="1.3" fill="none"/>
<circle cx="317" cy="723" r="9.3" fill="none" stroke="#00d000" stroke-width="1.4"/><path d="M323.6 723L324.8 723M322.7 726.3L323.8 726.9M320.3 728.7L320.9 729.8M317 729.6L317 730.8M313.7 728.7L313.1 729.8M311.3 726.3L310.2 726.9M310.4 723L309.2 723M311.3 719.7L310.2 719.1M313.7 717.3L313.1 716.2M317 716.4L317 715.2M320.3 717.3L320.9 716.2M322.7 719.7L323.8 719.1" stroke="#00c000" stroke-width="1" fill="none"/>
<path d="M319.4 717.3L319.4 720.6L322.7 720.6L320.4 723L322.7 725.4L319.4 725.4L319.4 728.7L317 726.4L314.6 728.7L314.6 725.4L311.3 725.4L313.6 723L311.3 720.6L314.6 720.6L314.6 717.3L317 719.6z" fill="#fff000" stroke="#ffc800" stroke-width=".4"/><path d="M319.6 723h.1M318.8 724.8h.1M317 725.6h.1M315.2 724.8h.1M314.4 723h.1M315.2 721.2h.1M317 720.4h.1M318.8 721.2h.1" stroke="#ff3000" stroke-width="1.1" stroke-linecap="round" fill="none"/>
<path d="M317 717V723H322.5" stroke="#00d000" stroke-width="1.3" fill="none"/>
<circle cx="405" cy="767.5" r="3.6" fill="#ff0000"/>
<circle cx="381" cy="796.7" r="3.6" fill="#00e000"/>
<circle cx="508.8" cy="822" r="9.3" fill="none" stroke="#00d000" stroke-width="1.4"/><path d="M515.4 822L516.6 822M514.5 825.3L515.6 825.9M512.1 827.7L512.7 828.8M508.8 828.6L508.8 829.8M505.5 827.7L504.9 828.8M503.1 825.3L502 825.9M502.2 822L501 822M503.1 818.7L502 818.1M505.5 816.3L504.9 815.2M508.8 815.4L508.8 814.2M512.1 816.3L512.7 815.2M514.5 818.7L515.6 818.1" stroke="#00c000" stroke-width="1" fill="none"/>
<path d="M511.2 816.3L511.2 819.6L514.5 819.6L512.2 822L514.5 824.4L511.2 824.4L511.2 827.7L508.8 825.4L506.4 827.7L506.4 824.4L503.1 824.4L505.4 822L503.1 819.6L506.4 819.6L506.4 816.3L508.8 818.6z" fill="#fff000" stroke="#ffc800" stroke-width=".4"/><path d="M511.4 822h.1M510.6 823.8h.1M508.8 824.6h.1M507 823.8h.1M506.2 822h.1M507 820.2h.1M508.8 819.4h.1M510.6 820.2h.1" stroke="#ff3000" stroke-width="1.1" stroke-linecap="round" fill="none"/>
<path d="M508.8 816V822H514.3" stroke="#00d000" stroke-width="1.3" fill="none"/>
<path d="M575.4 749.3L575.4 752.6L578.7 752.6L576.4 755L578.7 757.4L575.4 757.4L575.4 760.7L573 758.4L570.6 760.7L570.6 757.4L567.3 757.4L569.6 755L567.3 752.6L570.6 752.6L570.6 749.3L573 751.6z" fill="#fff000" stroke="#ffc800" stroke-width=".4"/><path d="M575.6 755h.1M574.8 756.8h.1M573 757.6h.1M571.2 756.8h.1M570.4 755h.1M571.2 753.2h.1M573 752.4h.1M574.8 753.2h.1" stroke="#ff3000" stroke-width="1.1" stroke-linecap="round" fill="none"/>
<path d="M671.4 813.3L671.4 816.6L674.7 816.6L672.4 819L674.7 821.4L671.4 821.4L671.4 824.7L669 822.4L666.6 824.7L666.6 821.4L663.3 821.4L665.6 819L663.3 816.6L666.6 816.6L666.6 813.3L669 815.6z" fill="#fff000" stroke="#ffc800" stroke-width=".4"/><path d="M671.6 819h.1M670.8 820.8h.1M669 821.6h.1M667.2 820.8h.1M666.4 819h.1M667.2 817.2h.1M669 816.4h.1M670.8 817.2h.1" stroke="#ff3000" stroke-width="1.1" stroke-linecap="round" fill="none"/>
<path d="M799.4 725.3L799.4 728.6L802.7 728.6L800.4 731L802.7 733.4L799.4 733.4L799.4 736.7L797 734.4L794.6 736.7L794.6 733.4L791.3 733.4L793.6 731L791.3 728.6L794.6 728.6L794.6 725.3L797 727.6z" fill="#fff000" stroke="#ffc800" stroke-width=".4"/><path d="M799.6 731h.1M798.8 732.8h.1M797 733.6h.1M795.2 732.8h.1M794.4 731h.1M795.2 729.2h.1M797 728.4h.1M798.8 729.2h.1" stroke="#ff3000" stroke-width="1.1" stroke-linecap="round" fill="none"/>
<circle cx="844.7" cy="744" r="3.6" fill="#00e000"/>
<circle cx="861" cy="732" r="3.6" fill="#ff0000"/>
<path d="M879.9 763.3L879.9 766.6L883.2 766.6L880.9 769L883.2 771.4L879.9 771.4L879.9 774.7L877.5 772.4L875.1 774.7L875.1 771.4L871.8 771.4L874.1 769L871.8 766.6L875.1 766.6L875.1 763.3L877.5 765.6z" fill="#fff000" stroke="#ffc800" stroke-width=".4"/><path d="M880.1 769h.1M879.3 770.8h.1M877.5 771.6h.1M875.7 770.8h.1M874.9 769h.1M875.7 767.2h.1M877.5 766.4h.1M879.3 767.2h.1" stroke="#ff3000" stroke-width="1.1" stroke-linecap="round" fill="none"/>
<path d="M943.4 700.3L943.4 703.6L946.7 703.6L944.4 706L946.7 708.4L943.4 708.4L943.4 711.7L941 709.4L938.6 711.7L938.6 708.4L935.3 708.4L937.6 706L935.3 703.6L938.6 703.6L938.6 700.3L941 702.6z" fill="#fff000" stroke="#ffc800" stroke-width=".4"/><path d="M943.6 706h.1M942.8 707.8h.1M941 708.6h.1M939.2 707.8h.1M938.4 706h.1M939.2 704.2h.1M941 703.4h.1M942.8 704.2h.1" stroke="#ff3000" stroke-width="1.1" stroke-linecap="round" fill="none"/>
<path d="M1007.1 745.3L1007.1 748.6L1010.4 748.6L1008.1 751L1010.4 753.4L1007.1 753.4L1007.1 756.7L1004.7 754.4L1002.3 756.7L1002.3 753.4L999 753.4L1001.3 751L999 748.6L1002.3 748.6L1002.3 745.3L1004.7 747.6z" fill="#fff000" stroke="#ffc800" stroke-width=".4"/><path d="M1007.3 751h.1M1006.5 752.8h.1M1004.7 753.6h.1M1002.9 752.8h.1M1002.1 751h.1M1002.9 749.2h.1M1004.7 748.4h.1M1006.5 749.2h.1" stroke="#ff3000" stroke-width="1.1" stroke-linecap="round" fill="none"/>
<path d="M1103.4 677.3L1103.4 680.6L1106.7 680.6L1104.4 683L1106.7 685.4L1103.4 685.4L1103.4 688.7L1101 686.4L1098.6 688.7L1098.6 685.4L1095.3 685.4L1097.6 683L1095.3 680.6L1098.6 680.6L1098.6 677.3L1101 679.6z" fill="#fff000" stroke="#ffc800" stroke-width=".4"/><path d="M1103.6 683h.1M1102.8 684.8h.1M1101 685.6h.1M1099.2 684.8h.1M1098.4 683h.1M1099.2 681.2h.1M1101 680.4h.1M1102.8 681.2h.1" stroke="#ff3000" stroke-width="1.1" stroke-linecap="round" fill="none"/>
<circle cx="1149" cy="684.7" r="3.6" fill="#ff0000"/>
<path d="M1160 675.1L1160 678.4L1163.3 678.4L1161 680.8L1163.3 683.2L1160 683.2L1160 686.5L1157.6 684.2L1155.2 686.5L1155.2 683.2L1151.9 683.2L1154.2 680.8L1151.9 678.4L1155.2 678.4L1155.2 675.1L1157.6 677.4z" fill="#fff000" stroke="#ffc800" stroke-width=".4"/><path d="M1160.2 680.8h.1M1159.4 682.6h.1M1157.6 683.4h.1M1155.8 682.6h.1M1155 680.8h.1M1155.8 679h.1M1157.6 678.2h.1M1159.4 679h.1" stroke="#ff3000" stroke-width="1.1" stroke-linecap="round" fill="none"/>
<circle cx="1141" cy="713" r="3.6" fill="#00e000"/>
<path d="M1152.2 711.3L1152.2 714.6L1155.5 714.6L1153.2 717L1155.5 719.4L1152.2 719.4L1152.2 722.7L1149.8 720.4L1147.4 722.7L1147.4 719.4L1144.1 719.4L1146.4 717L1144.1 714.6L1147.4 714.6L1147.4 711.3L1149.8 713.6z" fill="#fff000" stroke="#ffc800" stroke-width=".4"/><path d="M1152.4 717h.1M1151.6 718.8h.1M1149.8 719.6h.1M1148 718.8h.1M1147.2 717h.1M1148 715.2h.1M1149.8 714.4h.1M1151.6 715.2h.1" stroke="#ff3000" stroke-width="1.1" stroke-linecap="round" fill="none"/>
<path d="M1223.4 724.3L1223.4 727.6L1226.7 727.6L1224.4 730L1226.7 732.4L1223.4 732.4L1223.4 735.7L1221 733.4L1218.6 735.7L1218.6 732.4L1215.3 732.4L1217.6 730L1215.3 727.6L1218.6 727.6L1218.6 724.3L1221 726.6z" fill="#fff000" stroke="#ffc800" stroke-width=".4"/><path d="M1223.6 730h.1M1222.8 731.8h.1M1221 732.6h.1M1219.2 731.8h.1M1218.4 730h.1M1219.2 728.2h.1M1221 727.4h.1M1222.8 728.2h.1" stroke="#ff3000" stroke-width="1.1" stroke-linecap="round" fill="none"/>
<circle cx="1309.4" cy="641.7" r="9.3" fill="none" stroke="#00d000" stroke-width="1.4"/><path d="M1316 641.7L1317.2 641.7M1315.1 645L1316.2 645.6M1312.7 647.4L1313.3 648.5M1309.4 648.3L1309.4 649.5M1306.1 647.4L1305.5 648.5M1303.7 645L1302.6 645.6M1302.8 641.7L1301.6 641.7M1303.7 638.4L1302.6 637.8M1306.1 636L1305.5 634.9M1309.4 635.1L1309.4 633.9M1312.7 636L1313.3 634.9M1315.1 638.4L1316.2 637.8" stroke="#00c000" stroke-width="1" fill="none"/>
<path d="M1311.8 636L1311.8 639.3L1315.1 639.3L1312.8 641.7L1315.1 644.1L1311.8 644.1L1311.8 647.4L1309.4 645.1L1307 647.4L1307 644.1L1303.7 644.1L1306 641.7L1303.7 639.3L1307 639.3L1307 636L1309.4 638.3z" fill="#fff000" stroke="#ffc800" stroke-width=".4"/><path d="M1312 641.7h.1M1311.2 643.5h.1M1309.4 644.3h.1M1307.6 643.5h.1M1306.8 641.7h.1M1307.6 639.9h.1M1309.4 639.1h.1M1311.2 639.9h.1" stroke="#ff3000" stroke-width="1.1" stroke-linecap="round" fill="none"/>
<path d="M1309.4 635.7V641.7H1314.9" stroke="#00d000" stroke-width="1.3" fill="none"/>
<circle cx="1341" cy="742" r="9.3" fill="none" stroke="#00d000" stroke-width="1.4"/><path d="M1347.6 742L1348.8 742M1346.7 745.3L1347.8 745.9M1344.3 747.7L1344.9 748.8M1341 748.6L1341 749.8M1337.7 747.7L1337.1 748.8M1335.3 745.3L1334.2 745.9M1334.4 742L1333.2 742M1335.3 738.7L1334.2 738.1M1337.7 736.3L1337.1 735.2M1341 735.4L1341 734.2M1344.3 736.3L1344.9 735.2M1346.7 738.7L1347.8 738.1" stroke="#00c000" stroke-width="1" fill="none"/>
<path d="M1343.4 736.3L1343.4 739.6L1346.7 739.6L1344.4 742L1346.7 744.4L1343.4 744.4L1343.4 747.7L1341 745.4L1338.6 747.7L1338.6 744.4L1335.3 744.4L1337.6 742L1335.3 739.6L1338.6 739.6L1338.6 736.3L1341 738.6z" fill="#fff000" stroke="#ffc800" stroke-width=".4"/><path d="M1343.6 742h.1M1342.8 743.8h.1M1341 744.6h.1M1339.2 743.8h.1M1338.4 742h.1M1339.2 740.2h.1M1341 739.4h.1M1342.8 740.2h.1" stroke="#ff3000" stroke-width="1.1" stroke-linecap="round" fill="none"/>
<path d="M1341 736V742H1346.5" stroke="#00d000" stroke-width="1.3" fill="none"/>
<circle cx="1397" cy="690" r="3.6" fill="#ff0000"/>
<circle cx="1461" cy="727.7" r="3.6" fill="#00e000"/>
<path d="M1495.4 665.3L1495.4 668.6L1498.7 668.6L1496.4 671L1498.7 673.4L1495.4 673.4L1495.4 676.7L1493 674.4L1490.6 676.7L1490.6 673.4L1487.3 673.4L1489.6 671L1487.3 668.6L1490.6 668.6L1490.6 665.3L1493 667.6z" fill="#fff000" stroke="#ffc800" stroke-width=".4"/><path d="M1495.6 671h.1M1494.8 672.8h.1M1493 673.6h.1M1491.2 672.8h.1M1490.4 671h.1M1491.2 669.2h.1M1493 668.4h.1M1494.8 669.2h.1" stroke="#ff3000" stroke-width="1.1" stroke-linecap="round" fill="none"/></g><path d="M12.5 81.5H1880.5M12.5 81.5V833.5M12.5 630.5H1920M12.5 633.5H1920M12.5 833.5H1880.5" stroke="#fff" stroke-width="1" fill="none"/><path d="M1500 82h11l-5.5 5z" fill="#8a9bb0"/><path d="M17 92l4.5-5 4.5 5z" fill="#fff"/>
<text x="28" y="93" font-size="10.5" fill="#fff" textLength="55" lengthAdjust="spacingAndGlyphs">XAUUSD,M1</text>
<text x="199" y="107" font-size="26" fill="#ffff00" font-weight="300" font-family='"Liberation Serif","Noto Serif CJK SC",serif' textLength="479" lengthAdjust="spacingAndGlyphs">【众贻财富俱乐部】人工交易分析系统</text>
<text x="18" y="618" font-size="12.5" fill="#ffff00" textLength="384" lengthAdjust="spacing">当前货币盈利单已全平仓　最新外汇交易策略请联系QQ:319099268</text>
<text x="1302" y="441" font-size="12" fill="#fff">多空分界线</text>
<text x="1314" y="577" font-size="12" fill="#fff">支撑0.5</text>
<text x="1320" y="262" font-size="12" fill="#ccc">压力0.5</text>
<text x="1320" y="86" font-size="12" fill="#ddd">压力1</text>
<text x="1527" y="215" font-size="23" fill="#ffff00">&lt;0:36</text>
<text x="1877" y="94" font-size="10" fill="#fff" text-anchor="end">自动平仓系统<tspan font-size="14" dy="1">☹</tspan></text>
<text x="1869" y="117" font-size="15" fill="#fff" text-anchor="end">500 : 1 杠杆</text>
<text x="1869" y="140" font-size="14" fill="#fff" text-anchor="end">58694.99 = 净值</text>
<text x="1869" y="167" font-size="22" fill="#fff" text-anchor="end">仓位:0.0%</text>
<text x="1869" y="187" font-size="17" fill="#fff" text-anchor="end">0.00 = 0.00%</text>
<text x="1858" y="209" font-size="12" fill="#fff" text-anchor="end">4695.6 = 8%</text>
<text x="1858" y="229" font-size="12" fill="#fff" text-anchor="end">2934.7 = 5%</text>
<text x="1858" y="249" font-size="12" fill="#fff" text-anchor="end">1760.8 = 3%</text>
<text x="1869" y="265" font-size="15" fill="#ffff00" text-anchor="end">0 = 单量统计</text>
<text x="1869" y="280" font-size="12.5" fill="#fff" text-anchor="end">15.36 = 极限仓</text>
<text x="1869" y="299.5" font-size="13" fill="#fff" text-anchor="end">5.53=重仓 ③</text>
<text x="1869" y="319.5" font-size="13" fill="#fff" text-anchor="end">2.30=标仓 ②</text>
<text x="1869" y="339.5" font-size="13" fill="#fff" text-anchor="end">1.38=轻仓 ①</text>
<text x="1869" y="359.5" font-size="13" fill="#fff" text-anchor="end">0.46=试盘 ≌</text>
<text x="1865" y="397" font-size="16" fill="#fff" text-anchor="end">23 //\:112</text>
<text x="1865" y="417" font-size="16" fill="#fff" text-anchor="end">77 \\/:361</text>
<text x="1865" y="452" font-size="16" fill="#fff" text-anchor="end">23 //\:112</text>
<text x="1865" y="477" font-size="16" fill="#fff" text-anchor="end">19 \\/:259</text>
<text x="1865" y="517" font-size="16" fill="#fff" text-anchor="end">0 //\:5</text>
<text x="1865" y="537" font-size="16" fill="#fff" text-anchor="end">4 \\/:211</text>
<path d="M1781 416V392M1777 399l4-9 4 9" stroke="#fff" stroke-width="1.6" fill="none"/>
<path d="M1779 450V475M1775 468l4 9 4-9" stroke="#fff" stroke-width="1.6" fill="none"/>
<path d="M1781 536V510M1777 517l4-9 4 9" stroke="#fff" stroke-width="1.6" fill="none"/>
<line x1="1880.5" y1="82" x2="1880.5" y2="833" stroke="#fff" stroke-width="1"/>
<line x1="1881" y1="94.5" x2="1884" y2="94.5" stroke="#fff"/>
<text x="1886.5" y="98" font-size="10" fill="#fff" textLength="32.5" lengthAdjust="spacingAndGlyphs">1911.45</text>
<line x1="1881" y1="127.5" x2="1884" y2="127.5" stroke="#fff"/>
<text x="1886.5" y="131" font-size="10" fill="#fff" textLength="32.5" lengthAdjust="spacingAndGlyphs">1911.00</text>
<line x1="1881" y1="160.5" x2="1884" y2="160.5" stroke="#fff"/>
<text x="1886.5" y="164" font-size="10" fill="#fff" textLength="32.5" lengthAdjust="spacingAndGlyphs">1910.55</text>
<line x1="1881" y1="227.5" x2="1884" y2="227.5" stroke="#fff"/>
<text x="1886.5" y="231" font-size="10" fill="#fff" textLength="32.5" lengthAdjust="spacingAndGlyphs">1909.65</text>
<line x1="1881" y1="260.5" x2="1884" y2="260.5" stroke="#fff"/>
<text x="1886.5" y="264" font-size="10" fill="#fff" textLength="32.5" lengthAdjust="spacingAndGlyphs">1909.20</text>
<line x1="1881" y1="293.5" x2="1884" y2="293.5" stroke="#fff"/>
<text x="1886.5" y="297" font-size="10" fill="#fff" textLength="32.5" lengthAdjust="spacingAndGlyphs">1908.75</text>
<line x1="1881" y1="326.5" x2="1884" y2="326.5" stroke="#fff"/>
<text x="1886.5" y="330" font-size="10" fill="#fff" textLength="32.5" lengthAdjust="spacingAndGlyphs">1908.30</text>
<line x1="1881" y1="360.5" x2="1884" y2="360.5" stroke="#fff"/>
<text x="1886.5" y="364" font-size="10" fill="#fff" textLength="32.5" lengthAdjust="spacingAndGlyphs">1907.85</text>
<line x1="1881" y1="393.5" x2="1884" y2="393.5" stroke="#fff"/>
<text x="1886.5" y="397" font-size="10" fill="#fff" textLength="32.5" lengthAdjust="spacingAndGlyphs">1907.40</text>
<line x1="1881" y1="459.5" x2="1884" y2="459.5" stroke="#fff"/>
<text x="1886.5" y="463" font-size="10" fill="#fff" textLength="32.5" lengthAdjust="spacingAndGlyphs">1906.50</text>
<line x1="1881" y1="493.5" x2="1884" y2="493.5" stroke="#fff"/>
<text x="1886.5" y="497" font-size="10" fill="#fff" textLength="32.5" lengthAdjust="spacingAndGlyphs">1906.05</text>
<line x1="1881" y1="526.5" x2="1884" y2="526.5" stroke="#fff"/>
<text x="1886.5" y="530" font-size="10" fill="#fff" textLength="32.5" lengthAdjust="spacingAndGlyphs">1905.60</text>
<line x1="1881" y1="593.5" x2="1884" y2="593.5" stroke="#fff"/>
<text x="1886.5" y="597" font-size="10" fill="#fff" textLength="32.5" lengthAdjust="spacingAndGlyphs">1904.70</text>
<line x1="1881" y1="626.5" x2="1884" y2="626.5" stroke="#fff"/>
<text x="1886.5" y="630" font-size="10" fill="#fff" textLength="32.5" lengthAdjust="spacingAndGlyphs">1904.25</text>
<rect x="1881" y="188" width="39" height="12" fill="#fff"/>
<text x="1886.5" y="198" font-size="10" fill="#000" textLength="32.5" lengthAdjust="spacingAndGlyphs">1910.09</text>
<rect x="1881" y="244" width="39" height="12" fill="#9acd32"/>
<text x="1886.5" y="254" font-size="10" fill="#000" textLength="32.5" lengthAdjust="spacingAndGlyphs">1909.32</text>
<rect x="1881" y="423" width="39" height="12" fill="#ff00ff"/>
<text x="1886.5" y="433" font-size="10" fill="#fff" textLength="32.5" lengthAdjust="spacingAndGlyphs">1906.91</text>
<rect x="1881" y="559" width="39" height="12" fill="#ff6347"/>
<text x="1886.5" y="569" font-size="10" fill="#fff" textLength="32.5" lengthAdjust="spacingAndGlyphs">1905.07</text>
<text x="1885" y="643" font-size="10" fill="#fff" textLength="37.6" lengthAdjust="spacingAndGlyphs">1911.548</text>
<text x="1885" y="655" font-size="10" fill="#fff" textLength="14.1" lengthAdjust="spacingAndGlyphs">250</text>
<text x="1885" y="697" font-size="10" fill="#fff" textLength="14.1" lengthAdjust="spacingAndGlyphs">0.7</text>
<text x="1885" y="710" font-size="10" fill="#fff" textLength="14.1" lengthAdjust="spacingAndGlyphs">100</text>
<text x="1885" y="784" font-size="10" fill="#fff" textLength="4.7" lengthAdjust="spacingAndGlyphs">0</text>
<text x="1885" y="830" font-size="10" fill="#fff" textLength="37.6" lengthAdjust="spacingAndGlyphs">1904.101</text>
<text x="17" y="645" font-size="10" fill="#fff" textLength="146" lengthAdjust="spacingAndGlyphs">布谷鸟的早晨 1910.1400 1910.1400</text>
<line x1="13.5" y1="834" x2="13.5" y2="837" stroke="#fff"/>
<text x="13" y="846.5" font-size="10" fill="#fff" textLength="44" lengthAdjust="spacingAndGlyphs">1 Jun 2021</text>
<line x1="77.5" y1="834" x2="77.5" y2="837" stroke="#fff"/>
<text x="77" y="846.5" font-size="10" fill="#fff" textLength="47" lengthAdjust="spacingAndGlyphs">1 Jun 09:53</text>
<line x1="141.5" y1="834" x2="141.5" y2="837" stroke="#fff"/>
<text x="141" y="846.5" font-size="10" fill="#fff" textLength="47" lengthAdjust="spacingAndGlyphs">1 Jun 10:01</text>
<line x1="205.5" y1="834" x2="205.5" y2="837" stroke="#fff"/>
<text x="205" y="846.5" font-size="10" fill="#fff" textLength="47" lengthAdjust="spacingAndGlyphs">1 Jun 10:09</text>
<line x1="269.5" y1="834" x2="269.5" y2="837" stroke="#fff"/>
<text x="269" y="846.5" font-size="10" fill="#fff" textLength="47" lengthAdjust="spacingAndGlyphs">1 Jun 10:17</text>
<line x1="333.5" y1="834" x2="333.5" y2="837" stroke="#fff"/>
<text x="333" y="846.5" font-size="10" fill="#fff" textLength="47" lengthAdjust="spacingAndGlyphs">1 Jun 10:25</text>
<line x1="397.5" y1="834" x2="397.5" y2="837" stroke="#fff"/>
<text x="397" y="846.5" font-size="10" fill="#fff" textLength="47" lengthAdjust="spacingAndGlyphs">1 Jun 10:33</text>
<line x1="461.5" y1="834" x2="461.5" y2="837" stroke="#fff"/>
<text x="461" y="846.5" font-size="10" fill="#fff" textLength="47" lengthAdjust="spacingAndGlyphs">1 Jun 10:41</text>
<line x1="525.5" y1="834" x2="525.5" y2="837" stroke="#fff"/>
<text x="525" y="846.5" font-size="10" fill="#fff" textLength="47" lengthAdjust="spacingAndGlyphs">1 Jun 10:49</text>
<line x1="589.5" y1="834" x2="589.5" y2="837" stroke="#fff"/>
<text x="589" y="846.5" font-size="10" fill="#fff" textLength="47" lengthAdjust="spacingAndGlyphs">1 Jun 10:57</text>
<line x1="653.5" y1="834" x2="653.5" y2="837" stroke="#fff"/>
<text x="653" y="846.5" font-size="10" fill="#fff" textLength="47" lengthAdjust="spacingAndGlyphs">1 Jun 11:05</text>
<line x1="717.5" y1="834" x2="717.5" y2="837" stroke="#fff"/>
<text x="717" y="846.5" font-size="10" fill="#fff" textLength="47" lengthAdjust="spacingAndGlyphs">1 Jun 11:13</text>
<line x1="781.5" y1="834" x2="781.5" y2="837" stroke="#fff"/>
<text x="781" y="846.5" font-size="10" fill="#fff" textLength="47" lengthAdjust="spacingAndGlyphs">1 Jun 11:21</text>
<line x1="845.5" y1="834" x2="845.5" y2="837" stroke="#fff"/>
<text x="845" y="846.5" font-size="10" fill="#fff" textLength="47" lengthAdjust="spacingAndGlyphs">1 Jun 11:29</text>
<line x1="909.5" y1="834" x2="909.5" y2="837" stroke="#fff"/>
<text x="909" y="846.5" font-size="10" fill="#fff" textLength="47" lengthAdjust="spacingAndGlyphs">1 Jun 11:37</text>
<line x1="973.5" y1="834" x2="973.5" y2="837" stroke="#fff"/>
<text x="973" y="846.5" font-size="10" fill="#fff" textLength="47" lengthAdjust="spacingAndGlyphs">1 Jun 11:45</text>
<line x1="1037.5" y1="834" x2="1037.5" y2="837" stroke="#fff"/>
<text x="1037" y="846.5" font-size="10" fill="#fff" textLength="47" lengthAdjust="spacingAndGlyphs">1 Jun 11:53</text>
<line x1="1101.5" y1="834" x2="1101.5" y2="837" stroke="#fff"/>
<text x="1101" y="846.5" font-size="10" fill="#fff" textLength="47" lengthAdjust="spacingAndGlyphs">1 Jun 12:01</text>
<line x1="1165.5" y1="834" x2="1165.5" y2="837" stroke="#fff"/>
<text x="1165" y="846.5" font-size="10" fill="#fff" textLength="47" lengthAdjust="spacingAndGlyphs">1 Jun 12:09</text>
<line x1="1229.5" y1="834" x2="1229.5" y2="837" stroke="#fff"/>
<text x="1229" y="846.5" font-size="10" fill="#fff" textLength="47" lengthAdjust="spacingAndGlyphs">1 Jun 12:17</text>
<line x1="1293.5" y1="834" x2="1293.5" y2="837" stroke="#fff"/>
<text x="1293" y="846.5" font-size="10" fill="#fff" textLength="47" lengthAdjust="spacingAndGlyphs">1 Jun 12:25</text>
<line x1="1357.5" y1="834" x2="1357.5" y2="837" stroke="#fff"/>
<text x="1357" y="846.5" font-size="10" fill="#fff" textLength="47" lengthAdjust="spacingAndGlyphs">1 Jun 12:33</text>
<line x1="1421.5" y1="834" x2="1421.5" y2="837" stroke="#fff"/>
<text x="1421" y="846.5" font-size="10" fill="#fff" textLength="47" lengthAdjust="spacingAndGlyphs">1 Jun 12:41</text>
<line x1="1485.5" y1="834" x2="1485.5" y2="837" stroke="#fff"/>
<text x="1485" y="846.5" font-size="10" fill="#fff" textLength="47" lengthAdjust="spacingAndGlyphs">1 Jun 12:49</text><circle cx="1862.2" cy="775.2" r="30.2" fill="#e6f1e6" stroke="#3fd968" stroke-width="4.4"/><path d="M1852.9 803.9A30.2 30.2 0 0 1 1862.2 745" stroke="#4c4c4c" stroke-width="4.4" fill="none"/><path d="M1851.9 806.1A32.5 32.5 0 0 1 1862.2 742.7" stroke="#c8c8c8" stroke-width=".8" fill="none"/><circle cx="1862.2" cy="775.2" r="27.8" fill="none" stroke="#35c85a" stroke-width=".8"/><text x="1844" y="776" font-size="23" fill="#444" font-weight="300" textLength="25" lengthAdjust="spacingAndGlyphs">55</text><text x="1869.500" y="776" font-size="12" fill="#444">%</text><text x="1843" y="792" font-size="9" fill="#555" textLength="37" lengthAdjust="spacingAndGlyphs"><tspan fill="#1e90ff" font-weight="bold">↑</tspan>0.08K/s</text></svg><div class="abs" style="left:16px;top:101px;width:220px;height:58px"><div class="abs" style="left:0;top:0;width:51px;height:24px;background:linear-gradient(#f85858,#d82828);color:#fff;font-size:13px;text-align:center;padding-top:4px">SELL<div class="abs" style="left:4px;top:22px;width:43px;height:1px;background:#ff9090"></div></div><div class="abs" style="left:168px;top:0;width:52px;height:24px;background:linear-gradient(#f85858,#d82828);color:#fff;font-size:13px;text-align:center;padding-top:4px">BUY<div class="abs" style="left:4px;top:22px;width:43px;height:1px;background:#ff9090"></div></div><div class="abs" style="left:54px;top:1px;width:111px;height:21px;background:#fff;border:1px solid #999"></div><div class="abs" style="left:55px;top:2px;width:20px;height:19px;background:linear-gradient(#f4f4f4,#cfcfcf);border-right:1px solid #aaa"><div class="abs" style="left:6px;top:8px;border:4px solid transparent;border-top:4px solid #4a5aba"></div></div><div class="abs" style="left:144px;top:2px;width:20px;height:19px;background:linear-gradient(#f4f4f4,#cfcfcf);border-left:1px solid #aaa"><div class="abs" style="left:6px;top:3px;border:4px solid transparent;border-bottom:4px solid #4a5aba"></div></div><div class="abs" style="left:76px;top:3px;width:65px;text-align:right;font-size:13px;color:#0a1a4a">0.50</div><div class="abs" style="left:0;top:24px;width:109px;height:33px;background:linear-gradient(#d42424,#a80000)"></div><div class="abs" style="left:111px;top:24px;width:109px;height:33px;background:linear-gradient(#d42424,#a80000)"></div><div class="abs" style="left:23px;top:40px;font-size:12px;font-weight:bold;color:#fff">1910</div><div class="abs" style="left:54px;top:18px;font-size:35px;color:#fff;letter-spacing:-1px;transform:scaleX(.92);transform-origin:left">09</div><div class="abs" style="left:133px;top:40px;font-size:12px;font-weight:bold;color:#fff">1910</div><div class="abs" style="left:166px;top:18px;font-size:35px;color:#fff;letter-spacing:-1px;transform:scaleX(.92);transform-origin:left">26</div></div><div id="tabs" class="abs"><div class="abs" style="left:3px;top:1px;width:2px;height:16px;background:#444"></div><div class="abs" style="left:6px;top:0;width:96px;height:19px;background:#fff;border:1px solid #000;border-top:0;border-width:0 2px 2px 1px;font-size:12.5px;padding:3px 0 0 11px">XAUUSD,M1</div><div class="abs" style="left:114px;top:3px;font-size:12.5px;color:#777">XAUUSD,M5</div><div class="abs" style="left:198px;top:3px;width:1px;height:14px;background:#666"></div><div class="abs" style="left:1884px;top:5px;border:4px solid transparent;border-right:5px solid #666;border-left:0"></div><div class="abs" style="left:1903px;top:5px;border:4px solid transparent;border-left:5px solid #666;border-right:0"></div></div><div id="term" class="abs"><div class="abs" style="left:3px;top:1px;font-size:13px;font-weight:bold">×</div><div class="abs" style="left:16px;top:2px;width:1896px;height:140px;background:#fff;border-top:1px solid #999;border-bottom:1.500px solid #000"></div><div class="abs" style="left:16px;top:3px;width:1896px;height:23px;background:linear-gradient(#fff,#f4f4f4);border-bottom:1px solid #d5d5d5"></div><div class="hd" style="left:16px;top:3px;width:152px;text-align:left;padding-left:6px">订单<span style="color:#999;font-size:8px;margin-left:12px">∕</span></div><div class="hd" style="left:80px;top:3px;width:301px">时间</div><div class="hd" style="left:381px;top:3px;width:106px">类型</div><div class="hd" style="left:487px;top:3px;width:82px">手数</div><div class="hd" style="left:569px;top:3px;width:106px">交易品种</div><div class="hd" style="left:675px;top:3px;width:118px">价格</div><div class="hd" style="left:793px;top:3px;width:118px">止损</div><div class="hd" style="left:911px;top:3px;width:118px">止盈</div><div class="hd" style="left:1029px;top:3px;width:118px">价格</div><div class="hd" style="left:1147px;top:3px;width:118px">手续费</div><div class="hd" style="left:1265px;top:3px;width:118px">库存费</div><div class="hd" style="left:1383px;top:3px;width:177px">获利</div><div class="hd" style="left:1560px;top:3px;width:356px">注释</div><div class="abs" style="left:16px;top:27px;width:1896px;height:21px;background:#c9c9c9"></div><div class="abs" style="left:25px;top:33px;width:8px;height:8px;border-radius:4px;border:1px solid #888;background:#ddd"></div><div class="abs" style="left:38px;top:30px;line-height:15px;font-size:12.5px;font-weight:bold;white-space:nowrap">余额: 58 694.99 USD&nbsp; 净值: 58 694.99&nbsp; 可用预付款: 58 694.99</div><div class="abs" style="left:1452px;top:30px;line-height:15px;width:104px;text-align:right;font-size:12.5px;font-weight:bold">0.00</div><div class="abs" style="left:2px;top:142px;width:12px;height:20px;font-size:9px;color:#444;line-height:9px;overflow:hidden">器<br>▒</div><div class="abs" style="left:18px;top:141px;width:44px;height:21px;background:#fff;border:1px solid #000;border-top:0;border-left:0;border-bottom:0"></div><div class="abs" style="left:0;top:142px;height:20px;width:1200px"><span class="bt" style="left:28px;color:#000">交易</span><span class="bt" style="left:72px">展示</span><span class="bt" style="left:116px">账户历史</span><span class="bt" style="left:184px">新闻</span><span class="bt" style="left:228px">警报</span><span class="bt" style="left:272px">邮箱</span><span class="bt" style="left:324px">市场</span><span class="bt" style="left:368px">文章</span><span class="bt" style="left:412px">代码库</span><span class="bt" style="left:468px">EA</span><span class="bt" style="left:503px">日志</span><span class="bt" style="left:301px;top:6px;font-size:10.5px;color:#e00000;font-weight:bold">5</span><div class="bs" style="left:106px"></div><div class="bs" style="left:174px"></div><div class="bs" style="left:218px"></div><div class="bs" style="left:262px"></div><div class="bs" style="left:314px"></div><div class="bs" style="left:358px"></div><div class="bs" style="left:402px"></div><div class="bs" style="left:458px"></div><div class="bs" style="left:492px"></div><div class="bs" style="left:537px"></div></div></div><div id="taskbar" class="abs"><div class="abs" style="left:10px;top:2px;width:34px;height:34px;border-radius:17px;background:radial-gradient(circle at 50% 40%,#9ac0e8,#2a5a9a 70%);border:1px solid #1a3a6a"></div><div class="abs" style="left:60px;top:1px;width:158px;height:20px;border:1px solid #24405e;border-radius:3px;background:linear-gradient(rgba(200,220,240,.55),rgba(140,170,200,.35))"></div><div class="abs" style="left:346px;top:1px;width:157px;height:20px;border:1px solid #24405e;border-radius:3px;background:linear-gradient(rgba(200,220,240,.55),rgba(140,170,200,.35))"></div><div class="abs" style="left:507px;top:1px;width:158px;height:20px;border:1px solid #24405e;border-radius:3px;background:linear-gradient(rgba(200,220,240,.55),rgba(140,170,200,.35))"></div><div class="abs" style="left:70px;top:5px;width:30px;height:30px;border-radius:15px;background:#fff;border:3px solid #2a7ad8"></div><div class="abs" style="left:235px;top:8px;width:32px;height:14px;background:#f0dc90;border:1px solid #b09030;border-radius:2px"></div><div class="abs" style="left:297px;top:6px;width:30px;height:30px;border-radius:15px;background:#fff;border:2px solid #2a6ad8"></div><div class="abs" style="left:355px;top:4px;width:32px;height:20px;background:#c01818"><div class="abs" style="left:9px;top:5px;width:14px;height:14px;background:#fff;transform:rotate(45deg)"></div></div><div class="abs" style="left:520px;top:4px;width:30px;height:20px;border-radius:5px;background:#1e90ff"><div class="abs" style="left:12px;top:4px;width:6px;height:12px;background:#fff"></div></div><div class="abs" style="left:1512px;top:12px;width:10px;height:8px;border-radius:3px 3px 0 0;background:#9a8a80"></div><div class="abs" style="left:1536px;top:12px;width:6px;height:8px;border-radius:3px 3px 0 0;background:#fff"></div><div class="abs" style="left:1570px;top:12px;width:9px;height:8px;border-radius:3px 3px 0 0;background:#eee"></div><div class="abs" style="left:1600px;top:12px;width:12px;height:8px;border-radius:3px 3px 0 0;background:#c89050"></div><div class="abs" style="left:1624px;top:12px;width:13px;height:8px;border-radius:3px 3px 0 0;background:#1e90ff"></div><div class="abs" style="left:1647px;top:12px;width:13px;height:8px;border-radius:3px 3px 0 0;background:#7ac020"></div><div class="abs" style="left:1672px;top:12px;width:12px;height:8px;border-radius:3px 3px 0 0;background:#eee"></div><div class="abs" style="left:1695px;top:12px;width:11px;height:8px;border-radius:3px 3px 0 0;background:#fff"></div><div class="abs" style="left:1717px;top:12px;width:8px;height:8px;border-radius:3px 3px 0 0;background:#aaa"></div><div class="abs" style="left:1740px;top:12px;width:15px;height:8px;border-radius:3px 3px 0 0;background:#223"></div><div class="abs" style="left:1767px;top:12px;width:10px;height:8px;border-radius:3px 3px 0 0;background:#223"></div><div class="abs" style="left:1489px;top:11px;font-size:10px;color:#fff">CH</div><div class="abs" style="left:1828px;top:4px;font-size:14px;color:#fff;width:40px;text-align:center">20:50</div><div class="abs" style="left:1905px;top:0;width:15px;height:16px;border-left:1px solid #8aa4c0;background:linear-gradient(90deg,#5a7898,#3a5878)"></div></div></body></html>
